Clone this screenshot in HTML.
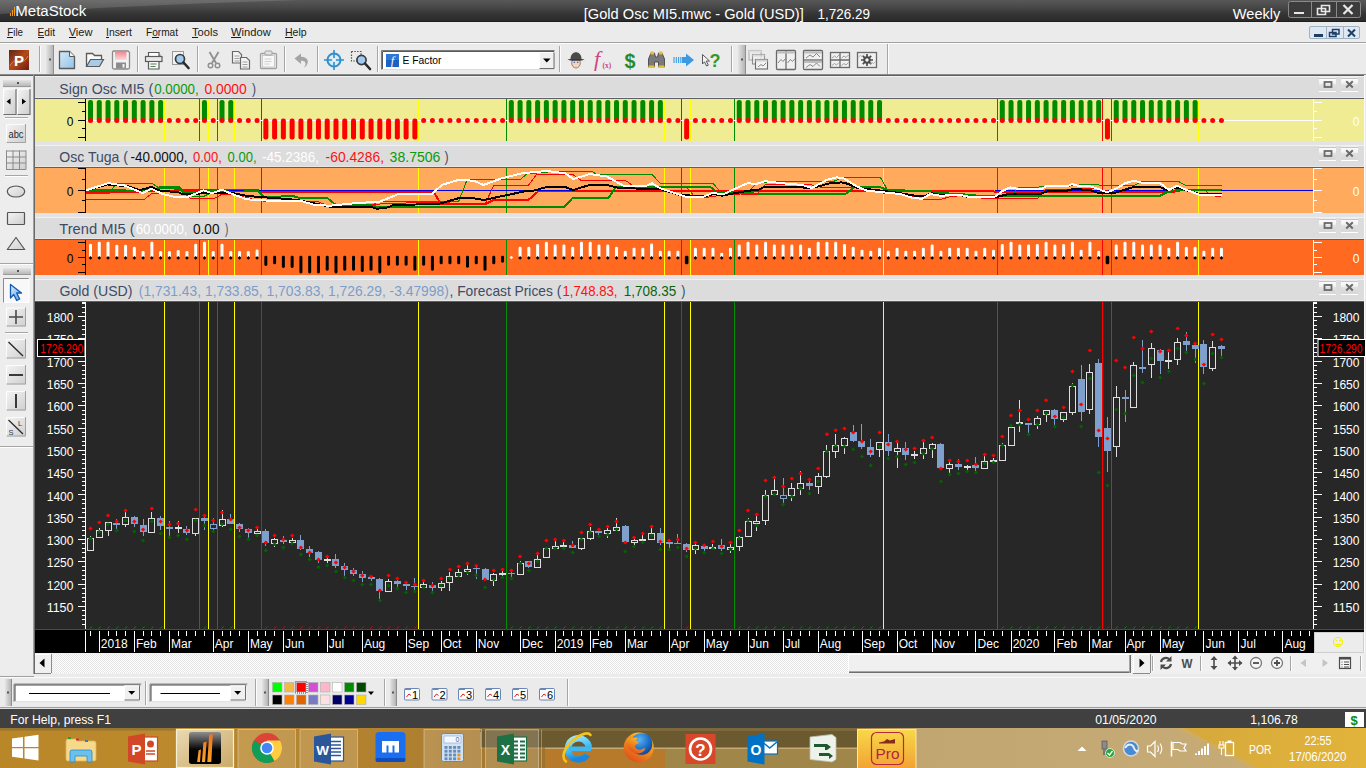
<!DOCTYPE html>
<html lang="en"><head><meta charset="utf-8"><title>MetaStock - Gold Osc MI5</title>
<style>html,body{margin:0;padding:0;background:#f0f0f0;overflow:hidden}svg{display:block}text{white-space:pre}</style>
</head><body>
<svg width="1366" height="768" viewBox="0 0 1366 768" font-family='"Liberation Sans", sans-serif'>
<defs>
<linearGradient id="gTitle" x1="0" y1="0" x2="0" y2="1"><stop offset="0" stop-color="#585858"/><stop offset="0.4" stop-color="#444444"/><stop offset="0.6" stop-color="#363636"/><stop offset="0.93" stop-color="#2b2b2b"/><stop offset="1" stop-color="#161616"/></linearGradient>
<linearGradient id="gBtn" x1="0" y1="0" x2="0" y2="1"><stop offset="0" stop-color="#ffffff"/><stop offset="0.45" stop-color="#f2f2f2"/><stop offset="0.5" stop-color="#e2e2e2"/><stop offset="1" stop-color="#d6d6d6"/></linearGradient>
<linearGradient id="gBtnD" x1="0" y1="0" x2="1" y2="1"><stop offset="0" stop-color="#f4f4f4"/><stop offset="1" stop-color="#cfcfcf"/></linearGradient>
<linearGradient id="gGrip" x1="0" y1="0" x2="1" y2="0"><stop offset="0" stop-color="#e4e4e4"/><stop offset="1" stop-color="#b4b4b4"/></linearGradient>
<linearGradient id="gGripV" x1="0" y1="0" x2="0" y2="1"><stop offset="0" stop-color="#e4e4e4"/><stop offset="1" stop-color="#b8b8b8"/></linearGradient>
<linearGradient id="gTask" x1="0" y1="0" x2="1" y2="0"><stop offset="0" stop-color="#b98628"/><stop offset="0.12" stop-color="#bc8a2c"/><stop offset="0.30" stop-color="#b08030"/><stop offset="0.40" stop-color="#9c7430"/><stop offset="0.62" stop-color="#a87a34"/><stop offset="0.675" stop-color="#c2a672"/><stop offset="0.85" stop-color="#c6aa76"/><stop offset="1" stop-color="#c8ac74"/></linearGradient>
</defs>
<rect x="0" y="0" width="1366" height="768" fill="#f0f0f0" shape-rendering="crispEdges"/>
<g id="titlebar">
<rect x="0" y="0" width="1366" height="22" fill="url(#gTitle)" shape-rendering="crispEdges"/>
<path d="M0 0H300C200 3 80 8 0 14Z" fill="#ffffff" opacity="0.13"/>
<rect x="0" y="21.5" width="1366" height="0.5" fill="#f6f6f6" shape-rendering="crispEdges"/>
<rect x="10" y="13" width="1" height="3" fill="#f39a1e" shape-rendering="crispEdges"/>
<rect x="12" y="10" width="1" height="6" fill="#f39a1e" shape-rendering="crispEdges"/>
<rect x="14" y="7" width="1" height="9" fill="#f39a1e" shape-rendering="crispEdges"/>
<text x="15.3" y="15.8" font-size="14" fill="#ffffff" textLength="71" lengthAdjust="spacingAndGlyphs">MetaStock</text>
<text x="583.8" y="18.6" font-size="14.5" fill="#ffffff" textLength="220" lengthAdjust="spacingAndGlyphs">[Gold Osc MI5.mwc - Gold (USD)]</text>
<text x="817.5" y="18.6" font-size="14.5" fill="#ffffff" textLength="52.5" lengthAdjust="spacingAndGlyphs">1,726.29</text>
<text x="1232.8" y="18.6" font-size="14.5" fill="#ffffff" textLength="47.5" lengthAdjust="spacingAndGlyphs">Weekly</text>
<rect x="1288.5" y="1.5" width="72" height="16" rx="2" fill="#3c3c3c" stroke="#8a8a8a"/>
<rect x="1311" y="2" width="1" height="15" fill="#8a8a8a" shape-rendering="crispEdges"/>
<rect x="1336" y="2" width="1" height="15" fill="#8a8a8a" shape-rendering="crispEdges"/>
<rect x="1294" y="12" width="10" height="2" fill="#e8e8e8" shape-rendering="crispEdges"/>
<path d="M1321.5 5.5h8v6h-8z M1317.5 8.500h8v6h-8z" fill="none" stroke="#e8e8e8" stroke-width="1.6"/>
<path d="M1343.5 5l9 9M1352.500 5l-9 9" stroke="#e8e8e8" stroke-width="2.2"/>
</g>
<g id="menubar">
<rect x="0" y="22" width="1366" height="21" fill="#ebebeb" shape-rendering="crispEdges"/>
<rect x="0" y="42" width="1366" height="1" fill="#a2a2a2" shape-rendering="crispEdges"/>
<text x="7.3" y="35.6" font-size="11.5" fill="#1a1a1a" textLength="15.7" lengthAdjust="spacingAndGlyphs">File</text>
<text x="37.5" y="35.6" font-size="11.5" fill="#1a1a1a" textLength="17.5" lengthAdjust="spacingAndGlyphs">Edit</text>
<text x="68.7" y="35.6" font-size="11.5" fill="#1a1a1a" textLength="23.8" lengthAdjust="spacingAndGlyphs">View</text>
<text x="106" y="35.6" font-size="11.5" fill="#1a1a1a" textLength="26" lengthAdjust="spacingAndGlyphs">Insert</text>
<text x="146" y="35.6" font-size="11.5" fill="#1a1a1a" textLength="32" lengthAdjust="spacingAndGlyphs">Format</text>
<text x="192" y="35.6" font-size="11.5" fill="#1a1a1a" textLength="26" lengthAdjust="spacingAndGlyphs">Tools</text>
<text x="231" y="35.6" font-size="11.5" fill="#1a1a1a" textLength="39.7" lengthAdjust="spacingAndGlyphs">Window</text>
<text x="285" y="35.6" font-size="11.5" fill="#1a1a1a" textLength="21.7" lengthAdjust="spacingAndGlyphs">Help</text>
<rect x="7.3" y="37" width="5.7" height="1" fill="#1a1a1a" shape-rendering="crispEdges"/>
<rect x="37.5" y="37" width="6.5" height="1" fill="#1a1a1a" shape-rendering="crispEdges"/>
<rect x="68.7" y="37" width="6.8" height="1" fill="#1a1a1a" shape-rendering="crispEdges"/>
<rect x="106" y="37" width="2.5" height="1" fill="#1a1a1a" shape-rendering="crispEdges"/>
<rect x="152" y="37" width="6.5" height="1" fill="#1a1a1a" shape-rendering="crispEdges"/>
<rect x="192" y="37" width="6" height="1" fill="#1a1a1a" shape-rendering="crispEdges"/>
<rect x="231" y="37" width="10" height="1" fill="#1a1a1a" shape-rendering="crispEdges"/>
<rect x="285" y="37" width="7.5" height="1" fill="#1a1a1a" shape-rendering="crispEdges"/>
<rect x="1309.5" y="26.5" width="50" height="12" rx="1.5" fill="#dfe8f1" stroke="#9fb2c6"/>
<rect x="1326" y="27" width="1" height="11" fill="#9fb2c6" shape-rendering="crispEdges"/>
<rect x="1343" y="27" width="1" height="11" fill="#9fb2c6" shape-rendering="crispEdges"/>
<rect x="1313.5" y="34" width="9" height="2.5" fill="#1e3e66" shape-rendering="crispEdges"/>
<path d="M1332.500 29.500h6.500v4.500h-6.500z M1329.500 32.500h6.500v4h-6.500z" fill="#dfe8f1" stroke="#1e3e66" stroke-width="1.5"/>
<path d="M1348 29.500l7 7M1355 29.500l-7 7" stroke="#1e3e66" stroke-width="2"/>
</g>
<g id="toolbar">
<rect x="0" y="43" width="1366" height="31" fill="#ebebeb" shape-rendering="crispEdges"/>
<rect x="0" y="43" width="1366" height="1" fill="#fbfbfb" shape-rendering="crispEdges"/>
<rect x="0" y="74" width="1366" height="1" fill="#8a8a8a" shape-rendering="crispEdges"/>
<rect x="0" y="75" width="1364" height="1" fill="#5e5e5e" shape-rendering="crispEdges"/>
</g>
<g id="tbicons"><defs><linearGradient id="gP" x1="0" y1="0" x2="1" y2="1"><stop offset="0" stop-color="#5e2410"/><stop offset="0.5" stop-color="#b24a1c"/><stop offset="1" stop-color="#6a1e10"/></linearGradient><linearGradient id="gDoc" x1="0" y1="0" x2="1" y2="1"><stop offset="0" stop-color="#d6e9f8"/><stop offset="1" stop-color="#8ec3ea"/></linearGradient><linearGradient id="gPink" x1="0" y1="0" x2="0" y2="1"><stop offset="0" stop-color="#f08a94"/><stop offset="1" stop-color="#fbdadd"/></linearGradient></defs><rect x="9" y="50" width="20" height="20" fill="url(#gP)"/><path d="M10 66c6 -12 12 2 18 -10" stroke="#f2a25a" stroke-width="1" fill="none" opacity="0.7"/><text x="19" y="65.500" font-size="15" font-weight="bold" fill="#ffffff" text-anchor="middle">P</text><rect x="39" y="46" width="1" height="26" fill="#a6a6a6"/><rect x="40" y="46" width="1" height="26" fill="#fdfdfd"/><rect x="46" y="45" width="7" height="29" fill="url(#gGrip)"/><rect x="53" y="45" width="1" height="29" fill="#8e8e8e"/><rect x="49" y="58.5" width="2" height="2" fill="#555"/><path d="M59.500 51.500h10l5 5v12h-15z" fill="url(#gDoc)" stroke="#5a5a5a" stroke-width="1.3"/><path d="M69.500 51.500v5h5" fill="#f4f8fb" stroke="#5a5a5a" stroke-width="1"/><path d="M86.500 66.500v-13h6l2 2h7v4" fill="#fbfbfb" stroke="#5a5a5a" stroke-width="1.3"/><path d="M86.500 66.500l4 -7h13l-4 7z" fill="#a8cbe8" stroke="#5a5a5a" stroke-width="1.2"/><path d="M112.500 52.500q0 -1.500 1.500 -1.500h14l1.500 1.500v15q0 1.500 -1.500 1.500h-14q-1.500 0 -1.500 -1.500z" fill="#f2f2f2" stroke="#8a8a8a" stroke-width="1.3"/><rect x="115" y="52" width="11.500" height="8" fill="url(#gPink)"/><rect x="116" y="62.500" width="10" height="6" fill="#8c8c8c"/><rect x="122.500" y="64" width="2" height="3.500" fill="#f2f2f2"/><rect x="137" y="46" width="1" height="26" fill="#a6a6a6"/><rect x="138" y="46" width="1" height="26" fill="#fdfdfd"/><path d="M148.500 57v-4.500h10.500v4.500" fill="#ffffff" stroke="#5a5a5a" stroke-width="1.2"/><rect x="145.500" y="56.500" width="16.500" height="5" fill="#e8e8e8" stroke="#5a5a5a" stroke-width="1.2"/><path d="M148.500 61.500h10.500v7.500h-10.500z" fill="#f4faf4" stroke="#5a5a5a" stroke-width="1.200"/><path d="M150.500 64h6M150.500 66.500h5" stroke="#5a7a5a" stroke-width="1"/><rect x="159" y="54.500" width="1.500" height="1.500" fill="#3aa03a"/><rect x="172.500" y="51.500" width="11" height="13" fill="#f4f4f4" stroke="#9a9a9a"/><circle cx="180" cy="59" r="4.500" fill="#9ecbef" stroke="#3a3a3a" stroke-width="1.700"/><path d="M183.500 62.500l5 5.500" stroke="#2a2a2a" stroke-width="2.600" stroke-linecap="round"/><rect x="197" y="46" width="1" height="26" fill="#a6a6a6"/><rect x="198" y="46" width="1" height="26" fill="#fdfdfd"/><path d="M209.500 52l6.500 11M218.500 52l-6.500 11" stroke="#909090" stroke-width="1.800" fill="none"/><circle cx="210.500" cy="65.500" r="2.300" fill="none" stroke="#909090" stroke-width="1.400"/><circle cx="217.500" cy="65.500" r="2.300" fill="none" stroke="#909090" stroke-width="1.400"/><path d="M232.500 51.500h6l3 3v8.500h-9z" fill="#f4f4f4" stroke="#6a6a6a" stroke-width="1.200"/><path d="M234.500 56h5M234.500 58.500h5M234.500 61h5" stroke="#8a8a8a" stroke-width="0.800"/><path d="M240.500 57.500h6l3 3v8.500h-9z" fill="#f4f4f4" stroke="#6a6a6a" stroke-width="1.200"/><path d="M242.500 62h5M242.500 64.500h5M242.500 67h5" stroke="#8a8a8a" stroke-width="0.800"/><rect x="260.500" y="53.500" width="16" height="15" rx="1" fill="#ededed" stroke="#a2a2a2" stroke-width="1.300"/><rect x="262.500" y="55.500" width="12" height="11.500" fill="#f8f8f8" stroke="#bcbcbc" stroke-width="0.700"/><rect x="265" y="51" width="7" height="4" rx="1" fill="#e2e2e2" stroke="#a2a2a2"/><path d="M264.500 59h7M264.500 61.500h7M264.500 64h5" stroke="#c4c4c4" stroke-width="0.800"/><rect x="284" y="46" width="1" height="26" fill="#a6a6a6"/><rect x="285" y="46" width="1" height="26" fill="#fdfdfd"/><path d="M294.500 58.500l6.500 -5v3.200c8 0 9 7 3 11c3 -4.500 1.500 -7 -3 -7v3.200z" fill="#a4a4a4"/><rect x="317" y="46" width="1" height="26" fill="#a6a6a6"/><rect x="318" y="46" width="1" height="26" fill="#fdfdfd"/><circle cx="334" cy="60" r="6.500" fill="#dfeaf3" stroke="#2d8fd0" stroke-width="2"/><path d="M324 60h20M334 50v20" stroke="#2d8fd0" stroke-width="1.600"/><circle cx="334" cy="60" r="2" fill="#eef4f9"/><rect x="351.500" y="51.500" width="9.500" height="9.500" fill="none" stroke="#555" stroke-width="1.200" stroke-dasharray="1.500 1.300"/><circle cx="361.500" cy="60" r="4.600" fill="#9ecbef" stroke="#3a3a3a" stroke-width="1.700"/><path d="M365 63.500l5 5.500" stroke="#2a2a2a" stroke-width="2.600" stroke-linecap="round"/><rect x="377" y="46" width="1" height="26" fill="#a6a6a6"/><rect x="378" y="46" width="1" height="26" fill="#fdfdfd"/><rect x="381" y="50" width="174" height="20" fill="#ffffff"/><path d="M381.500 70v-19.500h173.500" fill="none" stroke="#7a7a7a"/><path d="M382.500 69v-17.500h171.500" fill="none" stroke="#5a5a5a"/><path d="M381.500 69.500h173v-19" fill="none" stroke="#dcdcdc"/><rect x="386" y="54" width="13" height="13" fill="#1c62c4"/><rect x="386" y="54" width="13" height="6" fill="#3a86e0" opacity="0.6"/><text x="392.500" y="64.500" font-size="12" font-style="italic" font-family='"Liberation Serif", serif' fill="#fff" text-anchor="middle">f</text><text x="402.500" y="64.200" font-size="11.500" fill="#000" textLength="39" lengthAdjust="spacingAndGlyphs">E Factor</text><rect x="539" y="52" width="15" height="17" fill="#f0f0f0"/><path d="M539.500 69v-16.500h14" fill="none" stroke="#ffffff"/><path d="M539.500 68.500h14.500v-16" fill="none" stroke="#6e6e6e"/><path d="M543 58.500h7.500l-3.750 4z" fill="#000"/><rect x="559" y="46" width="1" height="26" fill="#a6a6a6"/><rect x="560" y="46" width="1" height="26" fill="#fdfdfd"/><ellipse cx="576" cy="63" rx="4.300" ry="5" fill="#f6d2bc" stroke="#7a5a4a" stroke-width="0.700"/><path d="M567.500 59.500c3 -1 14 -1 17 0c-1.500 1.800 -15.500 1.800 -17 0z" fill="#3a3a3a"/><path d="M570.500 59c0 -9 11 -9 11 0z" fill="#4a4a4a"/><circle cx="574.300" cy="62.200" r="0.800" fill="#2a6ac0"/><circle cx="577.700" cy="62.200" r="0.800" fill="#2a6ac0"/><text x="594" y="66" font-size="22" font-style="italic" font-family='"Liberation Serif", serif' fill="#d0447e">f</text><text x="602.500" y="67.500" font-size="7.500" font-weight="bold" font-family='"Liberation Serif", serif' fill="#d0447e">(x)</text><text x="630" y="68" font-size="21" font-weight="bold" fill="#2a8a2a" text-anchor="middle" textLength="11" lengthAdjust="spacingAndGlyphs">$</text><path d="M648.500 67v-8l2.500 -6h3.500l1 4h2l1 -4h3.500l2.500 6v8h-6v-5h-4v5z" fill="#7a7a7a" stroke="#3a3a3a" stroke-width="0.800"/><rect x="648.500" y="65.500" width="6" height="2.500" fill="#e8c030"/><rect x="658.500" y="65.500" width="6" height="2.500" fill="#e8c030"/><rect x="650.500" y="51.500" width="3.500" height="3" fill="#e8c030"/><rect x="659" y="51.500" width="3.500" height="3" fill="#e8c030"/><path d="M682 57h4v-3.500l8 6.500l-8 6.500v-3.500h-4z" fill="#3a9ae4"/><path d="M674 57v6M676.300 57v6M678.600 57v6M680.800 57v6" stroke="#3a9ae4" stroke-width="1.100"/><path d="M702.500 54.500l7 6.500h-3.200l2 4.200l-1.800 0.800l-2 -4.200l-2 2.200z" fill="#f4f4f4" stroke="#4a4a4a" stroke-width="0.900"/><text x="715" y="67" font-size="18" font-weight="bold" fill="#2e9a2e" text-anchor="middle">?</text><rect x="731" y="46" width="1" height="26" fill="#a6a6a6"/><rect x="732" y="46" width="1" height="26" fill="#fdfdfd"/><rect x="738" y="45" width="7" height="29" fill="url(#gGrip)"/><rect x="745" y="45" width="1" height="29" fill="#8e8e8e"/><rect x="741" y="58.5" width="2" height="2" fill="#555"/><g opacity="0.45"><rect x="749" y="50.5" width="12" height="9.500" fill="#f2f2f2" stroke="#6a6a6a" stroke-width="1.100"/><rect x="749" y="50.5" width="12" height="2" fill="#cfcfcf"/></g><g opacity="0.7"><rect x="752.5" y="54.5" width="12" height="9.500" fill="#f2f2f2" stroke="#6a6a6a" stroke-width="1.100"/><rect x="752.5" y="54.5" width="12" height="2" fill="#cfcfcf"/></g><g opacity="1"><rect x="755.5" y="59.5" width="12" height="9.500" fill="#f2f2f2" stroke="#6a6a6a" stroke-width="1.100"/><rect x="755.5" y="59.5" width="12" height="2" fill="#cfcfcf"/></g><path d="M758 67l3 -2.500l2 1.500l3 -3" stroke="#7a7a7a" fill="none" stroke-width="0.900"/><rect x="776.500" y="50.500" width="19" height="19" rx="1" fill="#f0f0f0" stroke="#6a6a6a" stroke-width="1.300"/><path d="M786 50.500v19" stroke="#6a6a6a" stroke-width="1.300"/><path d="M777 52.500h18" stroke="#bdbdbd" stroke-width="2"/><path d="M778 63l3 -3.500l2 2l2.500 -3M787.500 63l3 -3.500l2 2l2.500 -3" stroke="#7a7a7a" fill="none" stroke-width="0.900"/><rect x="803.500" y="50.500" width="19" height="19" rx="1" fill="#f0f0f0" stroke="#6a6a6a" stroke-width="1.300"/><path d="M803.500 60h19" stroke="#6a6a6a" stroke-width="1.300"/><path d="M804 52.500h18M804 62h18" stroke="#bdbdbd" stroke-width="2"/><path d="M806 58l4 -3l3 2l3.500 -3.500l3.500 3.500M806 67.500l4 -3l3 2l3.500 -3.500l3.500 3.500" stroke="#7a7a7a" fill="none" stroke-width="0.900"/><rect x="830.500" y="52.500" width="19" height="15" fill="#f0f0f0" stroke="#6a6a6a" stroke-width="1.300"/><path d="M840 52.500v15M830.500 60h19" stroke="#6a6a6a" stroke-width="1.300"/><path d="M832 58l2.500 -2l2 1.500l2.500 -2.500M841.500 58l2.500 -2l2 1.500l2.500 -2.500M832 65.500l2.500 -2l2 1.500l2.500 -2.500M841.500 65.500l2.500 -2l2 1.500l2.500 -2.500" stroke="#8a8a8a" fill="none" stroke-width="0.800"/><rect x="857.500" y="52.500" width="19" height="15" fill="#f0f0f0" stroke="#6a6a6a" stroke-width="1.300"/><path d="M867 54v12M861 60h12M862.800 55.800l8.400 8.400M871.200 55.800l-8.400 8.400" stroke="#4a4a4a" stroke-width="1.700"/><circle cx="867" cy="60" r="3.700" fill="#4a4a4a"/><circle cx="867" cy="60" r="1.700" fill="#f4f4f4"/><path d="M858.500 57l2 -1.500l1.500 1l2 -2M870 64l2 -1.500l1.500 1l2 -2" stroke="#9a9a9a" fill="none" stroke-width="0.700"/><rect x="887" y="44" width="1" height="30" fill="#a6a6a6"/><rect x="888" y="44" width="1" height="30" fill="#fdfdfd"/></g>
<g id="lefttools">
<rect x="0" y="76" width="33" height="600" fill="#ededed" shape-rendering="crispEdges"/>
<rect x="33" y="75" width="1" height="601" fill="#a0a0a0" shape-rendering="crispEdges"/>
<rect x="34" y="75" width="1" height="601" fill="#6a6a6a" shape-rendering="crispEdges"/>
</g>
<g id="lefticons"><defs><linearGradient id="gPtr" x1="0" y1="0" x2="1" y2="1"><stop offset="0" stop-color="#e8f2fc"/><stop offset="1" stop-color="#4a98e8"/></linearGradient></defs><rect x="3" y="80" width="28" height="6" fill="url(#gGripV)"/><rect x="3" y="86" width="28" height="1" fill="#9a9a9a"/><rect x="17" y="82" width="2" height="2" fill="#555"/><rect x="3.5" y="89" width="12" height="25" fill="url(#gBtnD)"/><path d="M3.5 114.500h12.500v-25.500" fill="none" stroke="#6e6e6e" stroke-width="1.200"/><path d="M3.5 114v-25h12" fill="none" stroke="#ffffff"/><rect x="17.5" y="89" width="12" height="25" fill="url(#gBtnD)"/><path d="M17.5 114.500h12.500v-25.500" fill="none" stroke="#6e6e6e" stroke-width="1.200"/><path d="M17.5 114v-25h12" fill="none" stroke="#ffffff"/><path d="M6.500 101.500l4 -3v6z" fill="#000"/><path d="M26 101.500l-4 -3v6z" fill="#000"/><rect x="5" y="117" width="23" height="1" fill="#a6a6a6"/><rect x="5" y="118" width="23" height="1" fill="#fdfdfd"/><rect x="6" y="124" width="20" height="19" fill="url(#gBtnD)"/><path d="M6.5 143v-18.5h19.5" fill="none" stroke="#fcfcfc"/><path d="M6.5 142.5h19v-18.5" fill="none" stroke="#a2a2a2"/><text x="16" y="137.500" font-size="11.500" fill="#2a2a2a" text-anchor="middle" textLength="15" lengthAdjust="spacingAndGlyphs">abc</text><rect x="6" y="150.500" width="20" height="19" fill="url(#gBtnD)"/><path d="M6.500 150.500v19M13 150.500v19M19.500 150.500v19M26 150.500v19M6 151h20M6 157h20M6 163h20M6 169.500h20" stroke="#8a8a8a" stroke-width="1"/><rect x="5" y="175" width="23" height="1" fill="#a6a6a6"/><rect x="5" y="176" width="23" height="1" fill="#fdfdfd"/><ellipse cx="16" cy="191.500" rx="8.700" ry="5.500" fill="url(#gBtnD)" stroke="#555" stroke-width="1.200"/><rect x="7.500" y="212.500" width="17" height="12" rx="0.800" fill="url(#gBtnD)" stroke="#555" stroke-width="1.200"/><path d="M16 237.500l8.700 12h-17.400z" fill="url(#gBtnD)" stroke="#555" stroke-width="1.200" stroke-linejoin="round"/><rect x="0" y="263" width="33" height="1" fill="#a6a6a6"/><rect x="0" y="264" width="33" height="1" fill="#fdfdfd"/><rect x="3" y="268" width="28" height="6" fill="url(#gGripV)"/><rect x="3" y="274" width="28" height="1" fill="#9a9a9a"/><rect x="17" y="270" width="2" height="2" fill="#555"/><rect x="3" y="278" width="26" height="25" fill="#f8f8f8"/><path d="M3.500 303v-24.500h25.500" fill="none" stroke="#8a8a8a"/><path d="M3.500 302.500h25.500v-24" fill="none" stroke="#ffffff"/><path d="M10.500 284.500l11 8.500h-4.800l3 6l-3 1.500l-3 -6l-3.200 3.500z" fill="url(#gPtr)" stroke="#1458b0" stroke-width="1.300" stroke-linejoin="round"/><rect x="6" y="307.5" width="20" height="19" fill="url(#gBtnD)"/><path d="M6.5 326.5v-18.5h19.5" fill="none" stroke="#fcfcfc"/><path d="M6.5 326.0h19v-18.5" fill="none" stroke="#a2a2a2"/><path d="M9 317h14M16 310v14" stroke="#4a4a4a" stroke-width="1.600"/><rect x="5" y="332" width="23" height="1" fill="#a6a6a6"/><rect x="5" y="333" width="23" height="1" fill="#fdfdfd"/><rect x="6" y="339" width="20" height="19.5" fill="url(#gBtnD)"/><path d="M6.5 358.5v-19.0h19.5" fill="none" stroke="#fcfcfc"/><path d="M6.5 358.0h19v-19.0" fill="none" stroke="#a2a2a2"/><path d="M8.500 342l14.500 14" stroke="#2a2a2a" stroke-width="1.400"/><rect x="6" y="365" width="20" height="19.5" fill="url(#gBtnD)"/><path d="M6.5 384.5v-19.0h19.5" fill="none" stroke="#fcfcfc"/><path d="M6.5 384.0h19v-19.0" fill="none" stroke="#a2a2a2"/><path d="M9 375h14" stroke="#3a3a3a" stroke-width="2"/><rect x="6" y="391" width="20" height="19.5" fill="url(#gBtnD)"/><path d="M6.5 410.5v-19.0h19.5" fill="none" stroke="#fcfcfc"/><path d="M6.5 410.0h19v-19.0" fill="none" stroke="#a2a2a2"/><path d="M16 394v14" stroke="#3a3a3a" stroke-width="2"/><rect x="6" y="417" width="20" height="19.5" fill="url(#gBtnD)"/><path d="M6.5 436.5v-19.0h19.5" fill="none" stroke="#fcfcfc"/><path d="M6.5 436.0h19v-19.0" fill="none" stroke="#a2a2a2"/><path d="M8.500 420l14.500 14" stroke="#2a2a2a" stroke-width="1.300"/><text x="18" y="426" font-size="7.500" fill="#3a3a3a">L</text><text x="8.500" y="434.500" font-size="7.500" fill="#3a3a3a">S</text><rect x="0" y="446" width="33" height="1" fill="#a6a6a6"/><rect x="0" y="447" width="33" height="1" fill="#fdfdfd"/></g>
<rect x="35" y="76" width="1329" height="578" fill="#e6e6e6" shape-rendering="crispEdges"/>
<rect x="1364" y="76" width="2" height="600" fill="#ebebeb" shape-rendering="crispEdges"/>
<rect x="1364" y="76" width="1" height="577" fill="#fafafa" shape-rendering="crispEdges"/>
<g id="signosc">
<rect x="35" y="76" width="1329" height="23" fill="#dcdcdc" shape-rendering="crispEdges"/>
<rect x="35" y="76" width="1329" height="1" fill="#f1f1f1" shape-rendering="crispEdges"/>
<rect x="35" y="97" width="1329" height="1" fill="#e8e8e8" shape-rendering="crispEdges"/>
<rect x="35" y="98" width="1329" height="1" fill="#5c6066" shape-rendering="crispEdges"/>
<text x="59.3" y="93.5" font-size="15" fill="#3d4b66" textLength="93.9" lengthAdjust="spacingAndGlyphs">Sign Osc MI5 (</text>
<text x="154.2" y="93.5" font-size="15" fill="#0a9a0a" textLength="44.5" lengthAdjust="spacingAndGlyphs">0.0000,</text>
<text x="204.4" y="93.5" font-size="15" fill="#ff1010" textLength="42.4" lengthAdjust="spacingAndGlyphs">0.0000</text>
<text x="251.9" y="93.5" font-size="15" fill="#3d4b66" textLength="4" lengthAdjust="spacingAndGlyphs">)</text>
<rect x="1319" y="77.5" width="17" height="13" fill="url(#gBtn)"/>
<rect x="1319" y="77.5" width="17" height="1" fill="#c4c4c4" shape-rendering="crispEdges"/>
<rect x="1319" y="90.5" width="17" height="1" fill="#ffffff" shape-rendering="crispEdges"/>
<rect x="1341" y="77.5" width="17" height="13" fill="url(#gBtn)"/>
<rect x="1341" y="77.5" width="17" height="1" fill="#c4c4c4" shape-rendering="crispEdges"/>
<rect x="1341" y="90.5" width="17" height="1" fill="#ffffff" shape-rendering="crispEdges"/>
<rect x="1324.500" y="82" width="7" height="5" fill="none" stroke="#6a6a6a" stroke-width="1.800"/>
<path d="M1346.200 81.3l6.600 6.200m0 -6.200l-6.600 6.200" stroke="#6a6a6a" stroke-width="2"/>
<rect x="35" y="99" width="1329" height="42" fill="#f0ec94" shape-rendering="crispEdges"/>
<rect x="164" y="99" width="1" height="42" fill="#ffff00" shape-rendering="crispEdges"/>
<rect x="208" y="99" width="1" height="42" fill="#ffff00" shape-rendering="crispEdges"/>
<rect x="234" y="99" width="1" height="42" fill="#ffff00" shape-rendering="crispEdges"/>
<rect x="418" y="99" width="1" height="42" fill="#ffff00" shape-rendering="crispEdges"/>
<rect x="664" y="99" width="1" height="42" fill="#ffff00" shape-rendering="crispEdges"/>
<rect x="690" y="99" width="1" height="42" fill="#ffff00" shape-rendering="crispEdges"/>
<rect x="883" y="99" width="1" height="42" fill="#ffff00" shape-rendering="crispEdges"/>
<rect x="1198" y="99" width="1" height="42" fill="#ffff00" shape-rendering="crispEdges"/>
<rect x="199" y="99" width="1" height="42" fill="#008e00" shape-rendering="crispEdges"/>
<rect x="217" y="99" width="1" height="42" fill="#008e00" shape-rendering="crispEdges"/>
<rect x="506" y="99" width="1" height="42" fill="#008e00" shape-rendering="crispEdges"/>
<rect x="734" y="99" width="1" height="42" fill="#008e00" shape-rendering="crispEdges"/>
<rect x="997" y="99" width="1" height="42" fill="#008e00" shape-rendering="crispEdges"/>
<rect x="1111" y="99" width="1" height="42" fill="#008e00" shape-rendering="crispEdges"/>
<rect x="261" y="99" width="1" height="42" fill="#ff0000" shape-rendering="crispEdges"/>
<rect x="681" y="99" width="1" height="42" fill="#ff0000" shape-rendering="crispEdges"/>
<rect x="1102" y="99" width="1" height="42" fill="#ff0000" shape-rendering="crispEdges"/>
<rect x="85" y="120" width="1228" height="1" fill="#ffffff" shape-rendering="crispEdges"/>
<rect x="88" y="100" width="5" height="22" rx="2.2" fill="#008a00"/>
<circle cx="90.5" cy="120.5" r="2.5" fill="#ff0000"/>
<rect x="96.77" y="100" width="5" height="22" rx="2.2" fill="#008a00"/>
<circle cx="99.27" cy="120.5" r="2.5" fill="#ff0000"/>
<rect x="105.53" y="100" width="5" height="22" rx="2.2" fill="#008a00"/>
<circle cx="108.03" cy="120.5" r="2.5" fill="#ff0000"/>
<rect x="114.3" y="100" width="5" height="22" rx="2.2" fill="#008a00"/>
<circle cx="116.8" cy="120.5" r="2.5" fill="#ff0000"/>
<rect x="123.07" y="100" width="5" height="22" rx="2.2" fill="#008a00"/>
<circle cx="125.57" cy="120.5" r="2.5" fill="#ff0000"/>
<rect x="131.83" y="100" width="5" height="22" rx="2.2" fill="#008a00"/>
<circle cx="134.33" cy="120.5" r="2.5" fill="#ff0000"/>
<rect x="140.6" y="100" width="5" height="22" rx="2.2" fill="#008a00"/>
<circle cx="143.1" cy="120.5" r="2.5" fill="#ff0000"/>
<rect x="149.37" y="100" width="5" height="22" rx="2.2" fill="#008a00"/>
<circle cx="151.87" cy="120.5" r="2.5" fill="#ff0000"/>
<rect x="158.14" y="100" width="5" height="22" rx="2.2" fill="#008a00"/>
<circle cx="160.64" cy="120.5" r="2.5" fill="#ff0000"/>
<circle cx="169.4" cy="120.5" r="2.5" fill="#ff0000"/>
<circle cx="178.17" cy="120.5" r="2.5" fill="#ff0000"/>
<circle cx="186.94" cy="120.5" r="2.5" fill="#ff0000"/>
<circle cx="195.7" cy="120.5" r="2.5" fill="#ff0000"/>
<rect x="201.97" y="100" width="5" height="22" rx="2.2" fill="#008a00"/>
<circle cx="204.47" cy="120.5" r="2.5" fill="#ff0000"/>
<circle cx="213.24" cy="120.5" r="2.5" fill="#ff0000"/>
<rect x="219.5" y="100" width="5" height="22" rx="2.2" fill="#008a00"/>
<circle cx="222" cy="120.5" r="2.5" fill="#ff0000"/>
<rect x="228.27" y="100" width="5" height="22" rx="2.2" fill="#008a00"/>
<circle cx="230.77" cy="120.5" r="2.5" fill="#ff0000"/>
<circle cx="239.54" cy="120.5" r="2.5" fill="#ff0000"/>
<circle cx="248.31" cy="120.5" r="2.5" fill="#ff0000"/>
<circle cx="257.07" cy="120.5" r="2.5" fill="#ff0000"/>
<rect x="263.34" y="118.500" width="5" height="21" rx="2.2" fill="#ff0000"/>
<rect x="272.11" y="118.500" width="5" height="21" rx="2.2" fill="#ff0000"/>
<rect x="280.87" y="118.500" width="5" height="21" rx="2.2" fill="#ff0000"/>
<rect x="289.64" y="118.500" width="5" height="21" rx="2.2" fill="#ff0000"/>
<rect x="298.41" y="118.500" width="5" height="21" rx="2.2" fill="#ff0000"/>
<rect x="307.17" y="118.500" width="5" height="21" rx="2.2" fill="#ff0000"/>
<rect x="315.94" y="118.500" width="5" height="21" rx="2.2" fill="#ff0000"/>
<rect x="324.71" y="118.500" width="5" height="21" rx="2.2" fill="#ff0000"/>
<rect x="333.48" y="118.500" width="5" height="21" rx="2.2" fill="#ff0000"/>
<rect x="342.24" y="118.500" width="5" height="21" rx="2.2" fill="#ff0000"/>
<rect x="351.01" y="118.500" width="5" height="21" rx="2.2" fill="#ff0000"/>
<rect x="359.78" y="118.500" width="5" height="21" rx="2.2" fill="#ff0000"/>
<rect x="368.54" y="118.500" width="5" height="21" rx="2.2" fill="#ff0000"/>
<rect x="377.31" y="118.500" width="5" height="21" rx="2.2" fill="#ff0000"/>
<rect x="386.08" y="118.500" width="5" height="21" rx="2.2" fill="#ff0000"/>
<rect x="394.84" y="118.500" width="5" height="21" rx="2.2" fill="#ff0000"/>
<rect x="403.61" y="118.500" width="5" height="21" rx="2.2" fill="#ff0000"/>
<rect x="412.38" y="118.500" width="5" height="21" rx="2.2" fill="#ff0000"/>
<circle cx="423.65" cy="120.5" r="2.5" fill="#ff0000"/>
<circle cx="432.41" cy="120.5" r="2.5" fill="#ff0000"/>
<circle cx="441.18" cy="120.5" r="2.5" fill="#ff0000"/>
<circle cx="449.95" cy="120.5" r="2.5" fill="#ff0000"/>
<circle cx="458.71" cy="120.5" r="2.5" fill="#ff0000"/>
<circle cx="467.48" cy="120.5" r="2.5" fill="#ff0000"/>
<circle cx="476.25" cy="120.5" r="2.5" fill="#ff0000"/>
<circle cx="485.01" cy="120.5" r="2.5" fill="#ff0000"/>
<circle cx="493.78" cy="120.5" r="2.5" fill="#ff0000"/>
<circle cx="502.55" cy="120.5" r="2.5" fill="#ff0000"/>
<rect x="508.82" y="100" width="5" height="22" rx="2.2" fill="#008a00"/>
<circle cx="511.32" cy="120.5" r="2.5" fill="#ff0000"/>
<rect x="517.58" y="100" width="5" height="22" rx="2.2" fill="#008a00"/>
<circle cx="520.08" cy="120.5" r="2.5" fill="#ff0000"/>
<rect x="526.35" y="100" width="5" height="22" rx="2.2" fill="#008a00"/>
<circle cx="528.85" cy="120.5" r="2.5" fill="#ff0000"/>
<rect x="535.12" y="100" width="5" height="22" rx="2.2" fill="#008a00"/>
<circle cx="537.62" cy="120.5" r="2.5" fill="#ff0000"/>
<rect x="543.88" y="100" width="5" height="22" rx="2.2" fill="#008a00"/>
<circle cx="546.38" cy="120.5" r="2.5" fill="#ff0000"/>
<rect x="552.65" y="100" width="5" height="22" rx="2.2" fill="#008a00"/>
<circle cx="555.15" cy="120.5" r="2.5" fill="#ff0000"/>
<rect x="561.42" y="100" width="5" height="22" rx="2.2" fill="#008a00"/>
<circle cx="563.92" cy="120.5" r="2.5" fill="#ff0000"/>
<rect x="570.18" y="100" width="5" height="22" rx="2.2" fill="#008a00"/>
<circle cx="572.68" cy="120.5" r="2.5" fill="#ff0000"/>
<rect x="578.95" y="100" width="5" height="22" rx="2.2" fill="#008a00"/>
<circle cx="581.45" cy="120.5" r="2.5" fill="#ff0000"/>
<rect x="587.72" y="100" width="5" height="22" rx="2.2" fill="#008a00"/>
<circle cx="590.22" cy="120.5" r="2.5" fill="#ff0000"/>
<rect x="596.49" y="100" width="5" height="22" rx="2.2" fill="#008a00"/>
<circle cx="598.99" cy="120.5" r="2.5" fill="#ff0000"/>
<rect x="605.25" y="100" width="5" height="22" rx="2.2" fill="#008a00"/>
<circle cx="607.75" cy="120.5" r="2.5" fill="#ff0000"/>
<rect x="614.02" y="100" width="5" height="22" rx="2.2" fill="#008a00"/>
<circle cx="616.52" cy="120.5" r="2.5" fill="#ff0000"/>
<rect x="622.79" y="100" width="5" height="22" rx="2.2" fill="#008a00"/>
<circle cx="625.29" cy="120.5" r="2.5" fill="#ff0000"/>
<rect x="631.55" y="100" width="5" height="22" rx="2.2" fill="#008a00"/>
<circle cx="634.05" cy="120.5" r="2.5" fill="#ff0000"/>
<rect x="640.32" y="100" width="5" height="22" rx="2.2" fill="#008a00"/>
<circle cx="642.82" cy="120.5" r="2.5" fill="#ff0000"/>
<rect x="649.09" y="100" width="5" height="22" rx="2.2" fill="#008a00"/>
<circle cx="651.59" cy="120.5" r="2.5" fill="#ff0000"/>
<rect x="657.86" y="100" width="5" height="22" rx="2.2" fill="#008a00"/>
<circle cx="660.36" cy="120.5" r="2.5" fill="#ff0000"/>
<circle cx="669.12" cy="120.5" r="2.5" fill="#ff0000"/>
<circle cx="677.89" cy="120.5" r="2.5" fill="#ff0000"/>
<rect x="684.16" y="118.500" width="5" height="21" rx="2.2" fill="#ff0000"/>
<circle cx="695.42" cy="120.5" r="2.5" fill="#ff0000"/>
<circle cx="704.19" cy="120.5" r="2.5" fill="#ff0000"/>
<circle cx="712.96" cy="120.5" r="2.5" fill="#ff0000"/>
<circle cx="721.72" cy="120.5" r="2.5" fill="#ff0000"/>
<circle cx="730.49" cy="120.5" r="2.5" fill="#ff0000"/>
<rect x="736.76" y="100" width="5" height="22" rx="2.2" fill="#008a00"/>
<circle cx="739.26" cy="120.5" r="2.5" fill="#ff0000"/>
<rect x="745.52" y="100" width="5" height="22" rx="2.2" fill="#008a00"/>
<circle cx="748.02" cy="120.5" r="2.5" fill="#ff0000"/>
<rect x="754.29" y="100" width="5" height="22" rx="2.2" fill="#008a00"/>
<circle cx="756.79" cy="120.5" r="2.5" fill="#ff0000"/>
<rect x="763.06" y="100" width="5" height="22" rx="2.2" fill="#008a00"/>
<circle cx="765.56" cy="120.5" r="2.5" fill="#ff0000"/>
<rect x="771.83" y="100" width="5" height="22" rx="2.2" fill="#008a00"/>
<circle cx="774.33" cy="120.5" r="2.5" fill="#ff0000"/>
<rect x="780.59" y="100" width="5" height="22" rx="2.2" fill="#008a00"/>
<circle cx="783.09" cy="120.5" r="2.5" fill="#ff0000"/>
<rect x="789.36" y="100" width="5" height="22" rx="2.2" fill="#008a00"/>
<circle cx="791.86" cy="120.5" r="2.5" fill="#ff0000"/>
<rect x="798.13" y="100" width="5" height="22" rx="2.2" fill="#008a00"/>
<circle cx="800.63" cy="120.5" r="2.5" fill="#ff0000"/>
<rect x="806.89" y="100" width="5" height="22" rx="2.2" fill="#008a00"/>
<circle cx="809.39" cy="120.5" r="2.5" fill="#ff0000"/>
<rect x="815.66" y="100" width="5" height="22" rx="2.2" fill="#008a00"/>
<circle cx="818.16" cy="120.5" r="2.5" fill="#ff0000"/>
<rect x="824.43" y="100" width="5" height="22" rx="2.2" fill="#008a00"/>
<circle cx="826.93" cy="120.5" r="2.5" fill="#ff0000"/>
<rect x="833.19" y="100" width="5" height="22" rx="2.2" fill="#008a00"/>
<circle cx="835.69" cy="120.5" r="2.5" fill="#ff0000"/>
<rect x="841.96" y="100" width="5" height="22" rx="2.2" fill="#008a00"/>
<circle cx="844.46" cy="120.5" r="2.5" fill="#ff0000"/>
<rect x="850.73" y="100" width="5" height="22" rx="2.2" fill="#008a00"/>
<circle cx="853.23" cy="120.5" r="2.5" fill="#ff0000"/>
<rect x="859.5" y="100" width="5" height="22" rx="2.2" fill="#008a00"/>
<circle cx="862" cy="120.5" r="2.5" fill="#ff0000"/>
<rect x="868.26" y="100" width="5" height="22" rx="2.2" fill="#008a00"/>
<circle cx="870.76" cy="120.5" r="2.5" fill="#ff0000"/>
<rect x="877.03" y="100" width="5" height="22" rx="2.2" fill="#008a00"/>
<circle cx="879.53" cy="120.5" r="2.5" fill="#ff0000"/>
<circle cx="888.3" cy="120.5" r="2.5" fill="#ff0000"/>
<circle cx="897.06" cy="120.5" r="2.5" fill="#ff0000"/>
<circle cx="905.83" cy="120.5" r="2.5" fill="#ff0000"/>
<circle cx="914.6" cy="120.5" r="2.5" fill="#ff0000"/>
<circle cx="923.36" cy="120.5" r="2.5" fill="#ff0000"/>
<circle cx="932.13" cy="120.5" r="2.5" fill="#ff0000"/>
<circle cx="940.9" cy="120.5" r="2.5" fill="#ff0000"/>
<circle cx="949.67" cy="120.5" r="2.5" fill="#ff0000"/>
<circle cx="958.43" cy="120.5" r="2.5" fill="#ff0000"/>
<circle cx="967.2" cy="120.5" r="2.5" fill="#ff0000"/>
<circle cx="975.97" cy="120.5" r="2.5" fill="#ff0000"/>
<circle cx="984.73" cy="120.5" r="2.5" fill="#ff0000"/>
<circle cx="993.5" cy="120.5" r="2.5" fill="#ff0000"/>
<rect x="999.77" y="100" width="5" height="22" rx="2.2" fill="#008a00"/>
<circle cx="1002.27" cy="120.5" r="2.5" fill="#ff0000"/>
<rect x="1008.53" y="100" width="5" height="22" rx="2.2" fill="#008a00"/>
<circle cx="1011.03" cy="120.5" r="2.5" fill="#ff0000"/>
<rect x="1017.3" y="100" width="5" height="22" rx="2.2" fill="#008a00"/>
<circle cx="1019.8" cy="120.5" r="2.5" fill="#ff0000"/>
<rect x="1026.07" y="100" width="5" height="22" rx="2.2" fill="#008a00"/>
<circle cx="1028.57" cy="120.5" r="2.5" fill="#ff0000"/>
<rect x="1034.84" y="100" width="5" height="22" rx="2.2" fill="#008a00"/>
<circle cx="1037.34" cy="120.5" r="2.5" fill="#ff0000"/>
<rect x="1043.6" y="100" width="5" height="22" rx="2.2" fill="#008a00"/>
<circle cx="1046.1" cy="120.5" r="2.5" fill="#ff0000"/>
<rect x="1052.37" y="100" width="5" height="22" rx="2.2" fill="#008a00"/>
<circle cx="1054.87" cy="120.5" r="2.5" fill="#ff0000"/>
<rect x="1061.14" y="100" width="5" height="22" rx="2.2" fill="#008a00"/>
<circle cx="1063.64" cy="120.5" r="2.5" fill="#ff0000"/>
<rect x="1069.9" y="100" width="5" height="22" rx="2.2" fill="#008a00"/>
<circle cx="1072.4" cy="120.5" r="2.5" fill="#ff0000"/>
<rect x="1078.67" y="100" width="5" height="22" rx="2.2" fill="#008a00"/>
<circle cx="1081.17" cy="120.5" r="2.5" fill="#ff0000"/>
<rect x="1087.44" y="100" width="5" height="22" rx="2.2" fill="#008a00"/>
<circle cx="1089.94" cy="120.5" r="2.5" fill="#ff0000"/>
<rect x="1096.2" y="100" width="5" height="22" rx="2.2" fill="#008a00"/>
<circle cx="1098.7" cy="120.5" r="2.5" fill="#ff0000"/>
<rect x="1104.97" y="118.500" width="5" height="21" rx="2.2" fill="#ff0000"/>
<rect x="1113.74" y="100" width="5" height="22" rx="2.2" fill="#008a00"/>
<circle cx="1116.24" cy="120.5" r="2.5" fill="#ff0000"/>
<rect x="1122.51" y="100" width="5" height="22" rx="2.2" fill="#008a00"/>
<circle cx="1125.01" cy="120.5" r="2.5" fill="#ff0000"/>
<rect x="1131.27" y="100" width="5" height="22" rx="2.2" fill="#008a00"/>
<circle cx="1133.77" cy="120.5" r="2.5" fill="#ff0000"/>
<rect x="1140.04" y="100" width="5" height="22" rx="2.2" fill="#008a00"/>
<circle cx="1142.54" cy="120.5" r="2.5" fill="#ff0000"/>
<rect x="1148.81" y="100" width="5" height="22" rx="2.2" fill="#008a00"/>
<circle cx="1151.31" cy="120.5" r="2.5" fill="#ff0000"/>
<rect x="1157.57" y="100" width="5" height="22" rx="2.2" fill="#008a00"/>
<circle cx="1160.07" cy="120.5" r="2.5" fill="#ff0000"/>
<rect x="1166.34" y="100" width="5" height="22" rx="2.2" fill="#008a00"/>
<circle cx="1168.84" cy="120.5" r="2.5" fill="#ff0000"/>
<rect x="1175.11" y="100" width="5" height="22" rx="2.2" fill="#008a00"/>
<circle cx="1177.61" cy="120.5" r="2.5" fill="#ff0000"/>
<rect x="1183.88" y="100" width="5" height="22" rx="2.2" fill="#008a00"/>
<circle cx="1186.38" cy="120.5" r="2.5" fill="#ff0000"/>
<rect x="1192.64" y="100" width="5" height="22" rx="2.2" fill="#008a00"/>
<circle cx="1195.14" cy="120.5" r="2.5" fill="#ff0000"/>
<circle cx="1203.91" cy="120.5" r="2.5" fill="#ff0000"/>
<circle cx="1212.68" cy="120.5" r="2.5" fill="#ff0000"/>
<circle cx="1221.44" cy="120.5" r="2.5" fill="#ff0000"/>
<rect x="85" y="99" width="1" height="42" fill="#000000" shape-rendering="crispEdges"/>
<rect x="78" y="102" width="7" height="1" fill="#000000" shape-rendering="crispEdges"/>
<rect x="82" y="110.7" width="3" height="1" fill="#000000" shape-rendering="crispEdges"/>
<rect x="78" y="120" width="7" height="1" fill="#000000" shape-rendering="crispEdges"/>
<rect x="82" y="128" width="3" height="1" fill="#000000" shape-rendering="crispEdges"/>
<rect x="78" y="137.3" width="7" height="1" fill="#000000" shape-rendering="crispEdges"/>
<text x="73.5" y="125.7" font-size="12" fill="#000000" text-anchor="end">0</text>
<rect x="1313" y="99" width="1" height="42" fill="#ffffff" shape-rendering="crispEdges"/>
<rect x="1313" y="102" width="9" height="1" fill="#ffffff" shape-rendering="crispEdges"/>
<rect x="1313" y="110.7" width="4" height="1" fill="#ffffff" shape-rendering="crispEdges"/>
<rect x="1313" y="120" width="9" height="1" fill="#ffffff" shape-rendering="crispEdges"/>
<rect x="1313" y="128" width="4" height="1" fill="#ffffff" shape-rendering="crispEdges"/>
<rect x="1313" y="137.3" width="9" height="1" fill="#ffffff" shape-rendering="crispEdges"/>
<text x="1359.5" y="125.7" font-size="12" fill="#ffffff" text-anchor="end">0</text>
</g>
<g id="osctuga">
<rect x="35" y="141" width="1329" height="4" fill="#e3e3e5" shape-rendering="crispEdges"/>
<rect x="35" y="145" width="1329" height="23" fill="#dcdcdc" shape-rendering="crispEdges"/>
<rect x="35" y="145" width="1329" height="1" fill="#f1f1f1" shape-rendering="crispEdges"/>
<rect x="35" y="166" width="1329" height="1" fill="#e8e8e8" shape-rendering="crispEdges"/>
<rect x="35" y="167" width="1329" height="1" fill="#5c6066" shape-rendering="crispEdges"/>
<text x="59.3" y="161.9" font-size="15" fill="#3d4b66" textLength="68.7" lengthAdjust="spacingAndGlyphs">Osc Tuga (</text>
<text x="130.6" y="161.9" font-size="15" fill="#101010" textLength="56.9" lengthAdjust="spacingAndGlyphs">-40.0000,</text>
<text x="193" y="161.9" font-size="15" fill="#ff1010" textLength="29" lengthAdjust="spacingAndGlyphs">0.00,</text>
<text x="227.6" y="161.9" font-size="15" fill="#0a9a0a" textLength="29" lengthAdjust="spacingAndGlyphs">0.00,</text>
<text x="262" y="161.9" font-size="15" fill="#ffffff" textLength="57" lengthAdjust="spacingAndGlyphs">-45.2386,</text>
<text x="325.6" y="161.9" font-size="15" fill="#ff1010" textLength="58.4" lengthAdjust="spacingAndGlyphs">-60.4286,</text>
<text x="389.6" y="161.9" font-size="15" fill="#0a9a0a" textLength="50.8" lengthAdjust="spacingAndGlyphs">38.7506</text>
<text x="444.4" y="161.9" font-size="15" fill="#3d4b66" textLength="4.1" lengthAdjust="spacingAndGlyphs">)</text>
<rect x="1319" y="146.5" width="17" height="13" fill="url(#gBtn)"/>
<rect x="1319" y="146.5" width="17" height="1" fill="#c4c4c4" shape-rendering="crispEdges"/>
<rect x="1319" y="159.5" width="17" height="1" fill="#ffffff" shape-rendering="crispEdges"/>
<rect x="1341" y="146.5" width="17" height="13" fill="url(#gBtn)"/>
<rect x="1341" y="146.5" width="17" height="1" fill="#c4c4c4" shape-rendering="crispEdges"/>
<rect x="1341" y="159.5" width="17" height="1" fill="#ffffff" shape-rendering="crispEdges"/>
<rect x="1324.500" y="151" width="7" height="5" fill="none" stroke="#6a6a6a" stroke-width="1.800"/>
<path d="M1346.200 150.3l6.600 6.200m0 -6.200l-6.600 6.200" stroke="#6a6a6a" stroke-width="2"/>
<rect x="35" y="168" width="1329" height="45" fill="#ffaa5c" shape-rendering="crispEdges"/>
<rect x="164" y="168" width="1" height="45" fill="#ffff00" shape-rendering="crispEdges"/>
<rect x="208" y="168" width="1" height="45" fill="#ffff00" shape-rendering="crispEdges"/>
<rect x="234" y="168" width="1" height="45" fill="#ffff00" shape-rendering="crispEdges"/>
<rect x="418" y="168" width="1" height="45" fill="#ffff00" shape-rendering="crispEdges"/>
<rect x="664" y="168" width="1" height="45" fill="#ffff00" shape-rendering="crispEdges"/>
<rect x="690" y="168" width="1" height="45" fill="#ffff00" shape-rendering="crispEdges"/>
<rect x="883" y="168" width="1" height="45" fill="#ffff00" shape-rendering="crispEdges"/>
<rect x="1198" y="168" width="1" height="45" fill="#ffff00" shape-rendering="crispEdges"/>
<rect x="199" y="168" width="1" height="45" fill="#008e00" shape-rendering="crispEdges"/>
<rect x="217" y="168" width="1" height="45" fill="#008e00" shape-rendering="crispEdges"/>
<rect x="506" y="168" width="1" height="45" fill="#008e00" shape-rendering="crispEdges"/>
<rect x="734" y="168" width="1" height="45" fill="#008e00" shape-rendering="crispEdges"/>
<rect x="997" y="168" width="1" height="45" fill="#008e00" shape-rendering="crispEdges"/>
<rect x="1111" y="168" width="1" height="45" fill="#008e00" shape-rendering="crispEdges"/>
<rect x="261" y="168" width="1" height="45" fill="#ff0000" shape-rendering="crispEdges"/>
<rect x="681" y="168" width="1" height="45" fill="#ff0000" shape-rendering="crispEdges"/>
<rect x="1102" y="168" width="1" height="45" fill="#ff0000" shape-rendering="crispEdges"/>
<polyline points="86.1,192.3 140,192.3 150,191 184,190.3 258,190.3 262,192 433.5,192 438.6,200 440,204 485.3,204 493.7,200 528.3,200 538.4,191.2 993,191.2 996,192.4 1171,192.4 1180,190.5" fill="none" stroke="#ff0000" stroke-width="2" shape-rendering="crispEdges"/>
<polyline points="86.1,191 97.9,190 109,190.3 125.7,190.5 139.6,191 146.6,190 156.3,188.9 160.5,186.8 178.6,186.8 184.1,191.6 193.9,191.9 202.2,191.6 213.3,191.4 224.5,191.3 257.9,191.3 263.4,196.5 274,197 292,195.7 300,198.2 327.5,198.2 336,205 371.8,205 376.8,207 528,207 564.2,207 572.6,197.9 608.5,197.9 616,186.9 710.3,186.9 717,192.4 748,192.7 756.7,194 845.2,194 851.9,189 855.2,186.5 878.6,186.5 886.9,189.9 932,191.5 940.3,194 960,194 978.4,195.7 1160.3,195.7 1167,192.4 1178,189.9 1221.5,189.9" fill="none" stroke="#008a00" stroke-width="2" shape-rendering="crispEdges"/>
<rect x="227" y="190" width="345" height="1" fill="#0000ee" shape-rendering="crispEdges"/>
<rect x="995" y="190" width="171" height="1" fill="#0000ee" shape-rendering="crispEdges"/>
<rect x="1221" y="190" width="92" height="1" fill="#0000ee" shape-rendering="crispEdges"/>
<polyline points="86.1,193.7 109,193.7 116,183.6 151.5,183.3 157.7,186.8 160.5,188.9 178.6,188.9 186.9,195.8 203.6,196.5 209.2,193.7 217.5,191 224.5,189.6 257.9,190.3 263.4,196.5 274,197 292,195.7 300,198.2 327.5,198.2 336,205 371.8,205 378.5,201.6 458.6,201.6 467,180 520.4,179.4 526.7,174 553.4,171.5 591.8,171.5 596.8,174.4 651.9,174.4 660.2,183.2 712.8,183.2 720.3,191.5 748.3,192.7 755.9,183.7 771.7,181.5 833.5,181.5 843.5,177 880.2,177 886.9,189 932,191.5 960,194 980,195.7 1011.8,194.9 1018.4,187.4 1065.2,186.5 1080.2,184.9 1093.6,184.9 1133.6,185.7 1142,181.2 1178,181.2 1185.6,185.4 1221.5,185.4" fill="none" stroke="#008a00" stroke-width="1" shape-rendering="crispEdges"/>
<polyline points="86.1,199.7 143.8,199.7 151.5,193.7 161.9,193.7 181.4,197.9 214.7,198.3 221.7,194.4 231.4,194.4 248.1,197.9 257.9,200.7 274,201.7 297,202 318,201.6 327.5,205.7 340,206.6 371.8,205 386.8,203.2 438.6,202.7 485,204 493.7,185.7 528.3,185.4 536.7,174.4 572.6,174.4 580.9,180.2 625.2,180.2 635.2,187.4 686.9,187.4 695.3,197.4 707,197.4 722,195 740,194 756.7,194.4 765,184.9 810,184.4 820,187 856.9,188 883.6,193.2 907,194.9 923.6,199.6 942,199 950.4,196.6 968,194.9 981.7,198.2 1037.6,198.5 1045.1,189.9 1073.5,189 1093.6,188.2 1110,191.5 1172,191.5 1178,189.4 1204,189.4 1211.5,195.7 1221.5,196.6" fill="none" stroke="#ff0000" stroke-width="1" shape-rendering="crispEdges"/>
<polyline points="86.1,190.3 107.6,184.4 116,185.4 127.1,185.8 139.6,190.3 151.5,186.8 157.7,190.3 178.6,192.3 181.4,193.7 191,193.7 231.4,192.8 246.7,195.8 262,197.2 274,197.9 297,200 330,206.6 370,206.6 376.8,208.7 386.8,207.7 393.5,205 438.6,204 458.6,198.2 473.6,198.2 483.6,200 528,190.7 533.4,190.7 548.4,186.5 563.4,186.5 573.4,189.9 590,184.9 606.8,184.9 620,188.2 660,189 680,194.9 693.6,195.7 707,195.7 713.7,194 722,195.7 748,190.7 758.4,189.9 765,186.5 800,186.5 805,187.9 815,187.4 830,183.2 841.8,182.4 848.5,184 857,188 880,190.5 895,192.4 915.3,195.7 925.3,195.7 932,193.2 940,195 960,194.9 970,197.4 995,197.4 1008.4,194 1040,194 1046.8,191.5 1066.8,190.7 1073.5,189 1090,190 1098.6,193.2 1113.6,193.2 1127,189 1135.3,186.5 1158.7,186.5 1167,189.9 1177,187.4 1188,190.7 1199.8,194 1221.5,194" fill="none" stroke="#000000" stroke-width="2" shape-rendering="crispEdges"/>
<polyline points="86.1,190.3 108.3,183 116,184.4 124.3,185.4 142.4,193 151.5,188.9 161.9,193.7 174.4,196.9 186.9,197.2 203.6,190.3 212,193.3 221.7,189.6 231.4,193.7 246.7,199.3 263.4,200.3 274,201.1 297,201.5 300,200.7 315,205 330,205.7 355,203.2 380,201.6 398.5,194 432,193.7 442,184.9 458.6,179.9 473.6,180.7 483.6,184.9 502,178.2 522,173.2 546.7,171 565,173.2 573.4,179 590,174 606.8,176.5 623.5,185.7 645.2,186.5 651.9,183.2 660.2,188.2 685.3,196.6 703.6,196.6 712,193.2 723.7,194 740,186.5 747.5,183.2 756,184 765,181.2 781.7,183.2 801.8,184.9 811.8,187.9 826.8,179.9 836.8,177.4 843.5,178.2 856.9,186.5 866.9,190.7 883.6,192.4 900.3,194 913.6,198.2 922,198.7 930.3,194 940.3,195.7 960,194.9 971.7,197.4 995,196.6 1001.7,191.5 1010,187.4 1018.4,189 1041.8,189 1046.8,185.7 1066.8,186.5 1071.9,184 1080.2,186.5 1088.5,185.7 1098.6,189 1106.9,192.4 1115.3,189 1125.3,183.2 1133.6,180.7 1143.6,183.2 1160.3,183.2 1168.7,189.9 1177,185.7 1186.4,189.9 1201.4,195.4 1221.5,195.4" fill="none" stroke="#ffffff" stroke-width="2" shape-rendering="crispEdges"/>
<rect x="85" y="168" width="1" height="45" fill="#000000" shape-rendering="crispEdges"/>
<rect x="78" y="168.2" width="7" height="1" fill="#000000" shape-rendering="crispEdges"/>
<rect x="82" y="178.9" width="3" height="1" fill="#000000" shape-rendering="crispEdges"/>
<rect x="78" y="190" width="7" height="1" fill="#000000" shape-rendering="crispEdges"/>
<rect x="82" y="199.9" width="3" height="1" fill="#000000" shape-rendering="crispEdges"/>
<rect x="78" y="211.5" width="7" height="1" fill="#000000" shape-rendering="crispEdges"/>
<text x="73.5" y="195.7" font-size="12" fill="#000000" text-anchor="end">0</text>
<rect x="1313" y="168" width="1" height="45" fill="#ffffff" shape-rendering="crispEdges"/>
<rect x="1313" y="168.2" width="9" height="1" fill="#ffffff" shape-rendering="crispEdges"/>
<rect x="1313" y="178.9" width="4" height="1" fill="#ffffff" shape-rendering="crispEdges"/>
<rect x="1313" y="190" width="9" height="1" fill="#ffffff" shape-rendering="crispEdges"/>
<rect x="1313" y="199.9" width="4" height="1" fill="#ffffff" shape-rendering="crispEdges"/>
<rect x="1313" y="211.5" width="9" height="1" fill="#ffffff" shape-rendering="crispEdges"/>
<text x="1359.5" y="195.7" font-size="12" fill="#ffffff" text-anchor="end">0</text>
</g>
<g id="trend">
<rect x="35" y="213" width="1329" height="4" fill="#e3e3e5" shape-rendering="crispEdges"/>
<rect x="35" y="217" width="1329" height="23" fill="#dcdcdc" shape-rendering="crispEdges"/>
<rect x="35" y="217" width="1329" height="1" fill="#f1f1f1" shape-rendering="crispEdges"/>
<rect x="35" y="238" width="1329" height="1" fill="#e8e8e8" shape-rendering="crispEdges"/>
<rect x="35" y="239" width="1329" height="1" fill="#5c6066" shape-rendering="crispEdges"/>
<text x="59.3" y="234.1" font-size="15" fill="#3d4b66" textLength="75.4" lengthAdjust="spacingAndGlyphs">Trend MI5 (</text>
<text x="135.7" y="234.1" font-size="15" fill="#ffffff" textLength="51.8" lengthAdjust="spacingAndGlyphs">60.0000,</text>
<text x="193" y="234.1" font-size="15" fill="#101010" textLength="26.5" lengthAdjust="spacingAndGlyphs">0.00</text>
<text x="225" y="234.1" font-size="15" fill="#3d4b66" textLength="3.3" lengthAdjust="spacingAndGlyphs">)</text>
<rect x="1319" y="218.5" width="17" height="13" fill="url(#gBtn)"/>
<rect x="1319" y="218.5" width="17" height="1" fill="#c4c4c4" shape-rendering="crispEdges"/>
<rect x="1319" y="231.5" width="17" height="1" fill="#ffffff" shape-rendering="crispEdges"/>
<rect x="1341" y="218.5" width="17" height="13" fill="url(#gBtn)"/>
<rect x="1341" y="218.5" width="17" height="1" fill="#c4c4c4" shape-rendering="crispEdges"/>
<rect x="1341" y="231.5" width="17" height="1" fill="#ffffff" shape-rendering="crispEdges"/>
<rect x="1324.500" y="223" width="7" height="5" fill="none" stroke="#6a6a6a" stroke-width="1.800"/>
<path d="M1346.200 222.3l6.600 6.200m0 -6.200l-6.600 6.200" stroke="#6a6a6a" stroke-width="2"/>
<rect x="35" y="240" width="1329" height="35" fill="#ff6a20" shape-rendering="crispEdges"/>
<rect x="164" y="240" width="1" height="35" fill="#ffff00" shape-rendering="crispEdges"/>
<rect x="208" y="240" width="1" height="35" fill="#ffff00" shape-rendering="crispEdges"/>
<rect x="234" y="240" width="1" height="35" fill="#ffff00" shape-rendering="crispEdges"/>
<rect x="418" y="240" width="1" height="35" fill="#ffff00" shape-rendering="crispEdges"/>
<rect x="664" y="240" width="1" height="35" fill="#ffff00" shape-rendering="crispEdges"/>
<rect x="690" y="240" width="1" height="35" fill="#ffff00" shape-rendering="crispEdges"/>
<rect x="883" y="240" width="1" height="35" fill="#ffff00" shape-rendering="crispEdges"/>
<rect x="1198" y="240" width="1" height="35" fill="#ffff00" shape-rendering="crispEdges"/>
<rect x="199" y="240" width="1" height="35" fill="#008e00" shape-rendering="crispEdges"/>
<rect x="217" y="240" width="1" height="35" fill="#008e00" shape-rendering="crispEdges"/>
<rect x="506" y="240" width="1" height="35" fill="#008e00" shape-rendering="crispEdges"/>
<rect x="734" y="240" width="1" height="35" fill="#008e00" shape-rendering="crispEdges"/>
<rect x="997" y="240" width="1" height="35" fill="#008e00" shape-rendering="crispEdges"/>
<rect x="1111" y="240" width="1" height="35" fill="#008e00" shape-rendering="crispEdges"/>
<rect x="261" y="240" width="1" height="35" fill="#ff0000" shape-rendering="crispEdges"/>
<rect x="681" y="240" width="1" height="35" fill="#ff0000" shape-rendering="crispEdges"/>
<rect x="1102" y="240" width="1" height="35" fill="#ff0000" shape-rendering="crispEdges"/>
<rect x="89" y="243.8" width="3" height="13.7" rx="1.4" fill="#ffffff"/>
<path d="M90.5 256.1l1.8 1.8l-1.8 1.8l-1.8 -1.8z" fill="#000"/>
<rect x="97.77" y="241.7" width="3" height="15.8" rx="1.4" fill="#ffffff"/>
<path d="M99.27 256.1l1.8 1.8l-1.8 1.8l-1.8 -1.8z" fill="#000"/>
<rect x="106.53" y="241.7" width="3" height="15.8" rx="1.4" fill="#ffffff"/>
<path d="M108.03 256.1l1.8 1.8l-1.8 1.8l-1.8 -1.8z" fill="#000"/>
<rect x="115.3" y="244.8" width="3" height="12.7" rx="1.4" fill="#ffffff"/>
<path d="M116.8 256.1l1.8 1.8l-1.8 1.8l-1.8 -1.8z" fill="#000"/>
<rect x="124.07" y="244.8" width="3" height="12.7" rx="1.4" fill="#ffffff"/>
<path d="M125.57 256.1l1.8 1.8l-1.8 1.8l-1.8 -1.8z" fill="#000"/>
<rect x="132.83" y="246.8" width="3" height="10.7" rx="1.4" fill="#ffffff"/>
<path d="M134.33 256.1l1.8 1.8l-1.8 1.8l-1.8 -1.8z" fill="#000"/>
<rect x="141.6" y="250.9" width="3" height="6.6" rx="1.4" fill="#ffffff"/>
<path d="M143.1 256.1l1.8 1.8l-1.8 1.8l-1.8 -1.8z" fill="#000"/>
<rect x="150.37" y="241.7" width="3" height="15.8" rx="1.4" fill="#ffffff"/>
<path d="M151.87 256.1l1.8 1.8l-1.8 1.8l-1.8 -1.8z" fill="#000"/>
<rect x="159.14" y="250.9" width="3" height="6.6" rx="1.4" fill="#ffffff"/>
<path d="M160.64 256.1l1.8 1.8l-1.8 1.8l-1.8 -1.8z" fill="#000"/>
<rect x="167.9" y="250.9" width="3" height="6.6" rx="1.4" fill="#ffffff"/>
<path d="M169.4 256.1l1.8 1.8l-1.8 1.8l-1.8 -1.8z" fill="#000"/>
<rect x="176.67" y="249.9" width="3" height="7.6" rx="1.4" fill="#ffffff"/>
<path d="M178.17 256.1l1.8 1.8l-1.8 1.8l-1.8 -1.8z" fill="#000"/>
<rect x="185.44" y="250.9" width="3" height="6.6" rx="1.4" fill="#ffffff"/>
<path d="M186.94 256.1l1.8 1.8l-1.8 1.8l-1.8 -1.8z" fill="#000"/>
<rect x="194.2" y="243.8" width="3" height="13.7" rx="1.4" fill="#ffffff"/>
<path d="M195.7 256.1l1.8 1.8l-1.8 1.8l-1.8 -1.8z" fill="#000"/>
<rect x="202.97" y="241.7" width="3" height="15.8" rx="1.4" fill="#ffffff"/>
<path d="M204.47 256.1l1.8 1.8l-1.8 1.8l-1.8 -1.8z" fill="#000"/>
<rect x="211.74" y="250.9" width="3" height="6.6" rx="1.4" fill="#ffffff"/>
<path d="M213.24 256.1l1.8 1.8l-1.8 1.8l-1.8 -1.8z" fill="#000"/>
<rect x="220.5" y="243.8" width="3" height="13.7" rx="1.4" fill="#ffffff"/>
<path d="M222 256.1l1.8 1.8l-1.8 1.8l-1.8 -1.8z" fill="#000"/>
<rect x="229.27" y="250.9" width="3" height="6.6" rx="1.4" fill="#ffffff"/>
<path d="M230.77 256.1l1.8 1.8l-1.8 1.8l-1.8 -1.8z" fill="#000"/>
<rect x="238.04" y="250.9" width="3" height="6.6" rx="1.4" fill="#ffffff"/>
<path d="M239.54 256.1l1.8 1.8l-1.8 1.8l-1.8 -1.8z" fill="#000"/>
<rect x="246.81" y="250.9" width="3" height="6.6" rx="1.4" fill="#ffffff"/>
<path d="M248.31 256.1l1.8 1.8l-1.8 1.8l-1.8 -1.8z" fill="#000"/>
<rect x="255.57" y="249.5" width="3" height="8" rx="1.4" fill="#ffffff"/>
<path d="M257.07 256.1l1.8 1.8l-1.8 1.8l-1.8 -1.8z" fill="#000"/>
<rect x="264.34" y="255.7" width="3" height="10.2" rx="1.4" fill="#000000"/>
<rect x="273.11" y="255.7" width="3" height="8.6" rx="1.4" fill="#000000"/>
<rect x="281.87" y="255.7" width="3" height="12.3" rx="1.4" fill="#000000"/>
<rect x="290.64" y="255.7" width="3" height="12.3" rx="1.4" fill="#000000"/>
<rect x="299.41" y="255.7" width="3" height="17.8" rx="1.4" fill="#000000"/>
<rect x="308.17" y="255.7" width="3" height="17.8" rx="1.4" fill="#000000"/>
<rect x="316.94" y="255.7" width="3" height="17.8" rx="1.4" fill="#000000"/>
<rect x="325.71" y="255.7" width="3" height="15" rx="1.4" fill="#000000"/>
<rect x="334.48" y="255.7" width="3" height="17.8" rx="1.4" fill="#000000"/>
<rect x="343.24" y="255.7" width="3" height="15" rx="1.4" fill="#000000"/>
<rect x="352.01" y="255.7" width="3" height="15" rx="1.4" fill="#000000"/>
<rect x="360.78" y="255.7" width="3" height="16.2" rx="1.4" fill="#000000"/>
<rect x="369.54" y="255.7" width="3" height="15" rx="1.4" fill="#000000"/>
<rect x="378.31" y="255.7" width="3" height="17.8" rx="1.4" fill="#000000"/>
<rect x="387.08" y="255.7" width="3" height="10" rx="1.4" fill="#000000"/>
<rect x="395.84" y="255.7" width="3" height="10" rx="1.4" fill="#000000"/>
<rect x="404.61" y="255.7" width="3" height="10" rx="1.4" fill="#000000"/>
<rect x="413.38" y="255.7" width="3" height="15" rx="1.4" fill="#000000"/>
<rect x="422.15" y="255.7" width="3" height="10" rx="1.4" fill="#000000"/>
<rect x="430.91" y="255.7" width="3" height="15" rx="1.4" fill="#000000"/>
<rect x="439.68" y="255.7" width="3" height="8.6" rx="1.4" fill="#000000"/>
<rect x="448.45" y="255.7" width="3" height="8.6" rx="1.4" fill="#000000"/>
<rect x="457.21" y="255.7" width="3" height="8.6" rx="1.4" fill="#000000"/>
<rect x="465.98" y="255.7" width="3" height="12" rx="1.4" fill="#000000"/>
<rect x="474.75" y="255.7" width="3" height="8.6" rx="1.4" fill="#000000"/>
<rect x="483.51" y="255.7" width="3" height="15" rx="1.4" fill="#000000"/>
<rect x="492.28" y="255.7" width="3" height="8.6" rx="1.4" fill="#000000"/>
<rect x="501.05" y="255.7" width="3" height="7" rx="1.4" fill="#000000"/>
<path d="M511.32 255.7l1.8 1.8l-1.8 1.8l-1.8 -1.8z" fill="#ffffff"/>
<rect x="518.58" y="246.8" width="3" height="10.7" rx="1.4" fill="#ffffff"/>
<path d="M520.08 256.1l1.8 1.8l-1.8 1.8l-1.8 -1.8z" fill="#000"/>
<rect x="527.35" y="246.8" width="3" height="10.7" rx="1.4" fill="#ffffff"/>
<path d="M528.85 256.1l1.8 1.8l-1.8 1.8l-1.8 -1.8z" fill="#000"/>
<rect x="536.12" y="244" width="3" height="13.5" rx="1.4" fill="#ffffff"/>
<path d="M537.62 256.1l1.8 1.8l-1.8 1.8l-1.8 -1.8z" fill="#000"/>
<rect x="544.88" y="241.8" width="3" height="15.7" rx="1.4" fill="#ffffff"/>
<path d="M546.38 256.1l1.8 1.8l-1.8 1.8l-1.8 -1.8z" fill="#000"/>
<rect x="553.65" y="244.6" width="3" height="12.9" rx="1.4" fill="#ffffff"/>
<path d="M555.15 256.1l1.8 1.8l-1.8 1.8l-1.8 -1.8z" fill="#000"/>
<rect x="562.42" y="244.6" width="3" height="12.9" rx="1.4" fill="#ffffff"/>
<path d="M563.92 256.1l1.8 1.8l-1.8 1.8l-1.8 -1.8z" fill="#000"/>
<rect x="571.18" y="246.8" width="3" height="10.7" rx="1.4" fill="#ffffff"/>
<path d="M572.68 256.1l1.8 1.8l-1.8 1.8l-1.8 -1.8z" fill="#000"/>
<rect x="579.95" y="241.8" width="3" height="15.7" rx="1.4" fill="#ffffff"/>
<path d="M581.45 256.1l1.8 1.8l-1.8 1.8l-1.8 -1.8z" fill="#000"/>
<rect x="588.72" y="241.8" width="3" height="15.7" rx="1.4" fill="#ffffff"/>
<path d="M590.22 256.1l1.8 1.8l-1.8 1.8l-1.8 -1.8z" fill="#000"/>
<rect x="597.49" y="244.6" width="3" height="12.9" rx="1.4" fill="#ffffff"/>
<path d="M598.99 256.1l1.8 1.8l-1.8 1.8l-1.8 -1.8z" fill="#000"/>
<rect x="606.25" y="244.6" width="3" height="12.9" rx="1.4" fill="#ffffff"/>
<path d="M607.75 256.1l1.8 1.8l-1.8 1.8l-1.8 -1.8z" fill="#000"/>
<rect x="615.02" y="246.8" width="3" height="10.7" rx="1.4" fill="#ffffff"/>
<path d="M616.52 256.1l1.8 1.8l-1.8 1.8l-1.8 -1.8z" fill="#000"/>
<rect x="623.79" y="250.7" width="3" height="6.8" rx="1.4" fill="#ffffff"/>
<path d="M625.29 256.1l1.8 1.8l-1.8 1.8l-1.8 -1.8z" fill="#000"/>
<rect x="632.55" y="247.7" width="3" height="9.8" rx="1.4" fill="#ffffff"/>
<path d="M634.05 256.1l1.8 1.8l-1.8 1.8l-1.8 -1.8z" fill="#000"/>
<rect x="641.32" y="247.7" width="3" height="9.8" rx="1.4" fill="#ffffff"/>
<path d="M642.82 256.1l1.8 1.8l-1.8 1.8l-1.8 -1.8z" fill="#000"/>
<rect x="650.09" y="243.5" width="3" height="14" rx="1.4" fill="#ffffff"/>
<path d="M651.59 256.1l1.8 1.8l-1.8 1.8l-1.8 -1.8z" fill="#000"/>
<rect x="658.86" y="250.7" width="3" height="6.8" rx="1.4" fill="#ffffff"/>
<path d="M660.36 256.1l1.8 1.8l-1.8 1.8l-1.8 -1.8z" fill="#000"/>
<rect x="667.62" y="250.7" width="3" height="6.8" rx="1.4" fill="#ffffff"/>
<path d="M669.12 256.1l1.8 1.8l-1.8 1.8l-1.8 -1.8z" fill="#000"/>
<rect x="676.39" y="250.7" width="3" height="6.8" rx="1.4" fill="#ffffff"/>
<path d="M677.89 256.1l1.8 1.8l-1.8 1.8l-1.8 -1.8z" fill="#000"/>
<rect x="684.86" y="255.7" width="3.6" height="8.6" rx="1.4" fill="#000000"/>
<rect x="693.92" y="247.7" width="3" height="9.8" rx="1.4" fill="#ffffff"/>
<path d="M695.42 256.1l1.8 1.8l-1.8 1.8l-1.8 -1.8z" fill="#000"/>
<rect x="702.69" y="247.7" width="3" height="9.8" rx="1.4" fill="#ffffff"/>
<path d="M704.19 256.1l1.8 1.8l-1.8 1.8l-1.8 -1.8z" fill="#000"/>
<rect x="711.46" y="247.7" width="3" height="9.8" rx="1.4" fill="#ffffff"/>
<path d="M712.96 256.1l1.8 1.8l-1.8 1.8l-1.8 -1.8z" fill="#000"/>
<rect x="720.22" y="252.7" width="3" height="4.8" rx="1.4" fill="#ffffff"/>
<path d="M721.72 256.1l1.8 1.8l-1.8 1.8l-1.8 -1.8z" fill="#000"/>
<rect x="728.99" y="247.7" width="3" height="9.8" rx="1.4" fill="#ffffff"/>
<path d="M730.49 256.1l1.8 1.8l-1.8 1.8l-1.8 -1.8z" fill="#000"/>
<rect x="737.76" y="244.6" width="3" height="12.9" rx="1.4" fill="#ffffff"/>
<path d="M739.26 256.1l1.8 1.8l-1.8 1.8l-1.8 -1.8z" fill="#000"/>
<rect x="746.52" y="241.8" width="3" height="15.7" rx="1.4" fill="#ffffff"/>
<path d="M748.02 256.1l1.8 1.8l-1.8 1.8l-1.8 -1.8z" fill="#000"/>
<rect x="755.29" y="244.6" width="3" height="12.9" rx="1.4" fill="#ffffff"/>
<path d="M756.79 256.1l1.8 1.8l-1.8 1.8l-1.8 -1.8z" fill="#000"/>
<rect x="764.06" y="241.8" width="3" height="15.7" rx="1.4" fill="#ffffff"/>
<path d="M765.56 256.1l1.8 1.8l-1.8 1.8l-1.8 -1.8z" fill="#000"/>
<rect x="772.83" y="244.6" width="3" height="12.9" rx="1.4" fill="#ffffff"/>
<path d="M774.33 256.1l1.8 1.8l-1.8 1.8l-1.8 -1.8z" fill="#000"/>
<rect x="781.59" y="244.6" width="3" height="12.9" rx="1.4" fill="#ffffff"/>
<path d="M783.09 256.1l1.8 1.8l-1.8 1.8l-1.8 -1.8z" fill="#000"/>
<rect x="790.36" y="244.6" width="3" height="12.9" rx="1.4" fill="#ffffff"/>
<path d="M791.86 256.1l1.8 1.8l-1.8 1.8l-1.8 -1.8z" fill="#000"/>
<rect x="799.13" y="244.6" width="3" height="12.9" rx="1.4" fill="#ffffff"/>
<path d="M800.63 256.1l1.8 1.8l-1.8 1.8l-1.8 -1.8z" fill="#000"/>
<rect x="807.89" y="247.7" width="3" height="9.8" rx="1.4" fill="#ffffff"/>
<path d="M809.39 256.1l1.8 1.8l-1.8 1.8l-1.8 -1.8z" fill="#000"/>
<rect x="816.66" y="241.8" width="3" height="15.7" rx="1.4" fill="#ffffff"/>
<path d="M818.16 256.1l1.8 1.8l-1.8 1.8l-1.8 -1.8z" fill="#000"/>
<rect x="825.43" y="241.8" width="3" height="15.7" rx="1.4" fill="#ffffff"/>
<path d="M826.93 256.1l1.8 1.8l-1.8 1.8l-1.8 -1.8z" fill="#000"/>
<rect x="834.19" y="241.8" width="3" height="15.7" rx="1.4" fill="#ffffff"/>
<path d="M835.69 256.1l1.8 1.8l-1.8 1.8l-1.8 -1.8z" fill="#000"/>
<rect x="842.96" y="244" width="3" height="13.5" rx="1.4" fill="#ffffff"/>
<path d="M844.46 256.1l1.8 1.8l-1.8 1.8l-1.8 -1.8z" fill="#000"/>
<rect x="851.73" y="246.8" width="3" height="10.7" rx="1.4" fill="#ffffff"/>
<path d="M853.23 256.1l1.8 1.8l-1.8 1.8l-1.8 -1.8z" fill="#000"/>
<rect x="860.5" y="249.7" width="3" height="7.8" rx="1.4" fill="#ffffff"/>
<path d="M862 256.1l1.8 1.8l-1.8 1.8l-1.8 -1.8z" fill="#000"/>
<rect x="869.26" y="250.7" width="3" height="6.8" rx="1.4" fill="#ffffff"/>
<path d="M870.76 256.1l1.8 1.8l-1.8 1.8l-1.8 -1.8z" fill="#000"/>
<rect x="878.03" y="247.7" width="3" height="9.8" rx="1.4" fill="#ffffff"/>
<path d="M879.53 256.1l1.8 1.8l-1.8 1.8l-1.8 -1.8z" fill="#000"/>
<rect x="886.8" y="250.7" width="3" height="6.8" rx="1.4" fill="#ffffff"/>
<path d="M888.3 256.1l1.8 1.8l-1.8 1.8l-1.8 -1.8z" fill="#000"/>
<rect x="895.56" y="247.7" width="3" height="9.8" rx="1.4" fill="#ffffff"/>
<path d="M897.06 256.1l1.8 1.8l-1.8 1.8l-1.8 -1.8z" fill="#000"/>
<rect x="904.33" y="250.7" width="3" height="6.8" rx="1.4" fill="#ffffff"/>
<path d="M905.83 256.1l1.8 1.8l-1.8 1.8l-1.8 -1.8z" fill="#000"/>
<rect x="913.1" y="250.7" width="3" height="6.8" rx="1.4" fill="#ffffff"/>
<path d="M914.6 256.1l1.8 1.8l-1.8 1.8l-1.8 -1.8z" fill="#000"/>
<rect x="921.86" y="247.7" width="3" height="9.8" rx="1.4" fill="#ffffff"/>
<path d="M923.36 256.1l1.8 1.8l-1.8 1.8l-1.8 -1.8z" fill="#000"/>
<rect x="930.63" y="244.6" width="3" height="12.9" rx="1.4" fill="#ffffff"/>
<path d="M932.13 256.1l1.8 1.8l-1.8 1.8l-1.8 -1.8z" fill="#000"/>
<rect x="939.4" y="250.7" width="3" height="6.8" rx="1.4" fill="#ffffff"/>
<path d="M940.9 256.1l1.8 1.8l-1.8 1.8l-1.8 -1.8z" fill="#000"/>
<rect x="948.17" y="247.7" width="3" height="9.8" rx="1.4" fill="#ffffff"/>
<path d="M949.67 256.1l1.8 1.8l-1.8 1.8l-1.8 -1.8z" fill="#000"/>
<rect x="956.93" y="247.7" width="3" height="9.8" rx="1.4" fill="#ffffff"/>
<path d="M958.43 256.1l1.8 1.8l-1.8 1.8l-1.8 -1.8z" fill="#000"/>
<rect x="965.7" y="247.7" width="3" height="9.8" rx="1.4" fill="#ffffff"/>
<path d="M967.2 256.1l1.8 1.8l-1.8 1.8l-1.8 -1.8z" fill="#000"/>
<rect x="974.47" y="250.7" width="3" height="6.8" rx="1.4" fill="#ffffff"/>
<path d="M975.97 256.1l1.8 1.8l-1.8 1.8l-1.8 -1.8z" fill="#000"/>
<rect x="983.23" y="247.7" width="3" height="9.8" rx="1.4" fill="#ffffff"/>
<path d="M984.73 256.1l1.8 1.8l-1.8 1.8l-1.8 -1.8z" fill="#000"/>
<rect x="992" y="249.7" width="3" height="7.8" rx="1.4" fill="#ffffff"/>
<path d="M993.5 256.1l1.8 1.8l-1.8 1.8l-1.8 -1.8z" fill="#000"/>
<rect x="1000.77" y="244" width="3" height="13.5" rx="1.4" fill="#ffffff"/>
<path d="M1002.27 256.1l1.8 1.8l-1.8 1.8l-1.8 -1.8z" fill="#000"/>
<rect x="1009.53" y="241.8" width="3" height="15.7" rx="1.4" fill="#ffffff"/>
<path d="M1011.03 256.1l1.8 1.8l-1.8 1.8l-1.8 -1.8z" fill="#000"/>
<rect x="1018.3" y="244.6" width="3" height="12.9" rx="1.4" fill="#ffffff"/>
<path d="M1019.8 256.1l1.8 1.8l-1.8 1.8l-1.8 -1.8z" fill="#000"/>
<rect x="1027.07" y="244.6" width="3" height="12.9" rx="1.4" fill="#ffffff"/>
<path d="M1028.57 256.1l1.8 1.8l-1.8 1.8l-1.8 -1.8z" fill="#000"/>
<rect x="1035.84" y="244" width="3" height="13.5" rx="1.4" fill="#ffffff"/>
<path d="M1037.34 256.1l1.8 1.8l-1.8 1.8l-1.8 -1.8z" fill="#000"/>
<rect x="1044.6" y="241.8" width="3" height="15.7" rx="1.4" fill="#ffffff"/>
<path d="M1046.1 256.1l1.8 1.8l-1.8 1.8l-1.8 -1.8z" fill="#000"/>
<rect x="1053.37" y="244.6" width="3" height="12.9" rx="1.4" fill="#ffffff"/>
<path d="M1054.87 256.1l1.8 1.8l-1.8 1.8l-1.8 -1.8z" fill="#000"/>
<rect x="1062.14" y="244" width="3" height="13.5" rx="1.4" fill="#ffffff"/>
<path d="M1063.64 256.1l1.8 1.8l-1.8 1.8l-1.8 -1.8z" fill="#000"/>
<rect x="1070.9" y="241.8" width="3" height="15.7" rx="1.4" fill="#ffffff"/>
<path d="M1072.4 256.1l1.8 1.8l-1.8 1.8l-1.8 -1.8z" fill="#000"/>
<rect x="1079.67" y="249.7" width="3" height="7.8" rx="1.4" fill="#ffffff"/>
<path d="M1081.17 256.1l1.8 1.8l-1.8 1.8l-1.8 -1.8z" fill="#000"/>
<rect x="1088.44" y="241.8" width="3" height="15.7" rx="1.4" fill="#ffffff"/>
<path d="M1089.94 256.1l1.8 1.8l-1.8 1.8l-1.8 -1.8z" fill="#000"/>
<rect x="1097.2" y="250.7" width="3" height="6.8" rx="1.4" fill="#ffffff"/>
<path d="M1098.7 256.1l1.8 1.8l-1.8 1.8l-1.8 -1.8z" fill="#000"/>
<rect x="1105.67" y="255.7" width="3.6" height="8.6" rx="1.4" fill="#000000"/>
<rect x="1114.74" y="244.6" width="3" height="12.9" rx="1.4" fill="#ffffff"/>
<path d="M1116.24 256.1l1.8 1.8l-1.8 1.8l-1.8 -1.8z" fill="#000"/>
<rect x="1123.51" y="241.8" width="3" height="15.7" rx="1.4" fill="#ffffff"/>
<path d="M1125.01 256.1l1.8 1.8l-1.8 1.8l-1.8 -1.8z" fill="#000"/>
<rect x="1132.27" y="241.8" width="3" height="15.7" rx="1.4" fill="#ffffff"/>
<path d="M1133.77 256.1l1.8 1.8l-1.8 1.8l-1.8 -1.8z" fill="#000"/>
<rect x="1141.04" y="244.6" width="3" height="12.9" rx="1.4" fill="#ffffff"/>
<path d="M1142.54 256.1l1.8 1.8l-1.8 1.8l-1.8 -1.8z" fill="#000"/>
<rect x="1149.81" y="244.6" width="3" height="12.9" rx="1.4" fill="#ffffff"/>
<path d="M1151.31 256.1l1.8 1.8l-1.8 1.8l-1.8 -1.8z" fill="#000"/>
<rect x="1158.57" y="244.6" width="3" height="12.9" rx="1.4" fill="#ffffff"/>
<path d="M1160.07 256.1l1.8 1.8l-1.8 1.8l-1.8 -1.8z" fill="#000"/>
<rect x="1167.34" y="247.7" width="3" height="9.8" rx="1.4" fill="#ffffff"/>
<path d="M1168.84 256.1l1.8 1.8l-1.8 1.8l-1.8 -1.8z" fill="#000"/>
<rect x="1176.11" y="241.8" width="3" height="15.7" rx="1.4" fill="#ffffff"/>
<path d="M1177.61 256.1l1.8 1.8l-1.8 1.8l-1.8 -1.8z" fill="#000"/>
<rect x="1184.88" y="246.8" width="3" height="10.7" rx="1.4" fill="#ffffff"/>
<path d="M1186.38 256.1l1.8 1.8l-1.8 1.8l-1.8 -1.8z" fill="#000"/>
<rect x="1193.64" y="246.8" width="3" height="10.7" rx="1.4" fill="#ffffff"/>
<path d="M1195.14 256.1l1.8 1.8l-1.8 1.8l-1.8 -1.8z" fill="#000"/>
<rect x="1202.41" y="250.7" width="3" height="6.8" rx="1.4" fill="#ffffff"/>
<path d="M1203.91 256.1l1.8 1.8l-1.8 1.8l-1.8 -1.8z" fill="#000"/>
<rect x="1211.18" y="247.7" width="3" height="9.8" rx="1.4" fill="#ffffff"/>
<path d="M1212.68 256.1l1.8 1.8l-1.8 1.8l-1.8 -1.8z" fill="#000"/>
<rect x="1219.94" y="247.7" width="3" height="9.8" rx="1.4" fill="#ffffff"/>
<path d="M1221.44 256.1l1.8 1.8l-1.8 1.8l-1.8 -1.8z" fill="#000"/>
<rect x="85" y="240" width="1" height="35" fill="#000000" shape-rendering="crispEdges"/>
<rect x="78" y="241.8" width="7" height="1" fill="#000000" shape-rendering="crispEdges"/>
<rect x="82" y="249.9" width="3" height="1" fill="#000000" shape-rendering="crispEdges"/>
<rect x="78" y="257" width="7" height="1" fill="#000000" shape-rendering="crispEdges"/>
<rect x="82" y="264.1" width="3" height="1" fill="#000000" shape-rendering="crispEdges"/>
<rect x="78" y="272.1" width="7" height="1" fill="#000000" shape-rendering="crispEdges"/>
<text x="73.5" y="262.7" font-size="12" fill="#000000" text-anchor="end">0</text>
<rect x="1313" y="240" width="1" height="35" fill="#ffffff" shape-rendering="crispEdges"/>
<rect x="1313" y="241.8" width="9" height="1" fill="#ffffff" shape-rendering="crispEdges"/>
<rect x="1313" y="249.9" width="4" height="1" fill="#ffffff" shape-rendering="crispEdges"/>
<rect x="1313" y="257" width="9" height="1" fill="#ffffff" shape-rendering="crispEdges"/>
<rect x="1313" y="264.1" width="4" height="1" fill="#ffffff" shape-rendering="crispEdges"/>
<rect x="1313" y="272.1" width="9" height="1" fill="#ffffff" shape-rendering="crispEdges"/>
<text x="1359.5" y="262.7" font-size="12" fill="#ffffff" text-anchor="end">0</text>
</g>
<g id="gold">
<rect x="35" y="275" width="1329" height="4" fill="#e3e3e5" shape-rendering="crispEdges"/>
<rect x="35" y="279" width="1329" height="23" fill="#dcdcdc" shape-rendering="crispEdges"/>
<rect x="35" y="279" width="1329" height="1" fill="#f1f1f1" shape-rendering="crispEdges"/>
<rect x="35" y="300" width="1329" height="1" fill="#e8e8e8" shape-rendering="crispEdges"/>
<rect x="35" y="301" width="1329" height="1" fill="#5c6066" shape-rendering="crispEdges"/>
<text x="59.5" y="296.3" font-size="15" fill="#3d4b66" textLength="73" lengthAdjust="spacingAndGlyphs">Gold (USD)</text>
<text x="138.8" y="296.3" font-size="15" fill="#7d9dc9" textLength="310" lengthAdjust="spacingAndGlyphs">(1,731.43, 1,733.85, 1,703.83, 1,726.29, -3.47998)</text>
<text x="449.5" y="296.3" font-size="15" fill="#3d4b66" textLength="111.8" lengthAdjust="spacingAndGlyphs">, Forecast Prices (</text>
<text x="562.5" y="296.3" font-size="15" fill="#ff1010" textLength="55" lengthAdjust="spacingAndGlyphs">1,748.83,</text>
<text x="623.8" y="296.3" font-size="15" fill="#0a640a" textLength="52.5" lengthAdjust="spacingAndGlyphs">1,708.35</text>
<text x="681.3" y="296.3" font-size="15" fill="#3d4b66" textLength="4.2" lengthAdjust="spacingAndGlyphs">)</text>
<rect x="1319" y="280.5" width="17" height="13" fill="url(#gBtn)"/>
<rect x="1319" y="280.5" width="17" height="1" fill="#c4c4c4" shape-rendering="crispEdges"/>
<rect x="1319" y="293.5" width="17" height="1" fill="#ffffff" shape-rendering="crispEdges"/>
<rect x="1341" y="280.5" width="17" height="13" fill="url(#gBtn)"/>
<rect x="1341" y="280.5" width="17" height="1" fill="#c4c4c4" shape-rendering="crispEdges"/>
<rect x="1341" y="293.5" width="17" height="1" fill="#ffffff" shape-rendering="crispEdges"/>
<rect x="1324.500" y="285" width="7" height="5" fill="none" stroke="#6a6a6a" stroke-width="1.800"/>
<path d="M1346.200 284.3l6.600 6.200m0 -6.200l-6.600 6.200" stroke="#6a6a6a" stroke-width="2"/>
<rect x="35" y="302" width="1329" height="327" fill="#272727" shape-rendering="crispEdges"/>
<rect x="164" y="302" width="1" height="327" fill="#ffff00" shape-rendering="crispEdges"/>
<rect x="208" y="302" width="1" height="327" fill="#ffff00" shape-rendering="crispEdges"/>
<rect x="234" y="302" width="1" height="327" fill="#ffff00" shape-rendering="crispEdges"/>
<rect x="418" y="302" width="1" height="327" fill="#ffff00" shape-rendering="crispEdges"/>
<rect x="664" y="302" width="1" height="327" fill="#ffff00" shape-rendering="crispEdges"/>
<rect x="690" y="302" width="1" height="327" fill="#ffff00" shape-rendering="crispEdges"/>
<rect x="883" y="302" width="1" height="327" fill="#ffff00" shape-rendering="crispEdges"/>
<rect x="1198" y="302" width="1" height="327" fill="#ffff00" shape-rendering="crispEdges"/>
<rect x="199" y="302" width="1" height="327" fill="#008e00" shape-rendering="crispEdges"/>
<rect x="217" y="302" width="1" height="327" fill="#008e00" shape-rendering="crispEdges"/>
<rect x="506" y="302" width="1" height="327" fill="#008e00" shape-rendering="crispEdges"/>
<rect x="734" y="302" width="1" height="327" fill="#008e00" shape-rendering="crispEdges"/>
<rect x="997" y="302" width="1" height="327" fill="#008e00" shape-rendering="crispEdges"/>
<rect x="1111" y="302" width="1" height="327" fill="#008e00" shape-rendering="crispEdges"/>
<rect x="261" y="302" width="1" height="327" fill="#ff0000" shape-rendering="crispEdges"/>
<rect x="681" y="302" width="1" height="327" fill="#ff0000" shape-rendering="crispEdges"/>
<rect x="1102" y="302" width="1" height="327" fill="#ff0000" shape-rendering="crispEdges"/>
<rect x="90" y="536" width="1" height="2" fill="#dedede" shape-rendering="crispEdges"/>
<rect x="87.5" y="538.5" width="6" height="12" fill="none" stroke="#dedede" stroke-width="1" shape-rendering="crispEdges"/>
<rect x="99" y="528" width="1" height="2" fill="#dedede" shape-rendering="crispEdges"/>
<rect x="96.5" y="530.5" width="6" height="7" fill="none" stroke="#dedede" stroke-width="1" shape-rendering="crispEdges"/>
<rect x="108" y="531" width="1" height="5" fill="#dedede" shape-rendering="crispEdges"/>
<rect x="105.5" y="522.5" width="6" height="8" fill="none" stroke="#dedede" stroke-width="1" shape-rendering="crispEdges"/>
<rect x="116" y="519" width="1" height="4" fill="#7f9fcc" shape-rendering="crispEdges"/>
<rect x="116" y="525" width="1" height="4" fill="#7f9fcc" shape-rendering="crispEdges"/>
<rect x="113" y="523" width="7" height="2" fill="#7f9fcc" shape-rendering="crispEdges"/>
<rect x="125" y="511" width="1" height="6" fill="#dedede" shape-rendering="crispEdges"/>
<rect x="125" y="525" width="1" height="2" fill="#dedede" shape-rendering="crispEdges"/>
<rect x="122.5" y="517.5" width="6" height="7" fill="none" stroke="#dedede" stroke-width="1" shape-rendering="crispEdges"/>
<rect x="134" y="516" width="1" height="1" fill="#7f9fcc" shape-rendering="crispEdges"/>
<rect x="134" y="524" width="1" height="3" fill="#7f9fcc" shape-rendering="crispEdges"/>
<rect x="131" y="517" width="7" height="7" fill="#7f9fcc" shape-rendering="crispEdges"/>
<rect x="143" y="519" width="1" height="6" fill="#7f9fcc" shape-rendering="crispEdges"/>
<rect x="143" y="532" width="1" height="4" fill="#7f9fcc" shape-rendering="crispEdges"/>
<rect x="140" y="525" width="7" height="7" fill="#7f9fcc" shape-rendering="crispEdges"/>
<rect x="151" y="512" width="1" height="6" fill="#dedede" shape-rendering="crispEdges"/>
<rect x="148.5" y="518.5" width="6" height="14" fill="none" stroke="#dedede" stroke-width="1" shape-rendering="crispEdges"/>
<rect x="160" y="516" width="1" height="2" fill="#7f9fcc" shape-rendering="crispEdges"/>
<rect x="160" y="526" width="1" height="4" fill="#7f9fcc" shape-rendering="crispEdges"/>
<rect x="157" y="518" width="7" height="8" fill="#7f9fcc" shape-rendering="crispEdges"/>
<rect x="169" y="521" width="1" height="6" fill="#7f9fcc" shape-rendering="crispEdges"/>
<rect x="169" y="529" width="1" height="7" fill="#7f9fcc" shape-rendering="crispEdges"/>
<rect x="166" y="527" width="7" height="2" fill="#7f9fcc" shape-rendering="crispEdges"/>
<rect x="178" y="521" width="1" height="7" fill="#dedede" shape-rendering="crispEdges"/>
<rect x="178" y="528" width="1" height="5" fill="#dedede" shape-rendering="crispEdges"/>
<rect x="175" y="527" width="7" height="2" fill="#dedede" shape-rendering="crispEdges"/>
<rect x="186" y="526" width="1" height="3" fill="#7f9fcc" shape-rendering="crispEdges"/>
<rect x="186" y="533" width="1" height="2" fill="#7f9fcc" shape-rendering="crispEdges"/>
<rect x="183" y="529" width="7" height="4" fill="#7f9fcc" shape-rendering="crispEdges"/>
<rect x="195" y="534" width="1" height="2" fill="#dedede" shape-rendering="crispEdges"/>
<rect x="192.5" y="518.5" width="6" height="15" fill="none" stroke="#dedede" stroke-width="1" shape-rendering="crispEdges"/>
<rect x="204" y="517" width="1" height="1" fill="#7f9fcc" shape-rendering="crispEdges"/>
<rect x="204" y="521" width="1" height="9" fill="#7f9fcc" shape-rendering="crispEdges"/>
<rect x="201" y="518" width="7" height="3" fill="#7f9fcc" shape-rendering="crispEdges"/>
<rect x="213" y="518" width="1" height="6" fill="#7f9fcc" shape-rendering="crispEdges"/>
<rect x="213" y="529" width="1" height="1" fill="#7f9fcc" shape-rendering="crispEdges"/>
<rect x="210.5" y="524.5" width="6" height="4" fill="none" stroke="#7f9fcc" stroke-width="1" shape-rendering="crispEdges"/>
<rect x="222" y="510" width="1" height="9" fill="#dedede" shape-rendering="crispEdges"/>
<rect x="222" y="526" width="1" height="1" fill="#dedede" shape-rendering="crispEdges"/>
<rect x="219.5" y="519.5" width="6" height="6" fill="none" stroke="#dedede" stroke-width="1" shape-rendering="crispEdges"/>
<rect x="230" y="514" width="1" height="5" fill="#7f9fcc" shape-rendering="crispEdges"/>
<rect x="227" y="519" width="7" height="5" fill="#7f9fcc" shape-rendering="crispEdges"/>
<rect x="239" y="523" width="1" height="1" fill="#7f9fcc" shape-rendering="crispEdges"/>
<rect x="239" y="529" width="1" height="3" fill="#7f9fcc" shape-rendering="crispEdges"/>
<rect x="236" y="524" width="7" height="5" fill="#7f9fcc" shape-rendering="crispEdges"/>
<rect x="248" y="528" width="1" height="1" fill="#7f9fcc" shape-rendering="crispEdges"/>
<rect x="248" y="533" width="1" height="5" fill="#7f9fcc" shape-rendering="crispEdges"/>
<rect x="245" y="529" width="7" height="4" fill="#7f9fcc" shape-rendering="crispEdges"/>
<rect x="257" y="529" width="1" height="2" fill="#dedede" shape-rendering="crispEdges"/>
<rect x="254.5" y="531.5" width="6" height="2" fill="none" stroke="#dedede" stroke-width="1" shape-rendering="crispEdges"/>
<rect x="265" y="529" width="1" height="2" fill="#7f9fcc" shape-rendering="crispEdges"/>
<rect x="265" y="543" width="1" height="3" fill="#7f9fcc" shape-rendering="crispEdges"/>
<rect x="262" y="531" width="7" height="12" fill="#7f9fcc" shape-rendering="crispEdges"/>
<rect x="274" y="538" width="1" height="1" fill="#dedede" shape-rendering="crispEdges"/>
<rect x="274" y="544" width="1" height="3" fill="#dedede" shape-rendering="crispEdges"/>
<rect x="271.5" y="539.5" width="6" height="4" fill="none" stroke="#dedede" stroke-width="1" shape-rendering="crispEdges"/>
<rect x="283" y="536" width="1" height="4" fill="#7f9fcc" shape-rendering="crispEdges"/>
<rect x="283" y="542" width="1" height="2" fill="#7f9fcc" shape-rendering="crispEdges"/>
<rect x="280" y="540" width="7" height="2" fill="#7f9fcc" shape-rendering="crispEdges"/>
<rect x="292" y="538" width="1" height="2" fill="#dedede" shape-rendering="crispEdges"/>
<rect x="289.5" y="540.5" width="6" height="2" fill="none" stroke="#dedede" stroke-width="1" shape-rendering="crispEdges"/>
<rect x="300" y="535" width="1" height="5" fill="#7f9fcc" shape-rendering="crispEdges"/>
<rect x="300" y="549" width="1" height="1" fill="#7f9fcc" shape-rendering="crispEdges"/>
<rect x="297" y="540" width="7" height="9" fill="#7f9fcc" shape-rendering="crispEdges"/>
<rect x="309" y="546" width="1" height="3" fill="#7f9fcc" shape-rendering="crispEdges"/>
<rect x="309" y="553" width="1" height="4" fill="#7f9fcc" shape-rendering="crispEdges"/>
<rect x="306" y="549" width="7" height="4" fill="#7f9fcc" shape-rendering="crispEdges"/>
<rect x="318" y="551" width="1" height="1" fill="#7f9fcc" shape-rendering="crispEdges"/>
<rect x="318" y="560" width="1" height="3" fill="#7f9fcc" shape-rendering="crispEdges"/>
<rect x="315" y="552" width="7" height="8" fill="#7f9fcc" shape-rendering="crispEdges"/>
<rect x="327" y="557" width="1" height="3" fill="#dedede" shape-rendering="crispEdges"/>
<rect x="327" y="560" width="1" height="3" fill="#dedede" shape-rendering="crispEdges"/>
<rect x="324" y="559" width="7" height="2" fill="#dedede" shape-rendering="crispEdges"/>
<rect x="335" y="554" width="1" height="5" fill="#7f9fcc" shape-rendering="crispEdges"/>
<rect x="335" y="566" width="1" height="2" fill="#7f9fcc" shape-rendering="crispEdges"/>
<rect x="332" y="559" width="7" height="7" fill="#7f9fcc" shape-rendering="crispEdges"/>
<rect x="344" y="563" width="1" height="3" fill="#7f9fcc" shape-rendering="crispEdges"/>
<rect x="344" y="570" width="1" height="6" fill="#7f9fcc" shape-rendering="crispEdges"/>
<rect x="341" y="566" width="7" height="4" fill="#7f9fcc" shape-rendering="crispEdges"/>
<rect x="353" y="568" width="1" height="2" fill="#7f9fcc" shape-rendering="crispEdges"/>
<rect x="353" y="574" width="1" height="2" fill="#7f9fcc" shape-rendering="crispEdges"/>
<rect x="350" y="570" width="7" height="4" fill="#7f9fcc" shape-rendering="crispEdges"/>
<rect x="362" y="571" width="1" height="3" fill="#7f9fcc" shape-rendering="crispEdges"/>
<rect x="362" y="578" width="1" height="4" fill="#7f9fcc" shape-rendering="crispEdges"/>
<rect x="359" y="574" width="7" height="4" fill="#7f9fcc" shape-rendering="crispEdges"/>
<rect x="371" y="576" width="1" height="1" fill="#7f9fcc" shape-rendering="crispEdges"/>
<rect x="371" y="579" width="1" height="2" fill="#7f9fcc" shape-rendering="crispEdges"/>
<rect x="368" y="577" width="7" height="2" fill="#7f9fcc" shape-rendering="crispEdges"/>
<rect x="379" y="578" width="1" height="1" fill="#7f9fcc" shape-rendering="crispEdges"/>
<rect x="379" y="591" width="1" height="8" fill="#7f9fcc" shape-rendering="crispEdges"/>
<rect x="376" y="579" width="7" height="12" fill="#7f9fcc" shape-rendering="crispEdges"/>
<rect x="388" y="579" width="1" height="2" fill="#dedede" shape-rendering="crispEdges"/>
<rect x="385.5" y="581.5" width="6" height="10" fill="none" stroke="#dedede" stroke-width="1" shape-rendering="crispEdges"/>
<rect x="397" y="580" width="1" height="1" fill="#7f9fcc" shape-rendering="crispEdges"/>
<rect x="397" y="584" width="1" height="3" fill="#7f9fcc" shape-rendering="crispEdges"/>
<rect x="394" y="581" width="7" height="3" fill="#7f9fcc" shape-rendering="crispEdges"/>
<rect x="406" y="583" width="1" height="1" fill="#7f9fcc" shape-rendering="crispEdges"/>
<rect x="406" y="586" width="1" height="4" fill="#7f9fcc" shape-rendering="crispEdges"/>
<rect x="403" y="584" width="7" height="2" fill="#7f9fcc" shape-rendering="crispEdges"/>
<rect x="414" y="578" width="1" height="8" fill="#7f9fcc" shape-rendering="crispEdges"/>
<rect x="414" y="586" width="1" height="4" fill="#7f9fcc" shape-rendering="crispEdges"/>
<rect x="411" y="586" width="7" height="1" fill="#7f9fcc" shape-rendering="crispEdges"/>
<rect x="423" y="582" width="1" height="2" fill="#dedede" shape-rendering="crispEdges"/>
<rect x="420.5" y="584.5" width="6" height="3" fill="none" stroke="#dedede" stroke-width="1" shape-rendering="crispEdges"/>
<rect x="432" y="582" width="1" height="3" fill="#7f9fcc" shape-rendering="crispEdges"/>
<rect x="432" y="588" width="1" height="3" fill="#7f9fcc" shape-rendering="crispEdges"/>
<rect x="429" y="585" width="7" height="3" fill="#7f9fcc" shape-rendering="crispEdges"/>
<rect x="441" y="581" width="1" height="2" fill="#dedede" shape-rendering="crispEdges"/>
<rect x="441" y="588" width="1" height="3" fill="#dedede" shape-rendering="crispEdges"/>
<rect x="438.5" y="583.5" width="6" height="4" fill="none" stroke="#dedede" stroke-width="1" shape-rendering="crispEdges"/>
<rect x="449" y="572" width="1" height="4" fill="#dedede" shape-rendering="crispEdges"/>
<rect x="449" y="583" width="1" height="8" fill="#dedede" shape-rendering="crispEdges"/>
<rect x="446.5" y="576.5" width="6" height="6" fill="none" stroke="#dedede" stroke-width="1" shape-rendering="crispEdges"/>
<rect x="458" y="569" width="1" height="3" fill="#dedede" shape-rendering="crispEdges"/>
<rect x="455.5" y="572.5" width="6" height="4" fill="none" stroke="#dedede" stroke-width="1" shape-rendering="crispEdges"/>
<rect x="467" y="565" width="1" height="4" fill="#dedede" shape-rendering="crispEdges"/>
<rect x="467" y="572" width="1" height="3" fill="#dedede" shape-rendering="crispEdges"/>
<rect x="464.5" y="569.5" width="6" height="2" fill="none" stroke="#dedede" stroke-width="1" shape-rendering="crispEdges"/>
<rect x="476" y="565" width="1" height="3" fill="#7f9fcc" shape-rendering="crispEdges"/>
<rect x="476" y="568" width="1" height="11" fill="#7f9fcc" shape-rendering="crispEdges"/>
<rect x="473" y="568" width="7" height="1" fill="#7f9fcc" shape-rendering="crispEdges"/>
<rect x="485" y="568" width="1" height="1" fill="#7f9fcc" shape-rendering="crispEdges"/>
<rect x="482" y="569" width="7" height="11" fill="#7f9fcc" shape-rendering="crispEdges"/>
<rect x="493" y="573" width="1" height="1" fill="#dedede" shape-rendering="crispEdges"/>
<rect x="493" y="581" width="1" height="5" fill="#dedede" shape-rendering="crispEdges"/>
<rect x="490.5" y="574.5" width="6" height="6" fill="none" stroke="#dedede" stroke-width="1" shape-rendering="crispEdges"/>
<rect x="502" y="571" width="1" height="3" fill="#dedede" shape-rendering="crispEdges"/>
<rect x="502" y="574" width="1" height="3" fill="#dedede" shape-rendering="crispEdges"/>
<rect x="499" y="573" width="7" height="2" fill="#dedede" shape-rendering="crispEdges"/>
<rect x="511" y="571" width="1" height="2" fill="#7f9fcc" shape-rendering="crispEdges"/>
<rect x="511" y="573" width="1" height="4" fill="#7f9fcc" shape-rendering="crispEdges"/>
<rect x="508" y="573" width="7" height="1" fill="#7f9fcc" shape-rendering="crispEdges"/>
<rect x="520" y="561" width="1" height="2" fill="#dedede" shape-rendering="crispEdges"/>
<rect x="517.5" y="563.5" width="6" height="11" fill="none" stroke="#dedede" stroke-width="1" shape-rendering="crispEdges"/>
<rect x="528" y="567" width="1" height="1" fill="#7f9fcc" shape-rendering="crispEdges"/>
<rect x="525" y="561" width="7" height="6" fill="#7f9fcc" shape-rendering="crispEdges"/>
<rect x="537" y="555" width="1" height="4" fill="#dedede" shape-rendering="crispEdges"/>
<rect x="534.5" y="559.5" width="6" height="8" fill="none" stroke="#dedede" stroke-width="1" shape-rendering="crispEdges"/>
<rect x="543.5" y="548.5" width="6" height="9" fill="none" stroke="#dedede" stroke-width="1" shape-rendering="crispEdges"/>
<rect x="555" y="541" width="1" height="5" fill="#dedede" shape-rendering="crispEdges"/>
<rect x="552.5" y="546.5" width="6" height="2" fill="none" stroke="#dedede" stroke-width="1" shape-rendering="crispEdges"/>
<rect x="563" y="542" width="1" height="4" fill="#dedede" shape-rendering="crispEdges"/>
<rect x="563" y="546" width="1" height="2" fill="#dedede" shape-rendering="crispEdges"/>
<rect x="560" y="545" width="7" height="2" fill="#dedede" shape-rendering="crispEdges"/>
<rect x="572" y="541" width="1" height="4" fill="#7f9fcc" shape-rendering="crispEdges"/>
<rect x="569" y="545" width="7" height="3" fill="#7f9fcc" shape-rendering="crispEdges"/>
<rect x="581" y="549" width="1" height="1" fill="#dedede" shape-rendering="crispEdges"/>
<rect x="578.5" y="538.5" width="6" height="10" fill="none" stroke="#dedede" stroke-width="1" shape-rendering="crispEdges"/>
<rect x="590" y="527" width="1" height="4" fill="#dedede" shape-rendering="crispEdges"/>
<rect x="590" y="539" width="1" height="1" fill="#dedede" shape-rendering="crispEdges"/>
<rect x="587.5" y="531.5" width="6" height="7" fill="none" stroke="#dedede" stroke-width="1" shape-rendering="crispEdges"/>
<rect x="598" y="533" width="1" height="2" fill="#7f9fcc" shape-rendering="crispEdges"/>
<rect x="595" y="531" width="7" height="2" fill="#7f9fcc" shape-rendering="crispEdges"/>
<rect x="607" y="528" width="1" height="2" fill="#dedede" shape-rendering="crispEdges"/>
<rect x="607" y="534" width="1" height="4" fill="#dedede" shape-rendering="crispEdges"/>
<rect x="604.5" y="530.5" width="6" height="3" fill="none" stroke="#dedede" stroke-width="1" shape-rendering="crispEdges"/>
<rect x="616" y="518" width="1" height="9" fill="#dedede" shape-rendering="crispEdges"/>
<rect x="613.5" y="527.5" width="6" height="3" fill="none" stroke="#dedede" stroke-width="1" shape-rendering="crispEdges"/>
<rect x="625" y="525" width="1" height="1" fill="#7f9fcc" shape-rendering="crispEdges"/>
<rect x="622" y="526" width="7" height="16" fill="#7f9fcc" shape-rendering="crispEdges"/>
<rect x="634" y="538" width="1" height="2" fill="#dedede" shape-rendering="crispEdges"/>
<rect x="634" y="543" width="1" height="2" fill="#dedede" shape-rendering="crispEdges"/>
<rect x="631.5" y="540.5" width="6" height="2" fill="none" stroke="#dedede" stroke-width="1" shape-rendering="crispEdges"/>
<rect x="642" y="535" width="1" height="5" fill="#dedede" shape-rendering="crispEdges"/>
<rect x="642" y="540" width="1" height="1" fill="#dedede" shape-rendering="crispEdges"/>
<rect x="639" y="539" width="7" height="2" fill="#dedede" shape-rendering="crispEdges"/>
<rect x="651" y="528" width="1" height="5" fill="#dedede" shape-rendering="crispEdges"/>
<rect x="648.5" y="533.5" width="6" height="6" fill="none" stroke="#dedede" stroke-width="1" shape-rendering="crispEdges"/>
<rect x="660" y="528" width="1" height="5" fill="#7f9fcc" shape-rendering="crispEdges"/>
<rect x="660" y="543" width="1" height="2" fill="#7f9fcc" shape-rendering="crispEdges"/>
<rect x="657" y="533" width="7" height="10" fill="#7f9fcc" shape-rendering="crispEdges"/>
<rect x="669" y="543" width="1" height="5" fill="#7f9fcc" shape-rendering="crispEdges"/>
<rect x="666" y="542" width="7" height="2" fill="#7f9fcc" shape-rendering="crispEdges"/>
<rect x="677" y="534" width="1" height="9" fill="#7f9fcc" shape-rendering="crispEdges"/>
<rect x="677" y="543" width="1" height="1" fill="#7f9fcc" shape-rendering="crispEdges"/>
<rect x="674" y="543" width="7" height="1" fill="#7f9fcc" shape-rendering="crispEdges"/>
<rect x="686" y="543" width="1" height="1" fill="#7f9fcc" shape-rendering="crispEdges"/>
<rect x="686" y="550" width="1" height="2" fill="#7f9fcc" shape-rendering="crispEdges"/>
<rect x="683" y="544" width="7" height="6" fill="#7f9fcc" shape-rendering="crispEdges"/>
<rect x="695" y="543" width="1" height="2" fill="#dedede" shape-rendering="crispEdges"/>
<rect x="695" y="550" width="1" height="4" fill="#dedede" shape-rendering="crispEdges"/>
<rect x="692.5" y="545.5" width="6" height="4" fill="none" stroke="#dedede" stroke-width="1" shape-rendering="crispEdges"/>
<rect x="704" y="544" width="1" height="2" fill="#7f9fcc" shape-rendering="crispEdges"/>
<rect x="704" y="549" width="1" height="2" fill="#7f9fcc" shape-rendering="crispEdges"/>
<rect x="701" y="546" width="7" height="3" fill="#7f9fcc" shape-rendering="crispEdges"/>
<rect x="712" y="544" width="1" height="3" fill="#dedede" shape-rendering="crispEdges"/>
<rect x="709.5" y="547.5" width="6" height="1" fill="none" stroke="#dedede" stroke-width="1" shape-rendering="crispEdges"/>
<rect x="721" y="539" width="1" height="6" fill="#7f9fcc" shape-rendering="crispEdges"/>
<rect x="721" y="549" width="1" height="2" fill="#7f9fcc" shape-rendering="crispEdges"/>
<rect x="718" y="545" width="7" height="4" fill="#7f9fcc" shape-rendering="crispEdges"/>
<rect x="730" y="544" width="1" height="3" fill="#dedede" shape-rendering="crispEdges"/>
<rect x="730" y="550" width="1" height="3" fill="#dedede" shape-rendering="crispEdges"/>
<rect x="727.5" y="547.5" width="6" height="2" fill="none" stroke="#dedede" stroke-width="1" shape-rendering="crispEdges"/>
<rect x="739" y="536" width="1" height="1" fill="#dedede" shape-rendering="crispEdges"/>
<rect x="739" y="547" width="1" height="4" fill="#dedede" shape-rendering="crispEdges"/>
<rect x="736.5" y="537.5" width="6" height="9" fill="none" stroke="#dedede" stroke-width="1" shape-rendering="crispEdges"/>
<rect x="748" y="518" width="1" height="3" fill="#dedede" shape-rendering="crispEdges"/>
<rect x="745.5" y="521.5" width="6" height="15" fill="none" stroke="#dedede" stroke-width="1" shape-rendering="crispEdges"/>
<rect x="756" y="516" width="1" height="5" fill="#dedede" shape-rendering="crispEdges"/>
<rect x="756" y="524" width="1" height="7" fill="#dedede" shape-rendering="crispEdges"/>
<rect x="753.5" y="521.5" width="6" height="2" fill="none" stroke="#dedede" stroke-width="1" shape-rendering="crispEdges"/>
<rect x="765" y="490" width="1" height="5" fill="#dedede" shape-rendering="crispEdges"/>
<rect x="765" y="521" width="1" height="4" fill="#dedede" shape-rendering="crispEdges"/>
<rect x="762.5" y="495.5" width="6" height="25" fill="none" stroke="#dedede" stroke-width="1" shape-rendering="crispEdges"/>
<rect x="774" y="478" width="1" height="12" fill="#dedede" shape-rendering="crispEdges"/>
<rect x="771.5" y="490.5" width="6" height="4" fill="none" stroke="#dedede" stroke-width="1" shape-rendering="crispEdges"/>
<rect x="783" y="478" width="1" height="17" fill="#7f9fcc" shape-rendering="crispEdges"/>
<rect x="783" y="499" width="1" height="4" fill="#7f9fcc" shape-rendering="crispEdges"/>
<rect x="780.5" y="495.5" width="6" height="3" fill="none" stroke="#7f9fcc" stroke-width="1" shape-rendering="crispEdges"/>
<rect x="791" y="483" width="1" height="5" fill="#dedede" shape-rendering="crispEdges"/>
<rect x="791" y="496" width="1" height="5" fill="#dedede" shape-rendering="crispEdges"/>
<rect x="788.5" y="488.5" width="6" height="7" fill="none" stroke="#dedede" stroke-width="1" shape-rendering="crispEdges"/>
<rect x="800" y="471" width="1" height="12" fill="#dedede" shape-rendering="crispEdges"/>
<rect x="800" y="489" width="1" height="6" fill="#dedede" shape-rendering="crispEdges"/>
<rect x="797.5" y="483.5" width="6" height="5" fill="none" stroke="#dedede" stroke-width="1" shape-rendering="crispEdges"/>
<rect x="809" y="481" width="1" height="2" fill="#7f9fcc" shape-rendering="crispEdges"/>
<rect x="809" y="486" width="1" height="4" fill="#7f9fcc" shape-rendering="crispEdges"/>
<rect x="806" y="483" width="7" height="3" fill="#7f9fcc" shape-rendering="crispEdges"/>
<rect x="818" y="473" width="1" height="3" fill="#dedede" shape-rendering="crispEdges"/>
<rect x="818" y="487" width="1" height="7" fill="#dedede" shape-rendering="crispEdges"/>
<rect x="815.5" y="476.5" width="6" height="10" fill="none" stroke="#dedede" stroke-width="1" shape-rendering="crispEdges"/>
<rect x="826" y="445" width="1" height="6" fill="#dedede" shape-rendering="crispEdges"/>
<rect x="826" y="477" width="1" height="1" fill="#dedede" shape-rendering="crispEdges"/>
<rect x="823.5" y="451.5" width="6" height="25" fill="none" stroke="#dedede" stroke-width="1" shape-rendering="crispEdges"/>
<rect x="835" y="434" width="1" height="11" fill="#dedede" shape-rendering="crispEdges"/>
<rect x="835" y="452" width="1" height="6" fill="#dedede" shape-rendering="crispEdges"/>
<rect x="832.5" y="445.5" width="6" height="6" fill="none" stroke="#dedede" stroke-width="1" shape-rendering="crispEdges"/>
<rect x="844" y="437" width="1" height="1" fill="#dedede" shape-rendering="crispEdges"/>
<rect x="844" y="446" width="1" height="8" fill="#dedede" shape-rendering="crispEdges"/>
<rect x="841.5" y="438.5" width="6" height="7" fill="none" stroke="#dedede" stroke-width="1" shape-rendering="crispEdges"/>
<rect x="853" y="425" width="1" height="7" fill="#7f9fcc" shape-rendering="crispEdges"/>
<rect x="853" y="441" width="1" height="1" fill="#7f9fcc" shape-rendering="crispEdges"/>
<rect x="850" y="432" width="7" height="9" fill="#7f9fcc" shape-rendering="crispEdges"/>
<rect x="861" y="424" width="1" height="17" fill="#7f9fcc" shape-rendering="crispEdges"/>
<rect x="861" y="447" width="1" height="2" fill="#7f9fcc" shape-rendering="crispEdges"/>
<rect x="858" y="441" width="7" height="6" fill="#7f9fcc" shape-rendering="crispEdges"/>
<rect x="870" y="439" width="1" height="8" fill="#7f9fcc" shape-rendering="crispEdges"/>
<rect x="870" y="455" width="1" height="2" fill="#7f9fcc" shape-rendering="crispEdges"/>
<rect x="867" y="447" width="7" height="8" fill="#7f9fcc" shape-rendering="crispEdges"/>
<rect x="879" y="450" width="1" height="7" fill="#dedede" shape-rendering="crispEdges"/>
<rect x="876.5" y="442.5" width="6" height="7" fill="none" stroke="#dedede" stroke-width="1" shape-rendering="crispEdges"/>
<rect x="888" y="434" width="1" height="8" fill="#7f9fcc" shape-rendering="crispEdges"/>
<rect x="888" y="451" width="1" height="5" fill="#7f9fcc" shape-rendering="crispEdges"/>
<rect x="885" y="442" width="7" height="9" fill="#7f9fcc" shape-rendering="crispEdges"/>
<rect x="897" y="442" width="1" height="6" fill="#dedede" shape-rendering="crispEdges"/>
<rect x="897" y="452" width="1" height="16" fill="#dedede" shape-rendering="crispEdges"/>
<rect x="894.5" y="448.5" width="6" height="3" fill="none" stroke="#dedede" stroke-width="1" shape-rendering="crispEdges"/>
<rect x="905" y="442" width="1" height="6" fill="#7f9fcc" shape-rendering="crispEdges"/>
<rect x="905" y="455" width="1" height="5" fill="#7f9fcc" shape-rendering="crispEdges"/>
<rect x="902" y="448" width="7" height="7" fill="#7f9fcc" shape-rendering="crispEdges"/>
<rect x="914" y="451" width="1" height="4" fill="#dedede" shape-rendering="crispEdges"/>
<rect x="914" y="455" width="1" height="4" fill="#dedede" shape-rendering="crispEdges"/>
<rect x="911" y="454" width="7" height="2" fill="#dedede" shape-rendering="crispEdges"/>
<rect x="923" y="441" width="1" height="7" fill="#dedede" shape-rendering="crispEdges"/>
<rect x="923" y="454" width="1" height="5" fill="#dedede" shape-rendering="crispEdges"/>
<rect x="920.5" y="448.5" width="6" height="5" fill="none" stroke="#dedede" stroke-width="1" shape-rendering="crispEdges"/>
<rect x="932" y="443" width="1" height="1" fill="#dedede" shape-rendering="crispEdges"/>
<rect x="932" y="449" width="1" height="9" fill="#dedede" shape-rendering="crispEdges"/>
<rect x="929.5" y="444.5" width="6" height="4" fill="none" stroke="#dedede" stroke-width="1" shape-rendering="crispEdges"/>
<rect x="940" y="443" width="1" height="1" fill="#7f9fcc" shape-rendering="crispEdges"/>
<rect x="937" y="444" width="7" height="24" fill="#7f9fcc" shape-rendering="crispEdges"/>
<rect x="949" y="462" width="1" height="2" fill="#dedede" shape-rendering="crispEdges"/>
<rect x="949" y="469" width="1" height="4" fill="#dedede" shape-rendering="crispEdges"/>
<rect x="946.5" y="464.5" width="6" height="4" fill="none" stroke="#dedede" stroke-width="1" shape-rendering="crispEdges"/>
<rect x="958" y="459" width="1" height="5" fill="#7f9fcc" shape-rendering="crispEdges"/>
<rect x="958" y="467" width="1" height="3" fill="#7f9fcc" shape-rendering="crispEdges"/>
<rect x="955" y="464" width="7" height="3" fill="#7f9fcc" shape-rendering="crispEdges"/>
<rect x="967" y="465" width="1" height="2" fill="#dedede" shape-rendering="crispEdges"/>
<rect x="967" y="467" width="1" height="3" fill="#dedede" shape-rendering="crispEdges"/>
<rect x="964" y="466" width="7" height="2" fill="#dedede" shape-rendering="crispEdges"/>
<rect x="975" y="457" width="1" height="8" fill="#7f9fcc" shape-rendering="crispEdges"/>
<rect x="975" y="468" width="1" height="3" fill="#7f9fcc" shape-rendering="crispEdges"/>
<rect x="972" y="465" width="7" height="3" fill="#7f9fcc" shape-rendering="crispEdges"/>
<rect x="984" y="456" width="1" height="5" fill="#dedede" shape-rendering="crispEdges"/>
<rect x="981.5" y="461.5" width="6" height="7" fill="none" stroke="#dedede" stroke-width="1" shape-rendering="crispEdges"/>
<rect x="993" y="458" width="1" height="3" fill="#dedede" shape-rendering="crispEdges"/>
<rect x="990" y="460" width="7" height="2" fill="#dedede" shape-rendering="crispEdges"/>
<rect x="1002" y="443" width="1" height="2" fill="#dedede" shape-rendering="crispEdges"/>
<rect x="999.5" y="445.5" width="6" height="15" fill="none" stroke="#dedede" stroke-width="1" shape-rendering="crispEdges"/>
<rect x="1008.5" y="427.5" width="6" height="18" fill="none" stroke="#dedede" stroke-width="1" shape-rendering="crispEdges"/>
<rect x="1019" y="400" width="1" height="23" fill="#dedede" shape-rendering="crispEdges"/>
<rect x="1019" y="423" width="1" height="9" fill="#dedede" shape-rendering="crispEdges"/>
<rect x="1016" y="422" width="7" height="2" fill="#dedede" shape-rendering="crispEdges"/>
<rect x="1028" y="425" width="1" height="8" fill="#7f9fcc" shape-rendering="crispEdges"/>
<rect x="1025" y="423" width="7" height="2" fill="#7f9fcc" shape-rendering="crispEdges"/>
<rect x="1037" y="416" width="1" height="2" fill="#dedede" shape-rendering="crispEdges"/>
<rect x="1037" y="425" width="1" height="4" fill="#dedede" shape-rendering="crispEdges"/>
<rect x="1034.5" y="418.5" width="6" height="6" fill="none" stroke="#dedede" stroke-width="1" shape-rendering="crispEdges"/>
<rect x="1046" y="415" width="1" height="7" fill="#dedede" shape-rendering="crispEdges"/>
<rect x="1043.5" y="410.5" width="6" height="4" fill="none" stroke="#dedede" stroke-width="1" shape-rendering="crispEdges"/>
<rect x="1054" y="409" width="1" height="1" fill="#7f9fcc" shape-rendering="crispEdges"/>
<rect x="1054" y="419" width="1" height="9" fill="#7f9fcc" shape-rendering="crispEdges"/>
<rect x="1051" y="410" width="7" height="9" fill="#7f9fcc" shape-rendering="crispEdges"/>
<rect x="1063" y="420" width="1" height="2" fill="#dedede" shape-rendering="crispEdges"/>
<rect x="1060.5" y="412.5" width="6" height="7" fill="none" stroke="#dedede" stroke-width="1" shape-rendering="crispEdges"/>
<rect x="1072" y="383" width="1" height="3" fill="#dedede" shape-rendering="crispEdges"/>
<rect x="1072" y="413" width="1" height="2" fill="#dedede" shape-rendering="crispEdges"/>
<rect x="1069.5" y="386.5" width="6" height="26" fill="none" stroke="#dedede" stroke-width="1" shape-rendering="crispEdges"/>
<rect x="1081" y="365" width="1" height="14" fill="#7f9fcc" shape-rendering="crispEdges"/>
<rect x="1081" y="412" width="1" height="9" fill="#7f9fcc" shape-rendering="crispEdges"/>
<rect x="1078" y="379" width="7" height="33" fill="#7f9fcc" shape-rendering="crispEdges"/>
<rect x="1089" y="364" width="1" height="8" fill="#dedede" shape-rendering="crispEdges"/>
<rect x="1089" y="410" width="1" height="4" fill="#dedede" shape-rendering="crispEdges"/>
<rect x="1086.5" y="372.5" width="6" height="37" fill="none" stroke="#dedede" stroke-width="1" shape-rendering="crispEdges"/>
<rect x="1098" y="359" width="1" height="4" fill="#7f9fcc" shape-rendering="crispEdges"/>
<rect x="1098" y="437" width="1" height="10" fill="#7f9fcc" shape-rendering="crispEdges"/>
<rect x="1095" y="363" width="7" height="74" fill="#7f9fcc" shape-rendering="crispEdges"/>
<rect x="1107" y="417" width="1" height="11" fill="#7f9fcc" shape-rendering="crispEdges"/>
<rect x="1107" y="451" width="1" height="21" fill="#7f9fcc" shape-rendering="crispEdges"/>
<rect x="1104" y="428" width="7" height="23" fill="#7f9fcc" shape-rendering="crispEdges"/>
<rect x="1116" y="386" width="1" height="11" fill="#dedede" shape-rendering="crispEdges"/>
<rect x="1116" y="447" width="1" height="10" fill="#dedede" shape-rendering="crispEdges"/>
<rect x="1113.5" y="397.5" width="6" height="49" fill="none" stroke="#dedede" stroke-width="1" shape-rendering="crispEdges"/>
<rect x="1125" y="390" width="1" height="7" fill="#7f9fcc" shape-rendering="crispEdges"/>
<rect x="1125" y="399" width="1" height="23" fill="#7f9fcc" shape-rendering="crispEdges"/>
<rect x="1122" y="397" width="7" height="2" fill="#7f9fcc" shape-rendering="crispEdges"/>
<rect x="1133" y="362" width="1" height="3" fill="#dedede" shape-rendering="crispEdges"/>
<rect x="1130.5" y="365.5" width="6" height="42" fill="none" stroke="#dedede" stroke-width="1" shape-rendering="crispEdges"/>
<rect x="1142" y="340" width="1" height="27" fill="#7f9fcc" shape-rendering="crispEdges"/>
<rect x="1142" y="369" width="1" height="4" fill="#7f9fcc" shape-rendering="crispEdges"/>
<rect x="1139" y="367" width="7" height="2" fill="#7f9fcc" shape-rendering="crispEdges"/>
<rect x="1151" y="343" width="1" height="5" fill="#dedede" shape-rendering="crispEdges"/>
<rect x="1151" y="365" width="1" height="13" fill="#dedede" shape-rendering="crispEdges"/>
<rect x="1148.5" y="348.5" width="6" height="16" fill="none" stroke="#dedede" stroke-width="1" shape-rendering="crispEdges"/>
<rect x="1160" y="349" width="1" height="1" fill="#7f9fcc" shape-rendering="crispEdges"/>
<rect x="1160" y="361" width="1" height="13" fill="#7f9fcc" shape-rendering="crispEdges"/>
<rect x="1157" y="350" width="7" height="11" fill="#7f9fcc" shape-rendering="crispEdges"/>
<rect x="1168" y="352" width="1" height="8" fill="#dedede" shape-rendering="crispEdges"/>
<rect x="1168" y="362" width="1" height="7" fill="#dedede" shape-rendering="crispEdges"/>
<rect x="1165.5" y="360.5" width="6" height="1" fill="none" stroke="#dedede" stroke-width="1" shape-rendering="crispEdges"/>
<rect x="1177" y="338" width="1" height="4" fill="#dedede" shape-rendering="crispEdges"/>
<rect x="1177" y="360" width="1" height="5" fill="#dedede" shape-rendering="crispEdges"/>
<rect x="1174.5" y="342.5" width="6" height="17" fill="none" stroke="#dedede" stroke-width="1" shape-rendering="crispEdges"/>
<rect x="1186" y="332" width="1" height="9" fill="#7f9fcc" shape-rendering="crispEdges"/>
<rect x="1186" y="345" width="1" height="6" fill="#7f9fcc" shape-rendering="crispEdges"/>
<rect x="1183" y="341" width="7" height="4" fill="#7f9fcc" shape-rendering="crispEdges"/>
<rect x="1195" y="342" width="1" height="3" fill="#7f9fcc" shape-rendering="crispEdges"/>
<rect x="1195" y="349" width="1" height="14" fill="#7f9fcc" shape-rendering="crispEdges"/>
<rect x="1192" y="345" width="7" height="4" fill="#7f9fcc" shape-rendering="crispEdges"/>
<rect x="1203" y="340" width="1" height="4" fill="#7f9fcc" shape-rendering="crispEdges"/>
<rect x="1203" y="367" width="1" height="7" fill="#7f9fcc" shape-rendering="crispEdges"/>
<rect x="1200" y="344" width="7" height="23" fill="#7f9fcc" shape-rendering="crispEdges"/>
<rect x="1212" y="341" width="1" height="6" fill="#dedede" shape-rendering="crispEdges"/>
<rect x="1212" y="369" width="1" height="2" fill="#dedede" shape-rendering="crispEdges"/>
<rect x="1209.5" y="347.5" width="6" height="21" fill="none" stroke="#dedede" stroke-width="1" shape-rendering="crispEdges"/>
<rect x="1221" y="345" width="1" height="1" fill="#7f9fcc" shape-rendering="crispEdges"/>
<rect x="1221" y="349" width="1" height="7" fill="#7f9fcc" shape-rendering="crispEdges"/>
<rect x="1218" y="346" width="7" height="3" fill="#7f9fcc" shape-rendering="crispEdges"/>
<path d="M90.5 536.45l2.1 2l-2.1 2l-2.1 -2z" fill="#006400"/>
<path d="M90.5 526.43l2.2 2l-2.2 2l-2.200 -2z" fill="#ff0000"/>
<path d="M99.27 529.77l2.1 2l-2.1 2l-2.1 -2z" fill="#006400"/>
<path d="M99.27 520.59l2.2 2l-2.2 2l-2.200 -2z" fill="#ff0000"/>
<path d="M108.03 522.26l2.1 2l-2.1 2l-2.1 -2z" fill="#006400"/>
<path d="M108.03 513.41l2.2 2l-2.2 2l-2.200 -2z" fill="#ff0000"/>
<path d="M116.8 528.43l2.1 2l-2.1 2l-2.1 -2z" fill="#006400"/>
<path d="M116.8 519.42l2.2 2l-2.2 2l-2.200 -2z" fill="#ff0000"/>
<path d="M125.57 518.42l2.1 2l-2.1 2l-2.1 -2z" fill="#006400"/>
<path d="M125.57 508.4l2.2 2l-2.2 2l-2.200 -2z" fill="#ff0000"/>
<path d="M134.33 529.44l2.1 2l-2.1 2l-2.1 -2z" fill="#006400"/>
<path d="M134.33 519.42l2.2 2l-2.2 2l-2.200 -2z" fill="#ff0000"/>
<path d="M143.1 538.45l2.1 2l-2.1 2l-2.1 -2z" fill="#006400"/>
<path d="M143.1 527.43l2.2 2l-2.2 2l-2.200 -2z" fill="#ff0000"/>
<path d="M151.87 519.42l2.1 2l-2.1 2l-2.1 -2z" fill="#006400"/>
<path d="M151.87 506.56l2.2 2l-2.2 2l-2.200 -2z" fill="#ff0000"/>
<path d="M160.64 531.44l2.1 2l-2.1 2l-2.1 -2z" fill="#006400"/>
<path d="M160.64 519.42l2.2 2l-2.2 2l-2.200 -2z" fill="#ff0000"/>
<path d="M169.4 535.45l2.1 2l-2.1 2l-2.1 -2z" fill="#006400"/>
<path d="M169.4 522.42l2.2 2l-2.2 2l-2.200 -2z" fill="#ff0000"/>
<path d="M178.17 533.44l2.1 2l-2.1 2l-2.1 -2z" fill="#006400"/>
<path d="M178.17 521.42l2.2 2l-2.2 2l-2.200 -2z" fill="#ff0000"/>
<path d="M186.94 537.28l2.1 2l-2.1 2l-2.1 -2z" fill="#006400"/>
<path d="M186.94 528.43l2.2 2l-2.2 2l-2.200 -2z" fill="#ff0000"/>
<path d="M195.7 518.42l2.1 2l-2.1 2l-2.1 -2z" fill="#006400"/>
<path d="M195.7 507.4l2.2 2l-2.2 2l-2.200 -2z" fill="#ff0000"/>
<path d="M204.47 523.43l2.1 2l-2.1 2l-2.1 -2z" fill="#006400"/>
<path d="M204.47 513.41l2.2 2l-2.2 2l-2.200 -2z" fill="#ff0000"/>
<path d="M213.24 529.44l2.1 2l-2.1 2l-2.1 -2z" fill="#006400"/>
<path d="M213.24 518.42l2.2 2l-2.2 2l-2.200 -2z" fill="#ff0000"/>
<path d="M222 522.26l2.1 2l-2.1 2l-2.1 -2z" fill="#006400"/>
<path d="M222 510.57l2.2 2l-2.2 2l-2.200 -2z" fill="#ff0000"/>
<path d="M230.77 527.27l2.1 2l-2.1 2l-2.1 -2z" fill="#006400"/>
<path d="M230.77 517.42l2.2 2l-2.2 2l-2.200 -2z" fill="#ff0000"/>
<path d="M239.54 534.44l2.1 2l-2.1 2l-2.1 -2z" fill="#006400"/>
<path d="M239.54 525.6l2.2 2l-2.2 2l-2.200 -2z" fill="#ff0000"/>
<path d="M248.31 537.28l2.1 2l-2.1 2l-2.1 -2z" fill="#006400"/>
<path d="M248.31 528.43l2.2 2l-2.2 2l-2.200 -2z" fill="#ff0000"/>
<path d="M257.07 533.61l2.1 2l-2.1 2l-2.1 -2z" fill="#006400"/>
<path d="M257.07 525.43l2.2 2l-2.2 2l-2.200 -2z" fill="#ff0000"/>
<path d="M265.84 548.43l2.1 2l-2.1 2l-2.1 -2z" fill="#006400"/>
<path d="M265.84 540.59l2.2 2l-2.2 2l-2.200 -2z" fill="#ff0000"/>
<path d="M274.61 542.26l2.1 2l-2.1 2l-2.1 -2z" fill="#006400"/>
<path d="M274.61 533.41l2.2 2l-2.2 2l-2.200 -2z" fill="#ff0000"/>
<path d="M283.37 545.43l2.1 2l-2.1 2l-2.1 -2z" fill="#006400"/>
<path d="M283.37 537.42l2.2 2l-2.2 2l-2.200 -2z" fill="#ff0000"/>
<path d="M292.14 541.42l2.1 2l-2.1 2l-2.1 -2z" fill="#006400"/>
<path d="M292.14 533.41l2.2 2l-2.2 2l-2.200 -2z" fill="#ff0000"/>
<path d="M300.91 552.44l2.1 2l-2.1 2l-2.1 -2z" fill="#006400"/>
<path d="M300.91 545.6l2.2 2l-2.2 2l-2.200 -2z" fill="#ff0000"/>
<path d="M309.67 557.45l2.1 2l-2.1 2l-2.1 -2z" fill="#006400"/>
<path d="M309.67 550.44l2.2 2l-2.2 2l-2.200 -2z" fill="#ff0000"/>
<path d="M318.44 565.3l2.1 2l-2.1 2l-2.1 -2z" fill="#006400"/>
<path d="M318.44 557.45l2.2 2l-2.2 2l-2.200 -2z" fill="#ff0000"/>
<path d="M327.21 563.46l2.1 2l-2.1 2l-2.1 -2z" fill="#006400"/>
<path d="M327.21 554.44l2.2 2l-2.2 2l-2.200 -2z" fill="#ff0000"/>
<path d="M335.98 569.47l2.1 2l-2.1 2l-2.1 -2z" fill="#006400"/>
<path d="M335.98 560.45l2.2 2l-2.2 2l-2.200 -2z" fill="#ff0000"/>
<path d="M344.74 575.48l2.1 2l-2.1 2l-2.1 -2z" fill="#006400"/>
<path d="M344.74 565.46l2.2 2l-2.2 2l-2.200 -2z" fill="#ff0000"/>
<path d="M353.51 578.48l2.1 2l-2.1 2l-2.1 -2z" fill="#006400"/>
<path d="M353.51 569.47l2.2 2l-2.2 2l-2.200 -2z" fill="#ff0000"/>
<path d="M362.28 582.49l2.1 2l-2.1 2l-2.1 -2z" fill="#006400"/>
<path d="M362.28 573.48l2.2 2l-2.2 2l-2.200 -2z" fill="#ff0000"/>
<path d="M371.04 582.49l2.1 2l-2.1 2l-2.1 -2z" fill="#006400"/>
<path d="M371.04 574.48l2.2 2l-2.2 2l-2.200 -2z" fill="#ff0000"/>
<path d="M379.81 598.52l2.1 2l-2.1 2l-2.1 -2z" fill="#006400"/>
<path d="M379.81 588.5l2.2 2l-2.2 2l-2.200 -2z" fill="#ff0000"/>
<path d="M388.58 583.49l2.1 2l-2.1 2l-2.1 -2z" fill="#006400"/>
<path d="M388.58 573.48l2.2 2l-2.2 2l-2.200 -2z" fill="#ff0000"/>
<path d="M397.34 586.5l2.1 2l-2.1 2l-2.1 -2z" fill="#006400"/>
<path d="M397.34 576.48l2.2 2l-2.2 2l-2.200 -2z" fill="#ff0000"/>
<path d="M406.11 590.5l2.1 2l-2.1 2l-2.1 -2z" fill="#006400"/>
<path d="M406.11 580.49l2.2 2l-2.2 2l-2.200 -2z" fill="#ff0000"/>
<path d="M414.88 589.5l2.1 2l-2.1 2l-2.1 -2z" fill="#006400"/>
<path d="M414.88 582.49l2.2 2l-2.2 2l-2.200 -2z" fill="#ff0000"/>
<path d="M423.65 585.5l2.1 2l-2.1 2l-2.1 -2z" fill="#006400"/>
<path d="M423.65 578.48l2.2 2l-2.2 2l-2.200 -2z" fill="#ff0000"/>
<path d="M432.41 590.5l2.1 2l-2.1 2l-2.1 -2z" fill="#006400"/>
<path d="M432.41 583.49l2.2 2l-2.2 2l-2.200 -2z" fill="#ff0000"/>
<path d="M441.18 583.49l2.1 2l-2.1 2l-2.1 -2z" fill="#006400"/>
<path d="M441.18 576.48l2.2 2l-2.2 2l-2.200 -2z" fill="#ff0000"/>
<path d="M449.95 576.48l2.1 2l-2.1 2l-2.1 -2z" fill="#006400"/>
<path d="M449.95 567.47l2.2 2l-2.2 2l-2.200 -2z" fill="#ff0000"/>
<path d="M458.71 573.48l2.1 2l-2.1 2l-2.1 -2z" fill="#006400"/>
<path d="M458.71 564.46l2.2 2l-2.2 2l-2.200 -2z" fill="#ff0000"/>
<path d="M467.48 570.47l2.1 2l-2.1 2l-2.1 -2z" fill="#006400"/>
<path d="M467.48 561.46l2.2 2l-2.2 2l-2.200 -2z" fill="#ff0000"/>
<path d="M476.25 573.48l2.1 2l-2.1 2l-2.1 -2z" fill="#006400"/>
<path d="M476.25 563.63l2.2 2l-2.2 2l-2.200 -2z" fill="#ff0000"/>
<path d="M485.01 585.51l2.1 2l-2.1 2l-2.1 -2z" fill="#006400"/>
<path d="M485.01 577.5l2.2 2l-2.2 2l-2.200 -2z" fill="#ff0000"/>
<path d="M493.78 577.5l2.1 2l-2.1 2l-2.1 -2z" fill="#006400"/>
<path d="M493.78 568.48l2.2 2l-2.2 2l-2.200 -2z" fill="#ff0000"/>
<path d="M502.55 575.5l2.1 2l-2.1 2l-2.1 -2z" fill="#006400"/>
<path d="M502.55 567.48l2.2 2l-2.2 2l-2.200 -2z" fill="#ff0000"/>
<path d="M511.32 576.5l2.1 2l-2.1 2l-2.1 -2z" fill="#006400"/>
<path d="M511.32 568.48l2.2 2l-2.2 2l-2.200 -2z" fill="#ff0000"/>
<path d="M520.08 561.47l2.1 2l-2.1 2l-2.1 -2z" fill="#006400"/>
<path d="M520.08 554.46l2.2 2l-2.2 2l-2.200 -2z" fill="#ff0000"/>
<path d="M528.85 568.48l2.1 2l-2.1 2l-2.1 -2z" fill="#006400"/>
<path d="M528.85 561.47l2.2 2l-2.2 2l-2.200 -2z" fill="#ff0000"/>
<path d="M537.62 559.47l2.1 2l-2.1 2l-2.1 -2z" fill="#006400"/>
<path d="M537.62 551.46l2.2 2l-2.2 2l-2.200 -2z" fill="#ff0000"/>
<path d="M546.38 546.45l2.1 2l-2.1 2l-2.1 -2z" fill="#006400"/>
<path d="M546.38 538.43l2.2 2l-2.2 2l-2.200 -2z" fill="#ff0000"/>
<path d="M555.15 546.45l2.1 2l-2.1 2l-2.1 -2z" fill="#006400"/>
<path d="M555.15 537.43l2.2 2l-2.2 2l-2.200 -2z" fill="#ff0000"/>
<path d="M563.92 546.45l2.1 2l-2.1 2l-2.1 -2z" fill="#006400"/>
<path d="M563.92 538.43l2.2 2l-2.2 2l-2.200 -2z" fill="#ff0000"/>
<path d="M572.68 550.45l2.1 2l-2.1 2l-2.1 -2z" fill="#006400"/>
<path d="M572.68 543.44l2.2 2l-2.2 2l-2.200 -2z" fill="#ff0000"/>
<path d="M581.45 537.43l2.1 2l-2.1 2l-2.1 -2z" fill="#006400"/>
<path d="M581.45 530.42l2.2 2l-2.2 2l-2.200 -2z" fill="#ff0000"/>
<path d="M590.22 530.42l2.1 2l-2.1 2l-2.1 -2z" fill="#006400"/>
<path d="M590.22 522.41l2.2 2l-2.2 2l-2.200 -2z" fill="#ff0000"/>
<path d="M598.99 534.43l2.1 2l-2.1 2l-2.1 -2z" fill="#006400"/>
<path d="M598.99 527.42l2.2 2l-2.2 2l-2.200 -2z" fill="#ff0000"/>
<path d="M607.75 532.42l2.1 2l-2.1 2l-2.1 -2z" fill="#006400"/>
<path d="M607.75 524.41l2.2 2l-2.2 2l-2.200 -2z" fill="#ff0000"/>
<path d="M616.52 527.42l2.1 2l-2.1 2l-2.1 -2z" fill="#006400"/>
<path d="M616.52 519.4l2.2 2l-2.2 2l-2.200 -2z" fill="#ff0000"/>
<path d="M625.29 549.45l2.1 2l-2.1 2l-2.1 -2z" fill="#006400"/>
<path d="M625.29 540.44l2.2 2l-2.2 2l-2.200 -2z" fill="#ff0000"/>
<path d="M634.05 544.44l2.1 2l-2.1 2l-2.1 -2z" fill="#006400"/>
<path d="M634.05 535.43l2.2 2l-2.2 2l-2.200 -2z" fill="#ff0000"/>
<path d="M642.82 540.44l2.1 2l-2.1 2l-2.1 -2z" fill="#006400"/>
<path d="M642.82 531.42l2.2 2l-2.2 2l-2.200 -2z" fill="#ff0000"/>
<path d="M651.59 533.43l2.1 2l-2.1 2l-2.1 -2z" fill="#006400"/>
<path d="M651.59 524.41l2.2 2l-2.2 2l-2.200 -2z" fill="#ff0000"/>
<path d="M660.36 547.45l2.1 2l-2.1 2l-2.1 -2z" fill="#006400"/>
<path d="M660.36 539.44l2.2 2l-2.2 2l-2.200 -2z" fill="#ff0000"/>
<path d="M669.12 547.45l2.1 2l-2.1 2l-2.1 -2z" fill="#006400"/>
<path d="M669.12 538.43l2.2 2l-2.2 2l-2.200 -2z" fill="#ff0000"/>
<path d="M677.89 545.45l2.1 2l-2.1 2l-2.1 -2z" fill="#006400"/>
<path d="M677.89 537.43l2.2 2l-2.2 2l-2.200 -2z" fill="#ff0000"/>
<path d="M686.66 554.46l2.1 2l-2.1 2l-2.1 -2z" fill="#006400"/>
<path d="M686.66 546.45l2.2 2l-2.2 2l-2.200 -2z" fill="#ff0000"/>
<path d="M695.42 546.45l2.1 2l-2.1 2l-2.1 -2z" fill="#006400"/>
<path d="M695.42 540.44l2.2 2l-2.2 2l-2.200 -2z" fill="#ff0000"/>
<path d="M704.19 550.71l2.1 2l-2.1 2l-2.1 -2z" fill="#006400"/>
<path d="M704.19 543.2l2.2 2l-2.2 2l-2.200 -2z" fill="#ff0000"/>
<path d="M712.96 546.54l2.1 2l-2.1 2l-2.1 -2z" fill="#006400"/>
<path d="M712.96 539.53l2.2 2l-2.2 2l-2.200 -2z" fill="#ff0000"/>
<path d="M721.72 551.55l2.1 2l-2.1 2l-2.1 -2z" fill="#006400"/>
<path d="M721.72 544.54l2.2 2l-2.2 2l-2.200 -2z" fill="#ff0000"/>
<path d="M730.49 547.37l2.1 2l-2.1 2l-2.1 -2z" fill="#006400"/>
<path d="M730.49 540.53l2.2 2l-2.2 2l-2.200 -2z" fill="#ff0000"/>
<path d="M739.26 536.52l2.1 2l-2.1 2l-2.1 -2z" fill="#006400"/>
<path d="M739.26 528.51l2.2 2l-2.2 2l-2.200 -2z" fill="#ff0000"/>
<path d="M748.02 518.49l2.1 2l-2.1 2l-2.1 -2z" fill="#006400"/>
<path d="M748.02 508.48l2.2 2l-2.2 2l-2.200 -2z" fill="#ff0000"/>
<path d="M756.79 523.5l2.1 2l-2.1 2l-2.1 -2z" fill="#006400"/>
<path d="M756.79 512.48l2.2 2l-2.2 2l-2.200 -2z" fill="#ff0000"/>
<path d="M765.56 494.45l2.1 2l-2.1 2l-2.1 -2z" fill="#006400"/>
<path d="M765.56 478.43l2.2 2l-2.2 2l-2.200 -2z" fill="#ff0000"/>
<path d="M774.33 492.45l2.1 2l-2.1 2l-2.1 -2z" fill="#006400"/>
<path d="M774.33 475.42l2.2 2l-2.2 2l-2.200 -2z" fill="#ff0000"/>
<path d="M783.09 502.47l2.1 2l-2.1 2l-2.1 -2z" fill="#006400"/>
<path d="M783.09 484.44l2.2 2l-2.2 2l-2.200 -2z" fill="#ff0000"/>
<path d="M791.86 494.45l2.1 2l-2.1 2l-2.1 -2z" fill="#006400"/>
<path d="M791.86 476.42l2.2 2l-2.2 2l-2.200 -2z" fill="#ff0000"/>
<path d="M800.63 486.44l2.1 2l-2.1 2l-2.1 -2z" fill="#006400"/>
<path d="M800.63 471.41l2.2 2l-2.2 2l-2.200 -2z" fill="#ff0000"/>
<path d="M809.39 491.45l2.1 2l-2.1 2l-2.1 -2z" fill="#006400"/>
<path d="M809.39 477.42l2.2 2l-2.2 2l-2.200 -2z" fill="#ff0000"/>
<path d="M818.16 479.43l2.1 2l-2.1 2l-2.1 -2z" fill="#006400"/>
<path d="M818.16 466.41l2.2 2l-2.2 2l-2.200 -2z" fill="#ff0000"/>
<path d="M826.93 449.38l2.1 2l-2.1 2l-2.1 -2z" fill="#006400"/>
<path d="M826.93 432.35l2.2 2l-2.2 2l-2.200 -2z" fill="#ff0000"/>
<path d="M835.69 444.37l2.1 2l-2.1 2l-2.1 -2z" fill="#006400"/>
<path d="M835.69 428.34l2.2 2l-2.2 2l-2.200 -2z" fill="#ff0000"/>
<path d="M844.46 444.44l2.1 2l-2.1 2l-2.1 -2z" fill="#006400"/>
<path d="M844.46 426.41l2.2 2l-2.2 2l-2.200 -2z" fill="#ff0000"/>
<path d="M853.23 447.45l2.1 2l-2.1 2l-2.1 -2z" fill="#006400"/>
<path d="M853.23 430.42l2.2 2l-2.2 2l-2.200 -2z" fill="#ff0000"/>
<path d="M862 454.46l2.1 2l-2.1 2l-2.1 -2z" fill="#006400"/>
<path d="M862 439.44l2.2 2l-2.2 2l-2.200 -2z" fill="#ff0000"/>
<path d="M870.76 463.48l2.1 2l-2.1 2l-2.1 -2z" fill="#006400"/>
<path d="M870.76 449.45l2.2 2l-2.2 2l-2.200 -2z" fill="#ff0000"/>
<path d="M879.53 444.44l2.1 2l-2.1 2l-2.1 -2z" fill="#006400"/>
<path d="M879.53 430.42l2.2 2l-2.2 2l-2.200 -2z" fill="#ff0000"/>
<path d="M888.3 456.46l2.1 2l-2.1 2l-2.1 -2z" fill="#006400"/>
<path d="M888.3 442.44l2.2 2l-2.2 2l-2.200 -2z" fill="#ff0000"/>
<path d="M897.06 454.46l2.1 2l-2.1 2l-2.1 -2z" fill="#006400"/>
<path d="M897.06 439.44l2.2 2l-2.2 2l-2.200 -2z" fill="#ff0000"/>
<path d="M905.83 462.47l2.1 2l-2.1 2l-2.1 -2z" fill="#006400"/>
<path d="M905.83 447.45l2.2 2l-2.2 2l-2.200 -2z" fill="#ff0000"/>
<path d="M914.6 460.47l2.1 2l-2.1 2l-2.1 -2z" fill="#006400"/>
<path d="M914.6 446.45l2.2 2l-2.2 2l-2.200 -2z" fill="#ff0000"/>
<path d="M923.36 451.46l2.1 2l-2.1 2l-2.1 -2z" fill="#006400"/>
<path d="M923.36 438.43l2.2 2l-2.2 2l-2.200 -2z" fill="#ff0000"/>
<path d="M932.13 446.45l2.1 2l-2.1 2l-2.1 -2z" fill="#006400"/>
<path d="M932.13 435.43l2.2 2l-2.2 2l-2.200 -2z" fill="#ff0000"/>
<path d="M940.9 479.5l2.1 2l-2.1 2l-2.1 -2z" fill="#006400"/>
<path d="M940.9 466.48l2.2 2l-2.2 2l-2.200 -2z" fill="#ff0000"/>
<path d="M949.67 472.49l2.1 2l-2.1 2l-2.1 -2z" fill="#006400"/>
<path d="M949.67 458.47l2.2 2l-2.2 2l-2.200 -2z" fill="#ff0000"/>
<path d="M958.43 471.49l2.1 2l-2.1 2l-2.1 -2z" fill="#006400"/>
<path d="M958.43 459.47l2.2 2l-2.2 2l-2.200 -2z" fill="#ff0000"/>
<path d="M967.2 469.49l2.1 2l-2.1 2l-2.1 -2z" fill="#006400"/>
<path d="M967.2 458.47l2.2 2l-2.2 2l-2.200 -2z" fill="#ff0000"/>
<path d="M975.97 470.49l2.1 2l-2.1 2l-2.1 -2z" fill="#006400"/>
<path d="M975.97 462.47l2.2 2l-2.2 2l-2.200 -2z" fill="#ff0000"/>
<path d="M984.73 461.47l2.1 2l-2.1 2l-2.1 -2z" fill="#006400"/>
<path d="M984.73 452.46l2.2 2l-2.2 2l-2.200 -2z" fill="#ff0000"/>
<path d="M993.5 460.47l2.1 2l-2.1 2l-2.1 -2z" fill="#006400"/>
<path d="M993.5 453.46l2.2 2l-2.2 2l-2.200 -2z" fill="#ff0000"/>
<path d="M1002.27 443.44l2.1 2l-2.1 2l-2.1 -2z" fill="#006400"/>
<path d="M1002.27 434.43l2.2 2l-2.2 2l-2.200 -2z" fill="#ff0000"/>
<path d="M1011.03 423.41l2.1 2l-2.1 2l-2.1 -2z" fill="#006400"/>
<path d="M1011.03 413.39l2.2 2l-2.2 2l-2.200 -2z" fill="#ff0000"/>
<path d="M1019.8 422.41l2.1 2l-2.1 2l-2.1 -2z" fill="#006400"/>
<path d="M1019.8 408.38l2.2 2l-2.2 2l-2.200 -2z" fill="#ff0000"/>
<path d="M1028.57 432.42l2.1 2l-2.1 2l-2.1 -2z" fill="#006400"/>
<path d="M1028.57 417.4l2.2 2l-2.2 2l-2.200 -2z" fill="#ff0000"/>
<path d="M1037.34 422.41l2.1 2l-2.1 2l-2.1 -2z" fill="#006400"/>
<path d="M1037.34 408.38l2.2 2l-2.2 2l-2.200 -2z" fill="#ff0000"/>
<path d="M1046.1 411.39l2.1 2l-2.1 2l-2.1 -2z" fill="#006400"/>
<path d="M1046.1 398.37l2.2 2l-2.2 2l-2.200 -2z" fill="#ff0000"/>
<path d="M1054.87 424.54l2.1 2l-2.1 2l-2.1 -2z" fill="#006400"/>
<path d="M1054.87 414.52l2.2 2l-2.2 2l-2.200 -2z" fill="#ff0000"/>
<path d="M1063.64 415.53l2.1 2l-2.1 2l-2.1 -2z" fill="#006400"/>
<path d="M1063.64 405.51l2.2 2l-2.2 2l-2.200 -2z" fill="#ff0000"/>
<path d="M1072.4 383.47l2.1 2l-2.1 2l-2.1 -2z" fill="#006400"/>
<path d="M1072.4 369.45l2.2 2l-2.2 2l-2.200 -2z" fill="#ff0000"/>
<path d="M1081.17 424.54l2.1 2l-2.1 2l-2.1 -2z" fill="#006400"/>
<path d="M1081.17 402.5l2.2 2l-2.2 2l-2.200 -2z" fill="#ff0000"/>
<path d="M1089.94 376.46l2.1 2l-2.1 2l-2.1 -2z" fill="#006400"/>
<path d="M1089.94 348.41l2.2 2l-2.2 2l-2.200 -2z" fill="#ff0000"/>
<path d="M1098.7 470.5l2.1 2l-2.1 2l-2.1 -2z" fill="#006400"/>
<path d="M1098.7 428.4l2.2 2l-2.2 2l-2.200 -2z" fill="#ff0000"/>
<path d="M1107.47 483.5l2.1 2l-2.1 2l-2.1 -2z" fill="#006400"/>
<path d="M1107.47 436.4l2.2 2l-2.2 2l-2.200 -2z" fill="#ff0000"/>
<path d="M1116.24 407.4l2.1 2l-2.1 2l-2.1 -2z" fill="#006400"/>
<path d="M1116.24 358.4l2.2 2l-2.2 2l-2.200 -2z" fill="#ff0000"/>
<path d="M1125.01 411.52l2.1 2l-2.1 2l-2.1 -2z" fill="#006400"/>
<path d="M1125.01 365.44l2.2 2l-2.2 2l-2.200 -2z" fill="#ff0000"/>
<path d="M1133.77 373.46l2.1 2l-2.1 2l-2.1 -2z" fill="#006400"/>
<path d="M1133.77 335.39l2.2 2l-2.2 2l-2.200 -2z" fill="#ff0000"/>
<path d="M1142.54 380.47l2.1 2l-2.1 2l-2.1 -2z" fill="#006400"/>
<path d="M1142.54 346.41l2.2 2l-2.2 2l-2.200 -2z" fill="#ff0000"/>
<path d="M1151.31 356.43l2.1 2l-2.1 2l-2.1 -2z" fill="#006400"/>
<path d="M1151.31 329.38l2.2 2l-2.2 2l-2.200 -2z" fill="#ff0000"/>
<path d="M1160.07 375.46l2.1 2l-2.1 2l-2.1 -2z" fill="#006400"/>
<path d="M1160.07 349.42l2.2 2l-2.2 2l-2.200 -2z" fill="#ff0000"/>
<path d="M1168.84 369.45l2.1 2l-2.1 2l-2.1 -2z" fill="#006400"/>
<path d="M1168.84 348.41l2.2 2l-2.2 2l-2.200 -2z" fill="#ff0000"/>
<path d="M1177.61 346.41l2.1 2l-2.1 2l-2.1 -2z" fill="#006400"/>
<path d="M1177.61 326.38l2.2 2l-2.2 2l-2.200 -2z" fill="#ff0000"/>
<path d="M1186.38 350.42l2.1 2l-2.1 2l-2.1 -2z" fill="#006400"/>
<path d="M1186.38 333.39l2.2 2l-2.2 2l-2.200 -2z" fill="#ff0000"/>
<path d="M1195.14 357.43l2.1 2l-2.1 2l-2.1 -2z" fill="#006400"/>
<path d="M1195.14 341.4l2.2 2l-2.2 2l-2.200 -2z" fill="#ff0000"/>
<path d="M1203.91 381.47l2.1 2l-2.1 2l-2.1 -2z" fill="#006400"/>
<path d="M1203.91 362.44l2.2 2l-2.2 2l-2.200 -2z" fill="#ff0000"/>
<path d="M1212.68 351.42l2.1 2l-2.1 2l-2.1 -2z" fill="#006400"/>
<path d="M1212.68 332.39l2.2 2l-2.2 2l-2.200 -2z" fill="#ff0000"/>
<path d="M1221.44 355.43l2.1 2l-2.1 2l-2.1 -2z" fill="#006400"/>
<path d="M1221.44 337.4l2.2 2l-2.2 2l-2.200 -2z" fill="#ff0000"/>
<line x1="90" y1="628.5" x2="92" y2="626.5" stroke="#00a000" stroke-width="0.9"/>
<line x1="98.77" y1="628.5" x2="100.77" y2="626.5" stroke="#00a000" stroke-width="0.9"/>
<line x1="107.53" y1="628.5" x2="109.53" y2="626.5" stroke="#00a000" stroke-width="0.9"/>
<line x1="116.3" y1="628.5" x2="118.3" y2="626.5" stroke="#00a000" stroke-width="0.9"/>
<line x1="125.07" y1="628.5" x2="127.07" y2="626.5" stroke="#00a000" stroke-width="0.9"/>
<line x1="133.83" y1="628.5" x2="135.83" y2="626.5" stroke="#00a000" stroke-width="0.9"/>
<line x1="142.6" y1="628.5" x2="144.6" y2="626.5" stroke="#00a000" stroke-width="0.9"/>
<line x1="151.37" y1="628.5" x2="153.37" y2="626.5" stroke="#00a000" stroke-width="0.9"/>
<line x1="160.14" y1="628.5" x2="162.14" y2="626.5" stroke="#00a000" stroke-width="0.9"/>
<line x1="203.97" y1="628.5" x2="205.97" y2="626.5" stroke="#00a000" stroke-width="0.9"/>
<line x1="221.5" y1="628.5" x2="223.5" y2="626.5" stroke="#00a000" stroke-width="0.9"/>
<line x1="230.27" y1="628.5" x2="232.27" y2="626.5" stroke="#00a000" stroke-width="0.9"/>
<line x1="265.34" y1="628.5" x2="267.34" y2="626.5" stroke="#ff0000" stroke-width="0.9"/>
<line x1="274.11" y1="628.5" x2="276.11" y2="626.5" stroke="#ff0000" stroke-width="0.9"/>
<line x1="282.87" y1="628.5" x2="284.87" y2="626.5" stroke="#ff0000" stroke-width="0.9"/>
<line x1="291.64" y1="628.5" x2="293.64" y2="626.5" stroke="#ff0000" stroke-width="0.9"/>
<line x1="300.41" y1="628.5" x2="302.41" y2="626.5" stroke="#ff0000" stroke-width="0.9"/>
<line x1="309.17" y1="628.5" x2="311.17" y2="626.5" stroke="#ff0000" stroke-width="0.9"/>
<line x1="317.94" y1="628.5" x2="319.94" y2="626.5" stroke="#ff0000" stroke-width="0.9"/>
<line x1="326.71" y1="628.5" x2="328.71" y2="626.5" stroke="#ff0000" stroke-width="0.9"/>
<line x1="335.48" y1="628.5" x2="337.48" y2="626.5" stroke="#ff0000" stroke-width="0.9"/>
<line x1="344.24" y1="628.5" x2="346.24" y2="626.5" stroke="#ff0000" stroke-width="0.9"/>
<line x1="353.01" y1="628.5" x2="355.01" y2="626.5" stroke="#ff0000" stroke-width="0.9"/>
<line x1="361.78" y1="628.5" x2="363.78" y2="626.5" stroke="#ff0000" stroke-width="0.9"/>
<line x1="370.54" y1="628.5" x2="372.54" y2="626.5" stroke="#ff0000" stroke-width="0.9"/>
<line x1="379.31" y1="628.5" x2="381.31" y2="626.5" stroke="#ff0000" stroke-width="0.9"/>
<line x1="388.08" y1="628.5" x2="390.08" y2="626.5" stroke="#ff0000" stroke-width="0.9"/>
<line x1="396.84" y1="628.5" x2="398.84" y2="626.5" stroke="#ff0000" stroke-width="0.9"/>
<line x1="405.61" y1="628.5" x2="407.61" y2="626.5" stroke="#ff0000" stroke-width="0.9"/>
<line x1="414.38" y1="628.5" x2="416.38" y2="626.5" stroke="#ff0000" stroke-width="0.9"/>
<line x1="510.82" y1="628.5" x2="512.82" y2="626.5" stroke="#00a000" stroke-width="0.9"/>
<line x1="519.58" y1="628.5" x2="521.58" y2="626.5" stroke="#00a000" stroke-width="0.9"/>
<line x1="528.35" y1="628.5" x2="530.35" y2="626.5" stroke="#00a000" stroke-width="0.9"/>
<line x1="537.12" y1="628.5" x2="539.12" y2="626.5" stroke="#00a000" stroke-width="0.9"/>
<line x1="545.88" y1="628.5" x2="547.88" y2="626.5" stroke="#00a000" stroke-width="0.9"/>
<line x1="554.65" y1="628.5" x2="556.65" y2="626.5" stroke="#00a000" stroke-width="0.9"/>
<line x1="563.42" y1="628.5" x2="565.42" y2="626.5" stroke="#00a000" stroke-width="0.9"/>
<line x1="572.18" y1="628.5" x2="574.18" y2="626.5" stroke="#00a000" stroke-width="0.9"/>
<line x1="580.95" y1="628.5" x2="582.95" y2="626.5" stroke="#00a000" stroke-width="0.9"/>
<line x1="589.72" y1="628.5" x2="591.72" y2="626.5" stroke="#00a000" stroke-width="0.9"/>
<line x1="598.49" y1="628.5" x2="600.49" y2="626.5" stroke="#00a000" stroke-width="0.9"/>
<line x1="607.25" y1="628.5" x2="609.25" y2="626.5" stroke="#00a000" stroke-width="0.9"/>
<line x1="616.02" y1="628.5" x2="618.02" y2="626.5" stroke="#00a000" stroke-width="0.9"/>
<line x1="624.79" y1="628.5" x2="626.79" y2="626.5" stroke="#00a000" stroke-width="0.9"/>
<line x1="633.55" y1="628.5" x2="635.55" y2="626.5" stroke="#00a000" stroke-width="0.9"/>
<line x1="642.32" y1="628.5" x2="644.32" y2="626.5" stroke="#00a000" stroke-width="0.9"/>
<line x1="651.09" y1="628.5" x2="653.09" y2="626.5" stroke="#00a000" stroke-width="0.9"/>
<line x1="659.86" y1="628.5" x2="661.86" y2="626.5" stroke="#00a000" stroke-width="0.9"/>
<line x1="686.16" y1="628.5" x2="688.16" y2="626.5" stroke="#ff0000" stroke-width="0.9"/>
<line x1="738.76" y1="628.5" x2="740.76" y2="626.5" stroke="#00a000" stroke-width="0.9"/>
<line x1="747.52" y1="628.5" x2="749.52" y2="626.5" stroke="#00a000" stroke-width="0.9"/>
<line x1="756.29" y1="628.5" x2="758.29" y2="626.5" stroke="#00a000" stroke-width="0.9"/>
<line x1="765.06" y1="628.5" x2="767.06" y2="626.5" stroke="#00a000" stroke-width="0.9"/>
<line x1="773.83" y1="628.5" x2="775.83" y2="626.5" stroke="#00a000" stroke-width="0.9"/>
<line x1="782.59" y1="628.5" x2="784.59" y2="626.5" stroke="#00a000" stroke-width="0.9"/>
<line x1="791.36" y1="628.5" x2="793.36" y2="626.5" stroke="#00a000" stroke-width="0.9"/>
<line x1="800.13" y1="628.5" x2="802.13" y2="626.5" stroke="#00a000" stroke-width="0.9"/>
<line x1="808.89" y1="628.5" x2="810.89" y2="626.5" stroke="#00a000" stroke-width="0.9"/>
<line x1="817.66" y1="628.5" x2="819.66" y2="626.5" stroke="#00a000" stroke-width="0.9"/>
<line x1="826.43" y1="628.5" x2="828.43" y2="626.5" stroke="#00a000" stroke-width="0.9"/>
<line x1="835.19" y1="628.5" x2="837.19" y2="626.5" stroke="#00a000" stroke-width="0.9"/>
<line x1="843.96" y1="628.5" x2="845.96" y2="626.5" stroke="#00a000" stroke-width="0.9"/>
<line x1="852.73" y1="628.5" x2="854.73" y2="626.5" stroke="#00a000" stroke-width="0.9"/>
<line x1="861.5" y1="628.5" x2="863.5" y2="626.5" stroke="#00a000" stroke-width="0.9"/>
<line x1="870.26" y1="628.5" x2="872.26" y2="626.5" stroke="#00a000" stroke-width="0.9"/>
<line x1="879.03" y1="628.5" x2="881.03" y2="626.5" stroke="#00a000" stroke-width="0.9"/>
<line x1="1001.77" y1="628.5" x2="1003.77" y2="626.5" stroke="#00a000" stroke-width="0.9"/>
<line x1="1010.53" y1="628.5" x2="1012.53" y2="626.5" stroke="#00a000" stroke-width="0.9"/>
<line x1="1019.3" y1="628.5" x2="1021.3" y2="626.5" stroke="#00a000" stroke-width="0.9"/>
<line x1="1028.07" y1="628.5" x2="1030.07" y2="626.5" stroke="#00a000" stroke-width="0.9"/>
<line x1="1036.84" y1="628.5" x2="1038.84" y2="626.5" stroke="#00a000" stroke-width="0.9"/>
<line x1="1045.6" y1="628.5" x2="1047.6" y2="626.5" stroke="#00a000" stroke-width="0.9"/>
<line x1="1054.37" y1="628.5" x2="1056.37" y2="626.5" stroke="#00a000" stroke-width="0.9"/>
<line x1="1063.14" y1="628.5" x2="1065.14" y2="626.5" stroke="#00a000" stroke-width="0.9"/>
<line x1="1071.9" y1="628.5" x2="1073.9" y2="626.5" stroke="#00a000" stroke-width="0.9"/>
<line x1="1080.67" y1="628.5" x2="1082.67" y2="626.5" stroke="#00a000" stroke-width="0.9"/>
<line x1="1089.44" y1="628.5" x2="1091.44" y2="626.5" stroke="#00a000" stroke-width="0.9"/>
<line x1="1098.2" y1="628.5" x2="1100.2" y2="626.5" stroke="#00a000" stroke-width="0.9"/>
<line x1="1106.97" y1="628.5" x2="1108.97" y2="626.5" stroke="#ff0000" stroke-width="0.9"/>
<line x1="1115.74" y1="628.5" x2="1117.74" y2="626.5" stroke="#00a000" stroke-width="0.9"/>
<line x1="1124.51" y1="628.5" x2="1126.51" y2="626.5" stroke="#00a000" stroke-width="0.9"/>
<line x1="1133.27" y1="628.5" x2="1135.27" y2="626.5" stroke="#00a000" stroke-width="0.9"/>
<line x1="1142.04" y1="628.5" x2="1144.04" y2="626.5" stroke="#00a000" stroke-width="0.9"/>
<line x1="1150.81" y1="628.5" x2="1152.81" y2="626.5" stroke="#00a000" stroke-width="0.9"/>
<line x1="1159.57" y1="628.5" x2="1161.57" y2="626.5" stroke="#00a000" stroke-width="0.9"/>
<line x1="1168.34" y1="628.5" x2="1170.34" y2="626.5" stroke="#00a000" stroke-width="0.9"/>
<line x1="1177.11" y1="628.5" x2="1179.11" y2="626.5" stroke="#00a000" stroke-width="0.9"/>
<line x1="1185.88" y1="628.5" x2="1187.88" y2="626.5" stroke="#00a000" stroke-width="0.9"/>
<line x1="1194.64" y1="628.5" x2="1196.64" y2="626.5" stroke="#00a000" stroke-width="0.9"/>
<rect x="85" y="302" width="1" height="327" fill="#ffffff" shape-rendering="crispEdges"/>
<rect x="82" y="302" width="3" height="1" fill="#ffffff" shape-rendering="crispEdges"/>
<rect x="82" y="623.74" width="3" height="1" fill="#ffffff" shape-rendering="crispEdges"/>
<rect x="82" y="619.28" width="3" height="1" fill="#ffffff" shape-rendering="crispEdges"/>
<rect x="82" y="614.82" width="3" height="1" fill="#ffffff" shape-rendering="crispEdges"/>
<rect x="82" y="610.36" width="3" height="1" fill="#ffffff" shape-rendering="crispEdges"/>
<rect x="78" y="605.9" width="7" height="1" fill="#ffffff" shape-rendering="crispEdges"/>
<text x="73.5" y="612" font-size="12.2" fill="#ffffff" textLength="26.8" lengthAdjust="spacingAndGlyphs" text-anchor="end">1150</text>
<rect x="82" y="601.44" width="3" height="1" fill="#ffffff" shape-rendering="crispEdges"/>
<rect x="82" y="596.98" width="3" height="1" fill="#ffffff" shape-rendering="crispEdges"/>
<rect x="82" y="592.52" width="3" height="1" fill="#ffffff" shape-rendering="crispEdges"/>
<rect x="82" y="588.06" width="3" height="1" fill="#ffffff" shape-rendering="crispEdges"/>
<rect x="78" y="583.6" width="7" height="1" fill="#ffffff" shape-rendering="crispEdges"/>
<text x="73.5" y="589.7" font-size="12.2" fill="#ffffff" textLength="26.8" lengthAdjust="spacingAndGlyphs" text-anchor="end">1200</text>
<rect x="82" y="579.14" width="3" height="1" fill="#ffffff" shape-rendering="crispEdges"/>
<rect x="82" y="574.68" width="3" height="1" fill="#ffffff" shape-rendering="crispEdges"/>
<rect x="82" y="570.22" width="3" height="1" fill="#ffffff" shape-rendering="crispEdges"/>
<rect x="82" y="565.76" width="3" height="1" fill="#ffffff" shape-rendering="crispEdges"/>
<rect x="78" y="561.3" width="7" height="1" fill="#ffffff" shape-rendering="crispEdges"/>
<text x="73.5" y="567.4" font-size="12.2" fill="#ffffff" textLength="26.8" lengthAdjust="spacingAndGlyphs" text-anchor="end">1250</text>
<rect x="82" y="556.84" width="3" height="1" fill="#ffffff" shape-rendering="crispEdges"/>
<rect x="82" y="552.38" width="3" height="1" fill="#ffffff" shape-rendering="crispEdges"/>
<rect x="82" y="547.92" width="3" height="1" fill="#ffffff" shape-rendering="crispEdges"/>
<rect x="82" y="543.46" width="3" height="1" fill="#ffffff" shape-rendering="crispEdges"/>
<rect x="78" y="539" width="7" height="1" fill="#ffffff" shape-rendering="crispEdges"/>
<text x="73.5" y="545.1" font-size="12.2" fill="#ffffff" textLength="26.8" lengthAdjust="spacingAndGlyphs" text-anchor="end">1300</text>
<rect x="82" y="534.54" width="3" height="1" fill="#ffffff" shape-rendering="crispEdges"/>
<rect x="82" y="530.08" width="3" height="1" fill="#ffffff" shape-rendering="crispEdges"/>
<rect x="82" y="525.62" width="3" height="1" fill="#ffffff" shape-rendering="crispEdges"/>
<rect x="82" y="521.16" width="3" height="1" fill="#ffffff" shape-rendering="crispEdges"/>
<rect x="78" y="516.7" width="7" height="1" fill="#ffffff" shape-rendering="crispEdges"/>
<text x="73.5" y="522.8" font-size="12.2" fill="#ffffff" textLength="26.8" lengthAdjust="spacingAndGlyphs" text-anchor="end">1350</text>
<rect x="82" y="512.24" width="3" height="1" fill="#ffffff" shape-rendering="crispEdges"/>
<rect x="82" y="507.78" width="3" height="1" fill="#ffffff" shape-rendering="crispEdges"/>
<rect x="82" y="503.32" width="3" height="1" fill="#ffffff" shape-rendering="crispEdges"/>
<rect x="82" y="498.86" width="3" height="1" fill="#ffffff" shape-rendering="crispEdges"/>
<rect x="78" y="494.4" width="7" height="1" fill="#ffffff" shape-rendering="crispEdges"/>
<text x="73.5" y="500.5" font-size="12.2" fill="#ffffff" textLength="26.8" lengthAdjust="spacingAndGlyphs" text-anchor="end">1400</text>
<rect x="82" y="489.94" width="3" height="1" fill="#ffffff" shape-rendering="crispEdges"/>
<rect x="82" y="485.48" width="3" height="1" fill="#ffffff" shape-rendering="crispEdges"/>
<rect x="82" y="481.02" width="3" height="1" fill="#ffffff" shape-rendering="crispEdges"/>
<rect x="82" y="476.56" width="3" height="1" fill="#ffffff" shape-rendering="crispEdges"/>
<rect x="78" y="472.1" width="7" height="1" fill="#ffffff" shape-rendering="crispEdges"/>
<text x="73.5" y="478.2" font-size="12.2" fill="#ffffff" textLength="26.8" lengthAdjust="spacingAndGlyphs" text-anchor="end">1450</text>
<rect x="82" y="467.64" width="3" height="1" fill="#ffffff" shape-rendering="crispEdges"/>
<rect x="82" y="463.18" width="3" height="1" fill="#ffffff" shape-rendering="crispEdges"/>
<rect x="82" y="458.72" width="3" height="1" fill="#ffffff" shape-rendering="crispEdges"/>
<rect x="82" y="454.26" width="3" height="1" fill="#ffffff" shape-rendering="crispEdges"/>
<rect x="78" y="449.8" width="7" height="1" fill="#ffffff" shape-rendering="crispEdges"/>
<text x="73.5" y="455.9" font-size="12.2" fill="#ffffff" textLength="26.8" lengthAdjust="spacingAndGlyphs" text-anchor="end">1500</text>
<rect x="82" y="445.34" width="3" height="1" fill="#ffffff" shape-rendering="crispEdges"/>
<rect x="82" y="440.88" width="3" height="1" fill="#ffffff" shape-rendering="crispEdges"/>
<rect x="82" y="436.42" width="3" height="1" fill="#ffffff" shape-rendering="crispEdges"/>
<rect x="82" y="431.96" width="3" height="1" fill="#ffffff" shape-rendering="crispEdges"/>
<rect x="78" y="427.5" width="7" height="1" fill="#ffffff" shape-rendering="crispEdges"/>
<text x="73.5" y="433.6" font-size="12.2" fill="#ffffff" textLength="26.8" lengthAdjust="spacingAndGlyphs" text-anchor="end">1550</text>
<rect x="82" y="423.04" width="3" height="1" fill="#ffffff" shape-rendering="crispEdges"/>
<rect x="82" y="418.58" width="3" height="1" fill="#ffffff" shape-rendering="crispEdges"/>
<rect x="82" y="414.12" width="3" height="1" fill="#ffffff" shape-rendering="crispEdges"/>
<rect x="82" y="409.66" width="3" height="1" fill="#ffffff" shape-rendering="crispEdges"/>
<rect x="78" y="405.2" width="7" height="1" fill="#ffffff" shape-rendering="crispEdges"/>
<text x="73.5" y="411.3" font-size="12.2" fill="#ffffff" textLength="26.8" lengthAdjust="spacingAndGlyphs" text-anchor="end">1600</text>
<rect x="82" y="400.74" width="3" height="1" fill="#ffffff" shape-rendering="crispEdges"/>
<rect x="82" y="396.28" width="3" height="1" fill="#ffffff" shape-rendering="crispEdges"/>
<rect x="82" y="391.82" width="3" height="1" fill="#ffffff" shape-rendering="crispEdges"/>
<rect x="82" y="387.36" width="3" height="1" fill="#ffffff" shape-rendering="crispEdges"/>
<rect x="78" y="382.9" width="7" height="1" fill="#ffffff" shape-rendering="crispEdges"/>
<text x="73.5" y="389" font-size="12.2" fill="#ffffff" textLength="26.8" lengthAdjust="spacingAndGlyphs" text-anchor="end">1650</text>
<rect x="82" y="378.44" width="3" height="1" fill="#ffffff" shape-rendering="crispEdges"/>
<rect x="82" y="373.98" width="3" height="1" fill="#ffffff" shape-rendering="crispEdges"/>
<rect x="82" y="369.52" width="3" height="1" fill="#ffffff" shape-rendering="crispEdges"/>
<rect x="82" y="365.06" width="3" height="1" fill="#ffffff" shape-rendering="crispEdges"/>
<rect x="78" y="360.6" width="7" height="1" fill="#ffffff" shape-rendering="crispEdges"/>
<text x="73.5" y="366.7" font-size="12.2" fill="#ffffff" textLength="26.8" lengthAdjust="spacingAndGlyphs" text-anchor="end">1700</text>
<rect x="82" y="356.14" width="3" height="1" fill="#ffffff" shape-rendering="crispEdges"/>
<rect x="82" y="351.68" width="3" height="1" fill="#ffffff" shape-rendering="crispEdges"/>
<rect x="82" y="347.22" width="3" height="1" fill="#ffffff" shape-rendering="crispEdges"/>
<rect x="82" y="342.76" width="3" height="1" fill="#ffffff" shape-rendering="crispEdges"/>
<rect x="78" y="338.3" width="7" height="1" fill="#ffffff" shape-rendering="crispEdges"/>
<text x="73.5" y="344.4" font-size="12.2" fill="#ffffff" textLength="26.8" lengthAdjust="spacingAndGlyphs" text-anchor="end">1750</text>
<rect x="82" y="333.84" width="3" height="1" fill="#ffffff" shape-rendering="crispEdges"/>
<rect x="82" y="329.38" width="3" height="1" fill="#ffffff" shape-rendering="crispEdges"/>
<rect x="82" y="324.92" width="3" height="1" fill="#ffffff" shape-rendering="crispEdges"/>
<rect x="82" y="320.46" width="3" height="1" fill="#ffffff" shape-rendering="crispEdges"/>
<rect x="78" y="316" width="7" height="1" fill="#ffffff" shape-rendering="crispEdges"/>
<text x="73.5" y="322.1" font-size="12.2" fill="#ffffff" textLength="26.8" lengthAdjust="spacingAndGlyphs" text-anchor="end">1800</text>
<rect x="82" y="311.54" width="3" height="1" fill="#ffffff" shape-rendering="crispEdges"/>
<rect x="82" y="307.08" width="3" height="1" fill="#ffffff" shape-rendering="crispEdges"/>
<rect x="82" y="302.62" width="3" height="1" fill="#ffffff" shape-rendering="crispEdges"/>
<rect x="1313" y="302" width="1" height="327" fill="#ffffff" shape-rendering="crispEdges"/>
<rect x="1313" y="302" width="4" height="1" fill="#ffffff" shape-rendering="crispEdges"/>
<rect x="1313" y="623.74" width="4" height="1" fill="#ffffff" shape-rendering="crispEdges"/>
<rect x="1313" y="619.28" width="4" height="1" fill="#ffffff" shape-rendering="crispEdges"/>
<rect x="1313" y="614.82" width="4" height="1" fill="#ffffff" shape-rendering="crispEdges"/>
<rect x="1313" y="610.36" width="4" height="1" fill="#ffffff" shape-rendering="crispEdges"/>
<rect x="1313" y="605.9" width="9" height="1" fill="#ffffff" shape-rendering="crispEdges"/>
<text x="1359.5" y="612" font-size="12.2" fill="#ffffff" textLength="26.8" lengthAdjust="spacingAndGlyphs" text-anchor="end">1150</text>
<rect x="1313" y="601.44" width="4" height="1" fill="#ffffff" shape-rendering="crispEdges"/>
<rect x="1313" y="596.98" width="4" height="1" fill="#ffffff" shape-rendering="crispEdges"/>
<rect x="1313" y="592.52" width="4" height="1" fill="#ffffff" shape-rendering="crispEdges"/>
<rect x="1313" y="588.06" width="4" height="1" fill="#ffffff" shape-rendering="crispEdges"/>
<rect x="1313" y="583.6" width="9" height="1" fill="#ffffff" shape-rendering="crispEdges"/>
<text x="1359.5" y="589.7" font-size="12.2" fill="#ffffff" textLength="26.8" lengthAdjust="spacingAndGlyphs" text-anchor="end">1200</text>
<rect x="1313" y="579.14" width="4" height="1" fill="#ffffff" shape-rendering="crispEdges"/>
<rect x="1313" y="574.68" width="4" height="1" fill="#ffffff" shape-rendering="crispEdges"/>
<rect x="1313" y="570.22" width="4" height="1" fill="#ffffff" shape-rendering="crispEdges"/>
<rect x="1313" y="565.76" width="4" height="1" fill="#ffffff" shape-rendering="crispEdges"/>
<rect x="1313" y="561.3" width="9" height="1" fill="#ffffff" shape-rendering="crispEdges"/>
<text x="1359.5" y="567.4" font-size="12.2" fill="#ffffff" textLength="26.8" lengthAdjust="spacingAndGlyphs" text-anchor="end">1250</text>
<rect x="1313" y="556.84" width="4" height="1" fill="#ffffff" shape-rendering="crispEdges"/>
<rect x="1313" y="552.38" width="4" height="1" fill="#ffffff" shape-rendering="crispEdges"/>
<rect x="1313" y="547.92" width="4" height="1" fill="#ffffff" shape-rendering="crispEdges"/>
<rect x="1313" y="543.46" width="4" height="1" fill="#ffffff" shape-rendering="crispEdges"/>
<rect x="1313" y="539" width="9" height="1" fill="#ffffff" shape-rendering="crispEdges"/>
<text x="1359.5" y="545.1" font-size="12.2" fill="#ffffff" textLength="26.8" lengthAdjust="spacingAndGlyphs" text-anchor="end">1300</text>
<rect x="1313" y="534.54" width="4" height="1" fill="#ffffff" shape-rendering="crispEdges"/>
<rect x="1313" y="530.08" width="4" height="1" fill="#ffffff" shape-rendering="crispEdges"/>
<rect x="1313" y="525.62" width="4" height="1" fill="#ffffff" shape-rendering="crispEdges"/>
<rect x="1313" y="521.16" width="4" height="1" fill="#ffffff" shape-rendering="crispEdges"/>
<rect x="1313" y="516.7" width="9" height="1" fill="#ffffff" shape-rendering="crispEdges"/>
<text x="1359.5" y="522.8" font-size="12.2" fill="#ffffff" textLength="26.8" lengthAdjust="spacingAndGlyphs" text-anchor="end">1350</text>
<rect x="1313" y="512.24" width="4" height="1" fill="#ffffff" shape-rendering="crispEdges"/>
<rect x="1313" y="507.78" width="4" height="1" fill="#ffffff" shape-rendering="crispEdges"/>
<rect x="1313" y="503.32" width="4" height="1" fill="#ffffff" shape-rendering="crispEdges"/>
<rect x="1313" y="498.86" width="4" height="1" fill="#ffffff" shape-rendering="crispEdges"/>
<rect x="1313" y="494.4" width="9" height="1" fill="#ffffff" shape-rendering="crispEdges"/>
<text x="1359.5" y="500.5" font-size="12.2" fill="#ffffff" textLength="26.8" lengthAdjust="spacingAndGlyphs" text-anchor="end">1400</text>
<rect x="1313" y="489.94" width="4" height="1" fill="#ffffff" shape-rendering="crispEdges"/>
<rect x="1313" y="485.48" width="4" height="1" fill="#ffffff" shape-rendering="crispEdges"/>
<rect x="1313" y="481.02" width="4" height="1" fill="#ffffff" shape-rendering="crispEdges"/>
<rect x="1313" y="476.56" width="4" height="1" fill="#ffffff" shape-rendering="crispEdges"/>
<rect x="1313" y="472.1" width="9" height="1" fill="#ffffff" shape-rendering="crispEdges"/>
<text x="1359.5" y="478.2" font-size="12.2" fill="#ffffff" textLength="26.8" lengthAdjust="spacingAndGlyphs" text-anchor="end">1450</text>
<rect x="1313" y="467.64" width="4" height="1" fill="#ffffff" shape-rendering="crispEdges"/>
<rect x="1313" y="463.18" width="4" height="1" fill="#ffffff" shape-rendering="crispEdges"/>
<rect x="1313" y="458.72" width="4" height="1" fill="#ffffff" shape-rendering="crispEdges"/>
<rect x="1313" y="454.26" width="4" height="1" fill="#ffffff" shape-rendering="crispEdges"/>
<rect x="1313" y="449.8" width="9" height="1" fill="#ffffff" shape-rendering="crispEdges"/>
<text x="1359.5" y="455.9" font-size="12.2" fill="#ffffff" textLength="26.8" lengthAdjust="spacingAndGlyphs" text-anchor="end">1500</text>
<rect x="1313" y="445.34" width="4" height="1" fill="#ffffff" shape-rendering="crispEdges"/>
<rect x="1313" y="440.88" width="4" height="1" fill="#ffffff" shape-rendering="crispEdges"/>
<rect x="1313" y="436.42" width="4" height="1" fill="#ffffff" shape-rendering="crispEdges"/>
<rect x="1313" y="431.96" width="4" height="1" fill="#ffffff" shape-rendering="crispEdges"/>
<rect x="1313" y="427.5" width="9" height="1" fill="#ffffff" shape-rendering="crispEdges"/>
<text x="1359.5" y="433.6" font-size="12.2" fill="#ffffff" textLength="26.8" lengthAdjust="spacingAndGlyphs" text-anchor="end">1550</text>
<rect x="1313" y="423.04" width="4" height="1" fill="#ffffff" shape-rendering="crispEdges"/>
<rect x="1313" y="418.58" width="4" height="1" fill="#ffffff" shape-rendering="crispEdges"/>
<rect x="1313" y="414.12" width="4" height="1" fill="#ffffff" shape-rendering="crispEdges"/>
<rect x="1313" y="409.66" width="4" height="1" fill="#ffffff" shape-rendering="crispEdges"/>
<rect x="1313" y="405.2" width="9" height="1" fill="#ffffff" shape-rendering="crispEdges"/>
<text x="1359.5" y="411.3" font-size="12.2" fill="#ffffff" textLength="26.8" lengthAdjust="spacingAndGlyphs" text-anchor="end">1600</text>
<rect x="1313" y="400.74" width="4" height="1" fill="#ffffff" shape-rendering="crispEdges"/>
<rect x="1313" y="396.28" width="4" height="1" fill="#ffffff" shape-rendering="crispEdges"/>
<rect x="1313" y="391.82" width="4" height="1" fill="#ffffff" shape-rendering="crispEdges"/>
<rect x="1313" y="387.36" width="4" height="1" fill="#ffffff" shape-rendering="crispEdges"/>
<rect x="1313" y="382.9" width="9" height="1" fill="#ffffff" shape-rendering="crispEdges"/>
<text x="1359.5" y="389" font-size="12.2" fill="#ffffff" textLength="26.8" lengthAdjust="spacingAndGlyphs" text-anchor="end">1650</text>
<rect x="1313" y="378.44" width="4" height="1" fill="#ffffff" shape-rendering="crispEdges"/>
<rect x="1313" y="373.98" width="4" height="1" fill="#ffffff" shape-rendering="crispEdges"/>
<rect x="1313" y="369.52" width="4" height="1" fill="#ffffff" shape-rendering="crispEdges"/>
<rect x="1313" y="365.06" width="4" height="1" fill="#ffffff" shape-rendering="crispEdges"/>
<rect x="1313" y="360.6" width="9" height="1" fill="#ffffff" shape-rendering="crispEdges"/>
<text x="1359.5" y="366.7" font-size="12.2" fill="#ffffff" textLength="26.8" lengthAdjust="spacingAndGlyphs" text-anchor="end">1700</text>
<rect x="1313" y="356.14" width="4" height="1" fill="#ffffff" shape-rendering="crispEdges"/>
<rect x="1313" y="351.68" width="4" height="1" fill="#ffffff" shape-rendering="crispEdges"/>
<rect x="1313" y="347.22" width="4" height="1" fill="#ffffff" shape-rendering="crispEdges"/>
<rect x="1313" y="342.76" width="4" height="1" fill="#ffffff" shape-rendering="crispEdges"/>
<rect x="1313" y="338.3" width="9" height="1" fill="#ffffff" shape-rendering="crispEdges"/>
<text x="1359.5" y="344.4" font-size="12.2" fill="#ffffff" textLength="26.8" lengthAdjust="spacingAndGlyphs" text-anchor="end">1750</text>
<rect x="1313" y="333.84" width="4" height="1" fill="#ffffff" shape-rendering="crispEdges"/>
<rect x="1313" y="329.38" width="4" height="1" fill="#ffffff" shape-rendering="crispEdges"/>
<rect x="1313" y="324.92" width="4" height="1" fill="#ffffff" shape-rendering="crispEdges"/>
<rect x="1313" y="320.46" width="4" height="1" fill="#ffffff" shape-rendering="crispEdges"/>
<rect x="1313" y="316" width="9" height="1" fill="#ffffff" shape-rendering="crispEdges"/>
<text x="1359.5" y="322.1" font-size="12.2" fill="#ffffff" textLength="26.8" lengthAdjust="spacingAndGlyphs" text-anchor="end">1800</text>
<rect x="1313" y="311.54" width="4" height="1" fill="#ffffff" shape-rendering="crispEdges"/>
<rect x="1313" y="307.08" width="4" height="1" fill="#ffffff" shape-rendering="crispEdges"/>
<rect x="1313" y="302.62" width="4" height="1" fill="#ffffff" shape-rendering="crispEdges"/>
<rect x="37.5" y="339.500" width="47.5" height="17" fill="#000000" stroke="#ffffff" stroke-width="1"/>
<rect x="1318" y="339.500" width="47.5" height="17" fill="#000000" stroke="#ffffff" stroke-width="1"/>
<text x="40.3" y="352.6" font-size="12" fill="#ff0000" textLength="43" lengthAdjust="spacingAndGlyphs">1726.290</text>
<text x="1319.6" y="352.6" font-size="12" fill="#ff0000" textLength="43" lengthAdjust="spacingAndGlyphs">1726.290</text>
</g>
<g id="xaxis">
<rect x="35" y="629" width="1329" height="3" fill="#000000" shape-rendering="crispEdges"/>
<rect x="35" y="629" width="1279" height="24" fill="#000000" shape-rendering="crispEdges"/>
<rect x="35" y="629" width="1329" height="1" fill="#4a4a4a" shape-rendering="crispEdges"/>
<rect x="1314" y="632" width="50" height="21" fill="#ececec" shape-rendering="crispEdges"/>
<rect x="1314.500" y="632.500" width="49" height="20" fill="none" stroke="#cfcfcf"/>
<circle cx="1338" cy="642" r="4.600" fill="none" stroke="#f0f000" stroke-width="1"/>
<rect x="1335.5" y="640" width="1.5" height="1" fill="#f0f000" shape-rendering="crispEdges"/>
<rect x="1339" y="640" width="1.5" height="1" fill="#f0f000" shape-rendering="crispEdges"/>
<rect x="1335.5" y="644" width="5" height="1" fill="#f0f000" shape-rendering="crispEdges"/>
<rect x="85" y="631" width="1" height="21" fill="#ffffff" shape-rendering="crispEdges"/>
<rect x="90" y="631" width="1" height="5" fill="#ffffff" shape-rendering="crispEdges"/>
<rect x="98.77" y="631" width="1" height="5" fill="#ffffff" shape-rendering="crispEdges"/>
<rect x="107.53" y="631" width="1" height="5" fill="#ffffff" shape-rendering="crispEdges"/>
<rect x="116.3" y="631" width="1" height="5" fill="#ffffff" shape-rendering="crispEdges"/>
<rect x="125.07" y="631" width="1" height="5" fill="#ffffff" shape-rendering="crispEdges"/>
<rect x="133.83" y="631" width="1" height="5" fill="#ffffff" shape-rendering="crispEdges"/>
<rect x="142.6" y="631" width="1" height="5" fill="#ffffff" shape-rendering="crispEdges"/>
<rect x="151.37" y="631" width="1" height="5" fill="#ffffff" shape-rendering="crispEdges"/>
<rect x="160.14" y="631" width="1" height="5" fill="#ffffff" shape-rendering="crispEdges"/>
<rect x="168.9" y="631" width="1" height="5" fill="#ffffff" shape-rendering="crispEdges"/>
<rect x="177.67" y="631" width="1" height="5" fill="#ffffff" shape-rendering="crispEdges"/>
<rect x="186.44" y="631" width="1" height="5" fill="#ffffff" shape-rendering="crispEdges"/>
<rect x="195.2" y="631" width="1" height="5" fill="#ffffff" shape-rendering="crispEdges"/>
<rect x="203.97" y="631" width="1" height="5" fill="#ffffff" shape-rendering="crispEdges"/>
<rect x="212.74" y="631" width="1" height="5" fill="#ffffff" shape-rendering="crispEdges"/>
<rect x="221.5" y="631" width="1" height="5" fill="#ffffff" shape-rendering="crispEdges"/>
<rect x="230.27" y="631" width="1" height="5" fill="#ffffff" shape-rendering="crispEdges"/>
<rect x="239.04" y="631" width="1" height="5" fill="#ffffff" shape-rendering="crispEdges"/>
<rect x="247.81" y="631" width="1" height="5" fill="#ffffff" shape-rendering="crispEdges"/>
<rect x="256.57" y="631" width="1" height="5" fill="#ffffff" shape-rendering="crispEdges"/>
<rect x="265.34" y="631" width="1" height="5" fill="#ffffff" shape-rendering="crispEdges"/>
<rect x="274.11" y="631" width="1" height="5" fill="#ffffff" shape-rendering="crispEdges"/>
<rect x="282.87" y="631" width="1" height="5" fill="#ffffff" shape-rendering="crispEdges"/>
<rect x="291.64" y="631" width="1" height="5" fill="#ffffff" shape-rendering="crispEdges"/>
<rect x="300.41" y="631" width="1" height="5" fill="#ffffff" shape-rendering="crispEdges"/>
<rect x="309.17" y="631" width="1" height="5" fill="#ffffff" shape-rendering="crispEdges"/>
<rect x="317.94" y="631" width="1" height="5" fill="#ffffff" shape-rendering="crispEdges"/>
<rect x="326.71" y="631" width="1" height="5" fill="#ffffff" shape-rendering="crispEdges"/>
<rect x="335.48" y="631" width="1" height="5" fill="#ffffff" shape-rendering="crispEdges"/>
<rect x="344.24" y="631" width="1" height="5" fill="#ffffff" shape-rendering="crispEdges"/>
<rect x="353.01" y="631" width="1" height="5" fill="#ffffff" shape-rendering="crispEdges"/>
<rect x="361.78" y="631" width="1" height="5" fill="#ffffff" shape-rendering="crispEdges"/>
<rect x="370.54" y="631" width="1" height="5" fill="#ffffff" shape-rendering="crispEdges"/>
<rect x="379.31" y="631" width="1" height="5" fill="#ffffff" shape-rendering="crispEdges"/>
<rect x="388.08" y="631" width="1" height="5" fill="#ffffff" shape-rendering="crispEdges"/>
<rect x="396.84" y="631" width="1" height="5" fill="#ffffff" shape-rendering="crispEdges"/>
<rect x="405.61" y="631" width="1" height="5" fill="#ffffff" shape-rendering="crispEdges"/>
<rect x="414.38" y="631" width="1" height="5" fill="#ffffff" shape-rendering="crispEdges"/>
<rect x="423.15" y="631" width="1" height="5" fill="#ffffff" shape-rendering="crispEdges"/>
<rect x="431.91" y="631" width="1" height="5" fill="#ffffff" shape-rendering="crispEdges"/>
<rect x="440.68" y="631" width="1" height="5" fill="#ffffff" shape-rendering="crispEdges"/>
<rect x="449.45" y="631" width="1" height="5" fill="#ffffff" shape-rendering="crispEdges"/>
<rect x="458.21" y="631" width="1" height="5" fill="#ffffff" shape-rendering="crispEdges"/>
<rect x="466.98" y="631" width="1" height="5" fill="#ffffff" shape-rendering="crispEdges"/>
<rect x="475.75" y="631" width="1" height="5" fill="#ffffff" shape-rendering="crispEdges"/>
<rect x="484.51" y="631" width="1" height="5" fill="#ffffff" shape-rendering="crispEdges"/>
<rect x="493.28" y="631" width="1" height="5" fill="#ffffff" shape-rendering="crispEdges"/>
<rect x="502.05" y="631" width="1" height="5" fill="#ffffff" shape-rendering="crispEdges"/>
<rect x="510.82" y="631" width="1" height="5" fill="#ffffff" shape-rendering="crispEdges"/>
<rect x="519.58" y="631" width="1" height="5" fill="#ffffff" shape-rendering="crispEdges"/>
<rect x="528.35" y="631" width="1" height="5" fill="#ffffff" shape-rendering="crispEdges"/>
<rect x="537.12" y="631" width="1" height="5" fill="#ffffff" shape-rendering="crispEdges"/>
<rect x="545.88" y="631" width="1" height="5" fill="#ffffff" shape-rendering="crispEdges"/>
<rect x="554.65" y="631" width="1" height="5" fill="#ffffff" shape-rendering="crispEdges"/>
<rect x="563.42" y="631" width="1" height="5" fill="#ffffff" shape-rendering="crispEdges"/>
<rect x="572.18" y="631" width="1" height="5" fill="#ffffff" shape-rendering="crispEdges"/>
<rect x="580.95" y="631" width="1" height="5" fill="#ffffff" shape-rendering="crispEdges"/>
<rect x="589.72" y="631" width="1" height="5" fill="#ffffff" shape-rendering="crispEdges"/>
<rect x="598.49" y="631" width="1" height="5" fill="#ffffff" shape-rendering="crispEdges"/>
<rect x="607.25" y="631" width="1" height="5" fill="#ffffff" shape-rendering="crispEdges"/>
<rect x="616.02" y="631" width="1" height="5" fill="#ffffff" shape-rendering="crispEdges"/>
<rect x="624.79" y="631" width="1" height="5" fill="#ffffff" shape-rendering="crispEdges"/>
<rect x="633.55" y="631" width="1" height="5" fill="#ffffff" shape-rendering="crispEdges"/>
<rect x="642.32" y="631" width="1" height="5" fill="#ffffff" shape-rendering="crispEdges"/>
<rect x="651.09" y="631" width="1" height="5" fill="#ffffff" shape-rendering="crispEdges"/>
<rect x="659.86" y="631" width="1" height="5" fill="#ffffff" shape-rendering="crispEdges"/>
<rect x="668.62" y="631" width="1" height="5" fill="#ffffff" shape-rendering="crispEdges"/>
<rect x="677.39" y="631" width="1" height="5" fill="#ffffff" shape-rendering="crispEdges"/>
<rect x="686.16" y="631" width="1" height="5" fill="#ffffff" shape-rendering="crispEdges"/>
<rect x="694.92" y="631" width="1" height="5" fill="#ffffff" shape-rendering="crispEdges"/>
<rect x="703.69" y="631" width="1" height="5" fill="#ffffff" shape-rendering="crispEdges"/>
<rect x="712.46" y="631" width="1" height="5" fill="#ffffff" shape-rendering="crispEdges"/>
<rect x="721.22" y="631" width="1" height="5" fill="#ffffff" shape-rendering="crispEdges"/>
<rect x="729.99" y="631" width="1" height="5" fill="#ffffff" shape-rendering="crispEdges"/>
<rect x="738.76" y="631" width="1" height="5" fill="#ffffff" shape-rendering="crispEdges"/>
<rect x="747.52" y="631" width="1" height="5" fill="#ffffff" shape-rendering="crispEdges"/>
<rect x="756.29" y="631" width="1" height="5" fill="#ffffff" shape-rendering="crispEdges"/>
<rect x="765.06" y="631" width="1" height="5" fill="#ffffff" shape-rendering="crispEdges"/>
<rect x="773.83" y="631" width="1" height="5" fill="#ffffff" shape-rendering="crispEdges"/>
<rect x="782.59" y="631" width="1" height="5" fill="#ffffff" shape-rendering="crispEdges"/>
<rect x="791.36" y="631" width="1" height="5" fill="#ffffff" shape-rendering="crispEdges"/>
<rect x="800.13" y="631" width="1" height="5" fill="#ffffff" shape-rendering="crispEdges"/>
<rect x="808.89" y="631" width="1" height="5" fill="#ffffff" shape-rendering="crispEdges"/>
<rect x="817.66" y="631" width="1" height="5" fill="#ffffff" shape-rendering="crispEdges"/>
<rect x="826.43" y="631" width="1" height="5" fill="#ffffff" shape-rendering="crispEdges"/>
<rect x="835.19" y="631" width="1" height="5" fill="#ffffff" shape-rendering="crispEdges"/>
<rect x="843.96" y="631" width="1" height="5" fill="#ffffff" shape-rendering="crispEdges"/>
<rect x="852.73" y="631" width="1" height="5" fill="#ffffff" shape-rendering="crispEdges"/>
<rect x="861.5" y="631" width="1" height="5" fill="#ffffff" shape-rendering="crispEdges"/>
<rect x="870.26" y="631" width="1" height="5" fill="#ffffff" shape-rendering="crispEdges"/>
<rect x="879.03" y="631" width="1" height="5" fill="#ffffff" shape-rendering="crispEdges"/>
<rect x="887.8" y="631" width="1" height="5" fill="#ffffff" shape-rendering="crispEdges"/>
<rect x="896.56" y="631" width="1" height="5" fill="#ffffff" shape-rendering="crispEdges"/>
<rect x="905.33" y="631" width="1" height="5" fill="#ffffff" shape-rendering="crispEdges"/>
<rect x="914.1" y="631" width="1" height="5" fill="#ffffff" shape-rendering="crispEdges"/>
<rect x="922.86" y="631" width="1" height="5" fill="#ffffff" shape-rendering="crispEdges"/>
<rect x="931.63" y="631" width="1" height="5" fill="#ffffff" shape-rendering="crispEdges"/>
<rect x="940.4" y="631" width="1" height="5" fill="#ffffff" shape-rendering="crispEdges"/>
<rect x="949.17" y="631" width="1" height="5" fill="#ffffff" shape-rendering="crispEdges"/>
<rect x="957.93" y="631" width="1" height="5" fill="#ffffff" shape-rendering="crispEdges"/>
<rect x="966.7" y="631" width="1" height="5" fill="#ffffff" shape-rendering="crispEdges"/>
<rect x="975.47" y="631" width="1" height="5" fill="#ffffff" shape-rendering="crispEdges"/>
<rect x="984.23" y="631" width="1" height="5" fill="#ffffff" shape-rendering="crispEdges"/>
<rect x="993" y="631" width="1" height="5" fill="#ffffff" shape-rendering="crispEdges"/>
<rect x="1001.77" y="631" width="1" height="5" fill="#ffffff" shape-rendering="crispEdges"/>
<rect x="1010.53" y="631" width="1" height="5" fill="#ffffff" shape-rendering="crispEdges"/>
<rect x="1019.3" y="631" width="1" height="5" fill="#ffffff" shape-rendering="crispEdges"/>
<rect x="1028.07" y="631" width="1" height="5" fill="#ffffff" shape-rendering="crispEdges"/>
<rect x="1036.84" y="631" width="1" height="5" fill="#ffffff" shape-rendering="crispEdges"/>
<rect x="1045.6" y="631" width="1" height="5" fill="#ffffff" shape-rendering="crispEdges"/>
<rect x="1054.37" y="631" width="1" height="5" fill="#ffffff" shape-rendering="crispEdges"/>
<rect x="1063.14" y="631" width="1" height="5" fill="#ffffff" shape-rendering="crispEdges"/>
<rect x="1071.9" y="631" width="1" height="5" fill="#ffffff" shape-rendering="crispEdges"/>
<rect x="1080.67" y="631" width="1" height="5" fill="#ffffff" shape-rendering="crispEdges"/>
<rect x="1089.44" y="631" width="1" height="5" fill="#ffffff" shape-rendering="crispEdges"/>
<rect x="1098.2" y="631" width="1" height="5" fill="#ffffff" shape-rendering="crispEdges"/>
<rect x="1106.97" y="631" width="1" height="5" fill="#ffffff" shape-rendering="crispEdges"/>
<rect x="1115.74" y="631" width="1" height="5" fill="#ffffff" shape-rendering="crispEdges"/>
<rect x="1124.51" y="631" width="1" height="5" fill="#ffffff" shape-rendering="crispEdges"/>
<rect x="1133.27" y="631" width="1" height="5" fill="#ffffff" shape-rendering="crispEdges"/>
<rect x="1142.04" y="631" width="1" height="5" fill="#ffffff" shape-rendering="crispEdges"/>
<rect x="1150.81" y="631" width="1" height="5" fill="#ffffff" shape-rendering="crispEdges"/>
<rect x="1159.57" y="631" width="1" height="5" fill="#ffffff" shape-rendering="crispEdges"/>
<rect x="1168.34" y="631" width="1" height="5" fill="#ffffff" shape-rendering="crispEdges"/>
<rect x="1177.11" y="631" width="1" height="5" fill="#ffffff" shape-rendering="crispEdges"/>
<rect x="1185.88" y="631" width="1" height="5" fill="#ffffff" shape-rendering="crispEdges"/>
<rect x="1194.64" y="631" width="1" height="5" fill="#ffffff" shape-rendering="crispEdges"/>
<rect x="1203.41" y="631" width="1" height="5" fill="#ffffff" shape-rendering="crispEdges"/>
<rect x="1212.18" y="631" width="1" height="5" fill="#ffffff" shape-rendering="crispEdges"/>
<rect x="1220.94" y="631" width="1" height="5" fill="#ffffff" shape-rendering="crispEdges"/>
<rect x="1229.71" y="631" width="1" height="5" fill="#ffffff" shape-rendering="crispEdges"/>
<rect x="1238.48" y="631" width="1" height="5" fill="#ffffff" shape-rendering="crispEdges"/>
<rect x="1247.24" y="631" width="1" height="5" fill="#ffffff" shape-rendering="crispEdges"/>
<rect x="1256.01" y="631" width="1" height="5" fill="#ffffff" shape-rendering="crispEdges"/>
<rect x="1264.78" y="631" width="1" height="5" fill="#ffffff" shape-rendering="crispEdges"/>
<rect x="1273.54" y="631" width="1" height="5" fill="#ffffff" shape-rendering="crispEdges"/>
<rect x="1282.31" y="631" width="1" height="5" fill="#ffffff" shape-rendering="crispEdges"/>
<rect x="1291.08" y="631" width="1" height="5" fill="#ffffff" shape-rendering="crispEdges"/>
<rect x="1299.85" y="631" width="1" height="5" fill="#ffffff" shape-rendering="crispEdges"/>
<rect x="1308.61" y="631" width="1" height="5" fill="#ffffff" shape-rendering="crispEdges"/>
<rect x="98.77" y="631" width="1" height="21" fill="#ffffff" shape-rendering="crispEdges"/>
<text x="100.87" y="648.2" font-size="12" fill="#ffffff">2018</text>
<rect x="133.83" y="631" width="1" height="21" fill="#ffffff" shape-rendering="crispEdges"/>
<text x="135.93" y="648.2" font-size="12" fill="#ffffff">Feb</text>
<rect x="168.9" y="631" width="1" height="21" fill="#ffffff" shape-rendering="crispEdges"/>
<text x="171" y="648.2" font-size="12" fill="#ffffff">Mar</text>
<rect x="212.74" y="631" width="1" height="21" fill="#ffffff" shape-rendering="crispEdges"/>
<text x="214.84" y="648.2" font-size="12" fill="#ffffff">Apr</text>
<rect x="247.81" y="631" width="1" height="21" fill="#ffffff" shape-rendering="crispEdges"/>
<text x="249.91" y="648.2" font-size="12" fill="#ffffff">May</text>
<rect x="282.87" y="631" width="1" height="21" fill="#ffffff" shape-rendering="crispEdges"/>
<text x="284.97" y="648.2" font-size="12" fill="#ffffff">Jun</text>
<rect x="326.71" y="631" width="1" height="21" fill="#ffffff" shape-rendering="crispEdges"/>
<text x="328.81" y="648.2" font-size="12" fill="#ffffff">Jul</text>
<rect x="361.78" y="631" width="1" height="21" fill="#ffffff" shape-rendering="crispEdges"/>
<text x="363.88" y="648.2" font-size="12" fill="#ffffff">Aug</text>
<rect x="405.61" y="631" width="1" height="21" fill="#ffffff" shape-rendering="crispEdges"/>
<text x="407.71" y="648.2" font-size="12" fill="#ffffff">Sep</text>
<rect x="440.68" y="631" width="1" height="21" fill="#ffffff" shape-rendering="crispEdges"/>
<text x="442.78" y="648.2" font-size="12" fill="#ffffff">Oct</text>
<rect x="475.75" y="631" width="1" height="21" fill="#ffffff" shape-rendering="crispEdges"/>
<text x="477.85" y="648.2" font-size="12" fill="#ffffff">Nov</text>
<rect x="519.58" y="631" width="1" height="21" fill="#ffffff" shape-rendering="crispEdges"/>
<text x="521.68" y="648.2" font-size="12" fill="#ffffff">Dec</text>
<rect x="554.65" y="631" width="1" height="21" fill="#ffffff" shape-rendering="crispEdges"/>
<text x="556.75" y="648.2" font-size="12" fill="#ffffff">2019</text>
<rect x="589.72" y="631" width="1" height="21" fill="#ffffff" shape-rendering="crispEdges"/>
<text x="591.82" y="648.2" font-size="12" fill="#ffffff">Feb</text>
<rect x="624.79" y="631" width="1" height="21" fill="#ffffff" shape-rendering="crispEdges"/>
<text x="626.89" y="648.2" font-size="12" fill="#ffffff">Mar</text>
<rect x="668.62" y="631" width="1" height="21" fill="#ffffff" shape-rendering="crispEdges"/>
<text x="670.72" y="648.2" font-size="12" fill="#ffffff">Apr</text>
<rect x="703.69" y="631" width="1" height="21" fill="#ffffff" shape-rendering="crispEdges"/>
<text x="705.79" y="648.2" font-size="12" fill="#ffffff">May</text>
<rect x="747.52" y="631" width="1" height="21" fill="#ffffff" shape-rendering="crispEdges"/>
<text x="749.62" y="648.2" font-size="12" fill="#ffffff">Jun</text>
<rect x="782.59" y="631" width="1" height="21" fill="#ffffff" shape-rendering="crispEdges"/>
<text x="784.69" y="648.2" font-size="12" fill="#ffffff">Jul</text>
<rect x="817.66" y="631" width="1" height="21" fill="#ffffff" shape-rendering="crispEdges"/>
<text x="819.76" y="648.2" font-size="12" fill="#ffffff">Aug</text>
<rect x="861.5" y="631" width="1" height="21" fill="#ffffff" shape-rendering="crispEdges"/>
<text x="863.6" y="648.2" font-size="12" fill="#ffffff">Sep</text>
<rect x="896.56" y="631" width="1" height="21" fill="#ffffff" shape-rendering="crispEdges"/>
<text x="898.66" y="648.2" font-size="12" fill="#ffffff">Oct</text>
<rect x="931.63" y="631" width="1" height="21" fill="#ffffff" shape-rendering="crispEdges"/>
<text x="933.73" y="648.2" font-size="12" fill="#ffffff">Nov</text>
<rect x="975.47" y="631" width="1" height="21" fill="#ffffff" shape-rendering="crispEdges"/>
<text x="977.57" y="648.2" font-size="12" fill="#ffffff">Dec</text>
<rect x="1010.53" y="631" width="1" height="21" fill="#ffffff" shape-rendering="crispEdges"/>
<text x="1012.63" y="648.2" font-size="12" fill="#ffffff">2020</text>
<rect x="1054.37" y="631" width="1" height="21" fill="#ffffff" shape-rendering="crispEdges"/>
<text x="1056.47" y="648.2" font-size="12" fill="#ffffff">Feb</text>
<rect x="1089.44" y="631" width="1" height="21" fill="#ffffff" shape-rendering="crispEdges"/>
<text x="1091.54" y="648.2" font-size="12" fill="#ffffff">Mar</text>
<rect x="1124.51" y="631" width="1" height="21" fill="#ffffff" shape-rendering="crispEdges"/>
<text x="1126.61" y="648.2" font-size="12" fill="#ffffff">Apr</text>
<rect x="1159.57" y="631" width="1" height="21" fill="#ffffff" shape-rendering="crispEdges"/>
<text x="1161.67" y="648.2" font-size="12" fill="#ffffff">May</text>
<rect x="1203.41" y="631" width="1" height="21" fill="#ffffff" shape-rendering="crispEdges"/>
<text x="1205.51" y="648.2" font-size="12" fill="#ffffff">Jun</text>
<rect x="1238.48" y="631" width="1" height="21" fill="#ffffff" shape-rendering="crispEdges"/>
<text x="1240.58" y="648.2" font-size="12" fill="#ffffff">Jul</text>
<rect x="1282.31" y="631" width="1" height="21" fill="#ffffff" shape-rendering="crispEdges"/>
<text x="1284.41" y="648.2" font-size="12" fill="#ffffff">Aug</text>
</g>
<g id="scroll">
<rect x="35" y="653" width="1329" height="21" fill="#f0f0f0" shape-rendering="crispEdges"/>
<pattern id="dots" width="2" height="2" patternUnits="userSpaceOnUse"><rect width="2" height="2" fill="#ffffff"/><rect width="1" height="1" fill="#e4e4e4"/><rect x="1" y="1" width="1" height="1" fill="#e4e4e4"/></pattern>
<rect x="51" y="654" width="1082" height="19" fill="url(#dots)" shape-rendering="crispEdges"/>
<rect x="35" y="654" width="16" height="19" fill="#f0f0f0" shape-rendering="crispEdges"/>
<rect x="35" y="672.5" width="16" height="1" fill="#8a8a8a" shape-rendering="crispEdges"/>
<rect x="51" y="654" width="1" height="19" fill="#8a8a8a" shape-rendering="crispEdges"/>
<rect x="35" y="654" width="16" height="1" fill="#ffffff" shape-rendering="crispEdges"/>
<path d="M39.500 663l5 -4.500v9z" fill="#000"/>
<rect x="848" y="654" width="283" height="19" fill="#f0f0f0" shape-rendering="crispEdges"/>
<rect x="848" y="671" width="283" height="1" fill="#a6a6a6" shape-rendering="crispEdges"/>
<rect x="848" y="672" width="283" height="1" fill="#6e6e6e" shape-rendering="crispEdges"/>
<rect x="1129" y="654" width="1" height="19" fill="#a6a6a6" shape-rendering="crispEdges"/>
<rect x="1130" y="654" width="1" height="19" fill="#6e6e6e" shape-rendering="crispEdges"/>
<rect x="848" y="654" width="1" height="19" fill="#ffffff" shape-rendering="crispEdges"/>
<rect x="848" y="654" width="283" height="1" fill="#ffffff" shape-rendering="crispEdges"/>
<rect x="1133" y="654" width="17" height="19" fill="#f0f0f0" shape-rendering="crispEdges"/>
<rect x="1133" y="672.5" width="17" height="1" fill="#8a8a8a" shape-rendering="crispEdges"/>
<rect x="1149.5" y="654" width="1" height="19" fill="#8a8a8a" shape-rendering="crispEdges"/>
<rect x="1133" y="654" width="17" height="1" fill="#ffffff" shape-rendering="crispEdges"/>
<rect x="1133" y="654" width="1" height="19" fill="#ffffff" shape-rendering="crispEdges"/>
<path d="M1144.500 663l-5 -4.500v9z" fill="#000"/>
</g>
<g id="scrollicons"><rect x="1152" y="656" width="1" height="15" fill="#a6a6a6"/><rect x="1153" y="656" width="1" height="15" fill="#fdfdfd"/><path d="M1161 662a5 5 0 0 1 8.500 -2.500" fill="none" stroke="#4c4c4c" stroke-width="2.200"/><path d="M1171.500 656v5.500h-5.500z" fill="#4c4c4c"/><path d="M1171 664a5 5 0 0 1 -8.500 2.500" fill="none" stroke="#4c4c4c" stroke-width="2.200"/><path d="M1160.500 670v-5.500h5.500z" fill="#4c4c4c"/><text x="1187" y="668" font-size="13" font-weight="bold" fill="#4c4c4c" text-anchor="middle" textLength="11" lengthAdjust="spacingAndGlyphs">W</text><rect x="1200" y="656" width="1" height="15" fill="#a6a6a6"/><rect x="1201" y="656" width="1" height="15" fill="#fdfdfd"/><path d="M1214 658v10" stroke="#4c4c4c" stroke-width="1.600"/><path d="M1214 656l3.500 4h-7zM1214 670l3.500 -4h-7z" fill="#4c4c4c"/><path d="M1228.500 663h13M1235 656.500v13" stroke="#4c4c4c" stroke-width="1.600"/><path d="M1235 655.500l3 3.500h-6zM1235 670.500l3 -3.500h-6zM1227.500 663l3.500 -3v6zM1242.500 663l-3.500 -3v6z" fill="#4c4c4c"/><circle cx="1256" cy="663" r="5.500" fill="#f6f6f6" stroke="#7a7a7a" stroke-width="1.300"/><path d="M1253 663h6" stroke="#4c4c4c" stroke-width="1.800"/><circle cx="1277" cy="663" r="5.500" fill="#f6f6f6" stroke="#7a7a7a" stroke-width="1.300"/><path d="M1274 663h6M1277 660v6" stroke="#4c4c4c" stroke-width="1.800"/><rect x="1290" y="656" width="1" height="15" fill="#a6a6a6"/><rect x="1291" y="656" width="1" height="15" fill="#fdfdfd"/><path d="M1300.500 663l5.500 -4v8z" fill="#c4c4c4"/><path d="M1328 663l-5.500 -4v8z" fill="#c4c4c4"/><rect x="1339.500" y="657.500" width="11" height="11" fill="#f6f6f6" stroke="#4c4c4c" stroke-width="1.200"/><rect x="1339" y="657" width="12" height="2.500" fill="#4c4c4c"/><path d="M1341.500 662h1M1344 662h5M1341.500 664.500h1M1344 664.500h5M1341.500 667h1M1344 667h5" stroke="#4c4c4c" stroke-width="1"/><rect x="1360" y="656" width="1" height="15" fill="#a6a6a6"/><rect x="1361" y="656" width="1" height="15" fill="#fdfdfd"/></g>
<rect x="0" y="674" width="1366" height="34" fill="#ebebeb" shape-rendering="crispEdges"/>
<rect x="0" y="675.5" width="34" height="1" fill="#a0a0a0" shape-rendering="crispEdges"/>
<g id="bottombar">
<rect x="0" y="677" width="1366" height="1" fill="#fbfbfb" shape-rendering="crispEdges"/>
<rect x="0" y="707" width="1366" height="1" fill="#9c9c9c" shape-rendering="crispEdges"/>
<rect x="0" y="708" width="1366" height="1" fill="#e0e0e0" shape-rendering="crispEdges"/>
</g>
<g id="bottomicons"><rect x="5" y="679" width="6" height="27" fill="url(#gGrip)"/><rect x="11" y="679" width="1" height="27" fill="#8e8e8e"/><rect x="7" y="691.5" width="2" height="2" fill="#555"/><rect x="13.5" y="683.500" width="128.0" height="18.500" fill="#ffffff"/><path d="M14.0 702v-18h127.5" fill="none" stroke="#7e7e7e"/><path d="M15.0 701v-16h126.0" fill="none" stroke="#4a4a4a"/><path d="M14.5 701.500h126.5v-17.500" fill="none" stroke="#e2e2e2"/><rect x="29" y="693" width="81" height="1" fill="#000"/><rect x="124.0" y="685.500" width="15.500" height="15" fill="#f0f0f0"/><path d="M124.5 700.500v-14.500h15" fill="none" stroke="#ffffff"/><path d="M124.5 700h15v-14.500" fill="none" stroke="#6e6e6e"/><path d="M128.2 691h7l-3.500 3.800z" fill="#000"/><rect x="145" y="681" width="1" height="24" fill="#a6a6a6"/><rect x="146" y="681" width="1" height="24" fill="#fdfdfd"/><rect x="149.5" y="683.500" width="98.0" height="18.500" fill="#ffffff"/><path d="M150.0 702v-18h97.5" fill="none" stroke="#7e7e7e"/><path d="M151.0 701v-16h96.0" fill="none" stroke="#4a4a4a"/><path d="M150.5 701.500h96.5v-17.500" fill="none" stroke="#e2e2e2"/><rect x="160.5" y="693" width="59.5" height="1" fill="#000"/><rect x="230.0" y="685.500" width="15.500" height="15" fill="#f0f0f0"/><path d="M230.5 700.500v-14.500h15" fill="none" stroke="#ffffff"/><path d="M230.5 700h15v-14.500" fill="none" stroke="#6e6e6e"/><path d="M234.2 691h7l-3.500 3.800z" fill="#000"/><rect x="255" y="679" width="1" height="27" fill="#a6a6a6"/><rect x="256" y="679" width="1" height="27" fill="#fdfdfd"/><rect x="262" y="679" width="6" height="27" fill="url(#gGrip)"/><rect x="268" y="679" width="1" height="27" fill="#8e8e8e"/><rect x="264" y="691.5" width="2" height="2" fill="#555"/><rect x="272.5" y="682.500" width="9.500" height="9.500" fill="#00ff00" stroke="#b0b0b0" stroke-width="0.600"/><rect x="272.5" y="695" width="9.500" height="9.500" fill="#000000" stroke="#b0b0b0" stroke-width="0.600"/><rect x="284.5" y="682.500" width="9.500" height="9.500" fill="#f4b944" stroke="#b0b0b0" stroke-width="0.600"/><rect x="284.5" y="695" width="9.500" height="9.500" fill="#ff8000" stroke="#b0b0b0" stroke-width="0.600"/><rect x="296.5" y="682.500" width="9.500" height="9.500" fill="#ff0000" stroke="#b0b0b0" stroke-width="0.600"/><rect x="296.5" y="695" width="9.500" height="9.500" fill="#e06400" stroke="#b0b0b0" stroke-width="0.600"/><rect x="308.5" y="682.500" width="9.500" height="9.500" fill="#d250d2" stroke="#b0b0b0" stroke-width="0.600"/><rect x="308.5" y="695" width="9.500" height="9.500" fill="#7a7ac4" stroke="#b0b0b0" stroke-width="0.600"/><rect x="320.5" y="682.500" width="9.500" height="9.500" fill="#ffb6c6" stroke="#b0b0b0" stroke-width="0.600"/><rect x="320.5" y="695" width="9.500" height="9.500" fill="#ffe0e0" stroke="#b0b0b0" stroke-width="0.600"/><rect x="332.5" y="682.500" width="9.500" height="9.500" fill="#ffffff" stroke="#b0b0b0" stroke-width="0.600"/><rect x="332.5" y="695" width="9.500" height="9.500" fill="#000064" stroke="#b0b0b0" stroke-width="0.600"/><rect x="344.5" y="682.500" width="9.500" height="9.500" fill="#008a00" stroke="#b0b0b0" stroke-width="0.600"/><rect x="344.5" y="695" width="9.500" height="9.500" fill="#000090" stroke="#b0b0b0" stroke-width="0.600"/><rect x="356.5" y="682.500" width="9.500" height="9.500" fill="#004a00" stroke="#b0b0b0" stroke-width="0.600"/><rect x="356.5" y="695" width="9.500" height="9.500" fill="#ffd800" stroke="#b0b0b0" stroke-width="0.600"/><rect x="295.500" y="681.500" width="11.500" height="11.500" fill="none" stroke="#fff" stroke-width="1"/><rect x="295.500" y="681.500" width="11.500" height="11.500" fill="none" stroke="#333" stroke-width="1" stroke-dasharray="1 1"/><path d="M368 691.500h6l-3 3.500z" fill="#000"/><rect x="384" y="679" width="1" height="27" fill="#a6a6a6"/><rect x="385" y="679" width="1" height="27" fill="#fdfdfd"/><rect x="390" y="679" width="6" height="27" fill="url(#gGrip)"/><rect x="396" y="679" width="1" height="27" fill="#8e8e8e"/><rect x="392" y="691.5" width="2" height="2" fill="#555"/><rect x="404.5" y="688.500" width="15" height="11.500" rx="1" fill="#fbfbfb" stroke="#6a88b4" stroke-width="1"/><rect x="405" y="688.500" width="6" height="1.500" fill="#6a88b4"/><path d="M406.5 697l2.500 -3l2 1.500" stroke="#d02020" fill="none" stroke-width="1"/><text x="412" y="698.500" font-size="11" fill="#000">1</text><rect x="432.0" y="688.500" width="15" height="11.500" rx="1" fill="#fbfbfb" stroke="#6a88b4" stroke-width="1"/><rect x="432.5" y="688.500" width="6" height="1.500" fill="#6a88b4"/><path d="M434.0 697l2.500 -3l2 1.500" stroke="#d02020" fill="none" stroke-width="1"/><text x="439.5" y="698.500" font-size="11" fill="#000">2</text><rect x="458.5" y="688.500" width="15" height="11.500" rx="1" fill="#fbfbfb" stroke="#6a88b4" stroke-width="1"/><rect x="459" y="688.500" width="6" height="1.500" fill="#6a88b4"/><path d="M460.5 697l2.500 -3l2 1.500" stroke="#d02020" fill="none" stroke-width="1"/><text x="466" y="698.500" font-size="11" fill="#000">3</text><rect x="485.5" y="688.500" width="15" height="11.500" rx="1" fill="#fbfbfb" stroke="#6a88b4" stroke-width="1"/><rect x="486" y="688.500" width="6" height="1.500" fill="#6a88b4"/><path d="M487.5 697l2.500 -3l2 1.500" stroke="#d02020" fill="none" stroke-width="1"/><text x="493" y="698.500" font-size="11" fill="#000">4</text><rect x="512.5" y="688.500" width="15" height="11.500" rx="1" fill="#fbfbfb" stroke="#6a88b4" stroke-width="1"/><rect x="513" y="688.500" width="6" height="1.500" fill="#6a88b4"/><path d="M514.5 697l2.500 -3l2 1.500" stroke="#d02020" fill="none" stroke-width="1"/><text x="520" y="698.500" font-size="11" fill="#000">5</text><rect x="539.5" y="688.500" width="15" height="11.500" rx="1" fill="#fbfbfb" stroke="#6a88b4" stroke-width="1"/><rect x="540" y="688.500" width="6" height="1.500" fill="#6a88b4"/><path d="M541.5 697l2.500 -3l2 1.500" stroke="#d02020" fill="none" stroke-width="1"/><text x="547" y="698.500" font-size="11" fill="#000">6</text><rect x="567" y="679" width="1" height="27" fill="#a6a6a6"/><rect x="568" y="679" width="1" height="27" fill="#fdfdfd"/></g>
<g id="status">
<rect x="0" y="709" width="1366" height="19" fill="#404040" shape-rendering="crispEdges"/>
<text x="10.3" y="724" font-size="12.6" fill="#ffffff" textLength="100.7" lengthAdjust="spacingAndGlyphs">For Help, press F1</text>
<text x="1095.3" y="724" font-size="12.6" fill="#ffffff" textLength="61.2" lengthAdjust="spacingAndGlyphs">01/05/2020</text>
<text x="1250.3" y="724" font-size="12.6" fill="#ffffff" textLength="47.5" lengthAdjust="spacingAndGlyphs">1,106.78</text>
<rect x="1345" y="712" width="18.5" height="15" fill="#ffffff" shape-rendering="crispEdges"/>
<text x="1354" y="724.6" font-size="13" fill="#0a8a0a" text-anchor="middle" font-weight="bold">$</text>
</g>
<g id="taskbar">
<rect x="0" y="728" width="1366" height="40" fill="url(#gTask)" shape-rendering="crispEdges"/>
</g>
<g id="taskicons"><rect x="480" y="728" width="377" height="20" fill="#6b5a30"/><rect x="480" y="728" width="377" height="3" fill="#7c683a"/><rect x="480" y="732" width="1" height="16" fill="#c2a46c" opacity="0.7"/><rect x="480" y="747.500" width="65" height="1" fill="#c2a46c" opacity="0.7"/><rect x="545" y="748" width="120" height="20" fill="#b67a2a"/><rect x="665" y="748" width="192" height="20" fill="#a08648"/><rect x="545" y="747.500" width="312" height="1.500" fill="#c6aa74"/><defs><linearGradient id="gGold" x1="0" y1="0" x2="1" y2="0"><stop offset="0" stop-color="#d6a83c"/><stop offset="1" stop-color="#e2b43a"/></linearGradient></defs><path d="M1176 728L1366 728V768H1250Z" fill="#ceac62"/><path d="M1184 728L1366 728V768H1258Z" fill="url(#gGold)"/><rect x="0" y="728" width="176" height="2.500" fill="#8c7036" opacity="0.75"/><path d="M12 738.500l11 -1.600v10h-11zM24.500 736.700l14 -2v12.200h-14zM12 748.300h11v10l-11 -1.600zM24.500 748.300h14v12.200l-14 -2z" fill="#ffffff"/><path d="M66 741q0 -2 2 -2h8l2 2h16q2 0 2 2v16q0 2 -2 2h-26q-2 0 -2 -2z" fill="#f6d98a" stroke="#d9b55a" stroke-width="0.800"/><rect x="68" y="737" width="3" height="2" fill="#2aa02a"/><rect x="76" y="738.500" width="3" height="2" fill="#d03030"/><rect x="85" y="740" width="3" height="2" fill="#2a80d0"/><path d="M70 762v-10q0 -2 2 -2h18q2 0 2 2v10h-5v-6h-12v6z" fill="#6ac0ee" stroke="#2a8ac8" stroke-width="0.800"/><rect x="140" y="737" width="17.500" height="24" fill="#ffffff" stroke="#d24726" stroke-width="1.200"/><circle cx="150.500" cy="744" r="3.500" fill="#d24726"/><path d="M146 751h9M146 754h9" stroke="#d24726" stroke-width="1.300"/><path d="M128 736.500l17 -3v31l-17 -3z" fill="#d24726"/><text x="136.500" y="754.500" font-size="15" font-weight="bold" fill="#fff" text-anchor="middle">P</text><defs><linearGradient id="gMS" x1="0" y1="0" x2="0" y2="1"><stop offset="0" stop-color="#8e8e8e"/><stop offset="0.42" stop-color="#242424"/><stop offset="0.55" stop-color="#050505"/><stop offset="1" stop-color="#000"/></linearGradient><linearGradient id="gAct" x1="0" y1="0" x2="1" y2="1"><stop offset="0" stop-color="#ead9b2"/><stop offset="1" stop-color="#c9a967"/></linearGradient><linearGradient id="gBar" x1="0" y1="0" x2="0" y2="1"><stop offset="0" stop-color="#f4701c"/><stop offset="1" stop-color="#f8a428"/></linearGradient></defs><rect x="176.500" y="729.500" width="57" height="38" fill="url(#gAct)" stroke="#f8efd8" stroke-width="1.200"/><rect x="189" y="732" width="32" height="32" rx="2.500" fill="url(#gMS)"/><path d="M197.100 761.900l1.500 -11.700l2.400 -0.800l-1 12.500zM201.900 761.900l1.500 -19.500l3.200 -1l-1.500 20.500zM207.300 761.900l1.900 -27.100l3.600 -0.700l-1.500 27.800z" fill="url(#gBar)"/><rect x="238.0" y="729.500" width="57.5" height="39" fill="#ffffff" fill-opacity="0.16" stroke="#ffffff" stroke-opacity="0.35"/><g transform="translate(0,-1)"><circle cx="267" cy="749" r="15" fill="#db4437"/><path d="M267 749L254 756.500A15 15 0 0 0 274.500 762Z" fill="#0f9d58"/><path d="M267 749L254 741.500A15 15 0 0 0 254 756.500L260.500 760.200Z" fill="#0f9d58"/><path d="M267 749L274.500 762A15 15 0 0 0 280 741.500L267 741.500Z" fill="#ffcd40"/><circle cx="267" cy="749" r="6.800" fill="#ffffff"/><circle cx="267" cy="749" r="5.300" fill="#4285f4"/></g><rect x="300.0" y="729.500" width="57.5" height="39" fill="#ffffff" fill-opacity="0.16" stroke="#ffffff" stroke-opacity="0.35"/><rect x="326" y="737" width="17.500" height="24" fill="#ffffff" stroke="#2b579a" stroke-width="1.200"/><path d="M331 741.500h10M331 745h10M331 748.500h10M331 752h10M331 755.500h10" stroke="#2b579a" stroke-width="1.400"/><path d="M314 736.500l17 -3v31l-17 -3z" fill="#2b579a"/><text x="322.500" y="754.500" font-size="13.500" font-weight="bold" fill="#fff" text-anchor="middle">W</text><rect x="375.500" y="732" width="30" height="30" rx="3.500" fill="#1a6ef0"/><rect x="375.500" y="758" width="30" height="4" rx="2" fill="#0e4cc0"/><path d="M382 752.500v-11.500h17v11.500h-4.500v-7h-2v7h-4v-7h-2v7z" fill="#ffffff"/><rect x="424.0" y="729.500" width="57.5" height="39" fill="#ffffff" fill-opacity="0.16" stroke="#ffffff" stroke-opacity="0.35"/><rect x="441.500" y="733.500" width="22" height="28" rx="2" fill="#cfe3f4" stroke="#5a8ac0" stroke-width="1"/><rect x="444" y="736" width="17" height="7" fill="#f4f8fc" stroke="#8aa8c8" stroke-width="0.600"/><text x="459.500" y="742.300" font-size="7" fill="#3a5a9a" text-anchor="end">0</text><rect x="444.5" y="746.0" width="3" height="2.800" fill="#6a8ab8"/><rect x="448.8" y="746.0" width="3" height="2.800" fill="#6a8ab8"/><rect x="453.1" y="746.0" width="3" height="2.800" fill="#6a8ab8"/><rect x="457.4" y="746.0" width="3" height="2.800" fill="#6a8ab8"/><rect x="444.5" y="749.8" width="3" height="2.800" fill="#6a8ab8"/><rect x="448.8" y="749.8" width="3" height="2.800" fill="#6a8ab8"/><rect x="453.1" y="749.8" width="3" height="2.800" fill="#6a8ab8"/><rect x="457.4" y="749.8" width="3" height="2.800" fill="#6a8ab8"/><rect x="444.5" y="753.6" width="3" height="2.800" fill="#6a8ab8"/><rect x="448.8" y="753.6" width="3" height="2.800" fill="#6a8ab8"/><rect x="453.1" y="753.6" width="3" height="2.800" fill="#6a8ab8"/><rect x="457.4" y="753.6" width="3" height="2.800" fill="#e89020"/><rect x="444.5" y="757.4" width="3" height="2.800" fill="#6a8ab8"/><rect x="448.8" y="757.4" width="3" height="2.800" fill="#6a8ab8"/><rect x="453.1" y="757.4" width="3" height="2.800" fill="#6a8ab8"/><rect x="457.4" y="757.4" width="3" height="2.800" fill="#e89020"/><rect x="485.5" y="729.500" width="53" height="39" fill="#ffffff" fill-opacity="0.16" stroke="#ffffff" stroke-opacity="0.35"/><rect x="509" y="737" width="17.500" height="24" fill="#ffffff" stroke="#1e7145" stroke-width="1.200"/><path d="M513 741.500h5M520 741.500h5M513 745.500h5M520 745.500h5M513 749.500h5M520 749.500h5M513 753.500h5M520 753.500h5M513 757.500h5M520 757.500h5" stroke="#1e7145" stroke-width="2.200"/><path d="M497 736.500l17 -3v31l-17 -3z" fill="#1e7145"/><text x="505.500" y="754.500" font-size="14" font-weight="bold" fill="#fff" text-anchor="middle">X</text><path d="M541.500 729.500v39" stroke="#fff" stroke-opacity="0.3"/><defs><linearGradient id="gIE" x1="0" y1="0" x2="0.3" y2="1"><stop offset="0" stop-color="#9ae8ff"/><stop offset="0.5" stop-color="#4cc4f6"/><stop offset="1" stop-color="#1a86dc"/></linearGradient><radialGradient id="gFFb" cx="0.4" cy="0.3" r="0.8"><stop offset="0" stop-color="#5ab4f0"/><stop offset="0.6" stop-color="#1a6ac8"/><stop offset="1" stop-color="#0a3a8a"/></radialGradient><linearGradient id="gFFo" x1="0.8" y1="0" x2="0.2" y2="1"><stop offset="0" stop-color="#fbd43a"/><stop offset="0.35" stop-color="#f59a1e"/><stop offset="1" stop-color="#dd4a1a"/></linearGradient></defs><path d="M587.200 754.800A10.600 10.600 0 1 1 589 748" fill="none" stroke="url(#gIE)" stroke-width="6.400"/><rect x="569" y="746.500" width="22" height="4.600" fill="#3eb8f2"/><path d="M566 761.500c-7 -6 2 -20 14 -26c5 -2.500 9 -2.600 10.500 -0.500" fill="none" stroke="#f6c21c" stroke-width="2.600" stroke-linecap="round"/><circle cx="638.700" cy="747.500" r="15" fill="url(#gFFo)"/><circle cx="641.500" cy="744" r="10.800" fill="url(#gFFb)"/><path d="M626.500 738.500c1.500 1 3 1 4.500 0.300c2 -1.500 4.500 -1.800 6.500 -0.800c-1 0.800 -1.500 2 -1 3c1.500 0.300 2.500 1.200 2 2.600c-1.800 0.200 -3.200 1.200 -3.500 3c0.800 2.600 3.200 3.600 6.200 2.800c1.600 -0.500 2.800 -1.500 4.200 -1.200c-1 3.400 -4.500 5.600 -8.500 5.200c-6 -0.600 -10 -5 -10.400 -10.900z" fill="url(#gFFo)"/><rect x="685.500" y="734" width="30" height="30" fill="#d9472b"/><circle cx="700.500" cy="749" r="10.500" fill="none" stroke="#fff" stroke-width="2.600"/><text x="700.500" y="755.500" font-size="17" font-weight="bold" fill="#fff" text-anchor="middle">?</text><rect x="762" y="741" width="15.500" height="13" fill="#ffffff" stroke="#0072c6" stroke-width="1.200"/><path d="M762.500 742l7.200 6l7.200 -6" fill="none" stroke="#0072c6" stroke-width="1.500"/><path d="M747.500 736.500l17 -3v31l-17 -3z" fill="#0072c6"/><text x="756" y="754.500" font-size="14" font-weight="bold" fill="#fff" text-anchor="middle">O</text><path d="M810 737l22 -2.500l4 3v22l-4 2.500l-22 -2.500z" fill="#eef2ea" stroke="#b8c0b0" stroke-width="0.800"/><path d="M814 744h13l4 3l-4 3h-2v-3h-11zM819 753h10l4 3l-4 3v-3h-10z" fill="#1e5a2e"/><defs><linearGradient id="gPro" x1="0" y1="0" x2="0" y2="1"><stop offset="0" stop-color="#f8d848"/><stop offset="1" stop-color="#f2a234"/></linearGradient></defs><rect x="857.500" y="729.500" width="58.500" height="39" fill="url(#gPro)" stroke="#fbe9a0"/><rect x="871.500" y="732.500" width="32" height="32" rx="5" fill="none" stroke="#b8283a" stroke-width="1.200"/><text x="887.500" y="759" font-size="15.500" fill="#b3243c" text-anchor="middle" textLength="24" lengthAdjust="spacingAndGlyphs">Pro</text><path d="M879 742.500l5 -1l3 -2.500l3 1.500l5 -1.500v4.500h-16z" fill="#8a2a1a"/><path d="M1077.500 751l4.500 -4.500l4.500 4.500z" fill="#ffffff"/><rect x="1102" y="741" width="5" height="8" fill="#8a8a8a" stroke="#555" stroke-width="0.700"/><rect x="1103" y="749" width="3" height="6" fill="#777"/><circle cx="1110" cy="753" r="4.500" fill="#28a838" stroke="#fff" stroke-width="0.700"/><path d="M1107.500 753l2 2l3 -4" stroke="#fff" stroke-width="1.300" fill="none"/><circle cx="1131" cy="748.500" r="7.500" fill="#4a8ad0" stroke="#d8d8d8" stroke-width="1.500"/><path d="M1125 748c3 -5 8 -4 9 0c1 3 3 4 4 2" stroke="#e8f0f8" stroke-width="2" fill="none"/><path d="M1147.500 746h3l4.500 -4.500v15l-4.500 -4.500h-3z" fill="none" stroke="#fff" stroke-width="1.200"/><path d="M1157.500 745.500q2 3 0 6.500M1160 743.500q3.500 5 0 10.500" stroke="#fff" stroke-width="1.100" fill="none"/><path d="M1171.500 741.500v15" stroke="#fff" stroke-width="1.500"/><path d="M1173 742.500h7l2 1.500h4l-2 4l2 3h-6l-2 -1.500h-5z" fill="none" stroke="#fff" stroke-width="1.200"/><rect x="1195" y="753.5" width="2" height="1.5" fill="#ffffff"/><rect x="1198" y="751.0" width="2" height="4.0" fill="#ffffff"/><rect x="1201" y="748.5" width="2" height="6.5" fill="#ffffff"/><rect x="1204" y="746.0" width="2" height="9.0" fill="#ffffff"/><rect x="1207" y="743.5" width="2" height="11.5" fill="#ffffff"/><rect x="1225.500" y="742.500" width="8" height="13" fill="none" stroke="#fff" stroke-width="1.300"/><rect x="1227.500" y="740.500" width="4" height="2" fill="#fff"/><path d="M1220 741v4M1223 741v4M1219 745h5v3h-5zM1221.500 748v7" stroke="#fff" stroke-width="1.100" fill="none"/><text x="1249" y="753.500" font-size="12" fill="#fff" textLength="22.500" lengthAdjust="spacingAndGlyphs">POR</text><text x="1304.500" y="745.300" font-size="12" fill="#fff" textLength="27" lengthAdjust="spacingAndGlyphs">22:55</text><text x="1289" y="761.300" font-size="12" fill="#fff" textLength="57.500" lengthAdjust="spacingAndGlyphs">17/06/2020</text></g>
</svg>
</body></html>
